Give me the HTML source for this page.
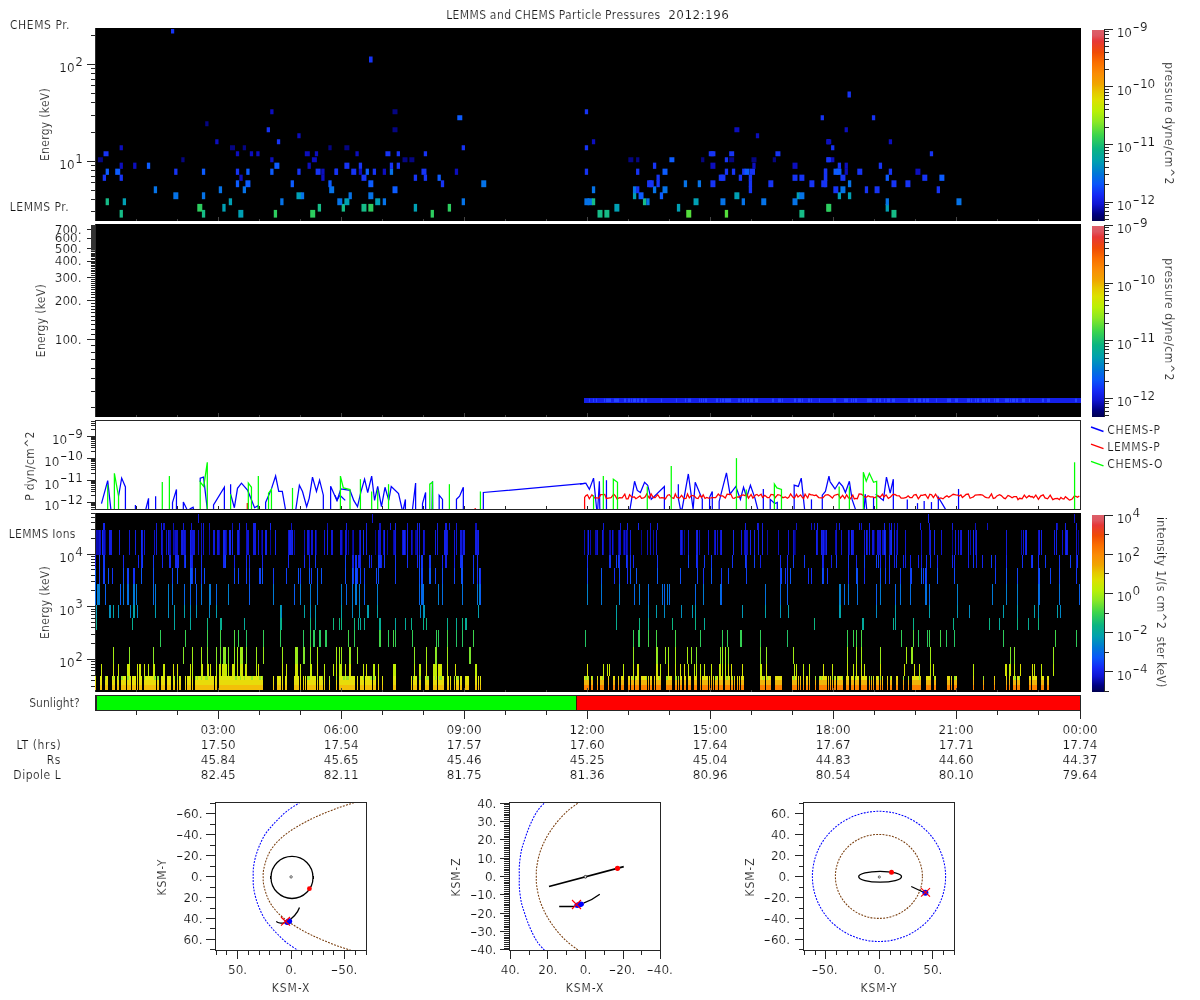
<!DOCTYPE html>
<html><head><meta charset="utf-8"><title>LEMMS and CHEMS Particle Pressures 2012:196</title>
<style>html,body{margin:0;padding:0;background:#fff}svg{display:block;will-change:transform}</style></head>
<body>
<svg width="1200" height="1000" viewBox="0 0 1200 1000">
<defs><linearGradient id="wg" x1="0" y1="0" x2="0" y2="1">
<stop offset="0.0" stop-color="#dc5f69"/>
<stop offset="0.03" stop-color="#de555f"/>
<stop offset="0.057" stop-color="#e63737"/>
<stop offset="0.117" stop-color="#f04b05"/>
<stop offset="0.17" stop-color="#fa6e00"/>
<stop offset="0.227" stop-color="#fa8c05"/>
<stop offset="0.283" stop-color="#f0a500"/>
<stop offset="0.326" stop-color="#e6c800"/>
<stop offset="0.368" stop-color="#dce100"/>
<stop offset="0.425" stop-color="#b9f005"/>
<stop offset="0.48" stop-color="#8ce823"/>
<stop offset="0.55" stop-color="#3cd54b"/>
<stop offset="0.623" stop-color="#0ab482"/>
<stop offset="0.686" stop-color="#00a0af"/>
<stop offset="0.75" stop-color="#0078d7"/>
<stop offset="0.807" stop-color="#0a55fa"/>
<stop offset="0.864" stop-color="#1428f5"/>
<stop offset="0.912" stop-color="#0f14d2"/>
<stop offset="0.963" stop-color="#000082"/>
<stop offset="1.0" stop-color="#000050"/>
</linearGradient></defs>
<style>.w{font-family:'DejaVu Sans Condensed','DejaVu Sans','Liberation Sans',sans-serif;font-size:12px;fill:#161616;stroke:#fff;stroke-width:0.16px;paint-order:fill stroke}.n{font-family:'DejaVu Sans','Liberation Sans',sans-serif;font-size:12px;fill:#161616;stroke:#fff;stroke-width:0.16px;paint-order:fill stroke}</style>
<rect x="0.00" y="0.00" width="1200.00" height="1000.00" fill="#fff" />
<text x="446.20" y="19.10" text-anchor="start" class="w" style="letter-spacing:0.42px;word-spacing:-0.6px">LEMMS and CHEMS Particle Pressures&#160;&#160;<tspan class="n" style="letter-spacing:0.45px" dx="1.2">2012:196</tspan></text>
<rect x="95.00" y="28.00" width="986.00" height="193.00" fill="#000" />
<rect x="95.00" y="28.00" width="1.00" height="193.00" fill="#2c2c2c" />
<line x1="136.50" y1="219.00" x2="136.50" y2="221.00" stroke="#444" stroke-width="1"  shape-rendering="crispEdges"/>
<line x1="177.50" y1="219.00" x2="177.50" y2="221.00" stroke="#444" stroke-width="1"  shape-rendering="crispEdges"/>
<line x1="218.50" y1="217.00" x2="218.50" y2="221.00" stroke="#444" stroke-width="1"  shape-rendering="crispEdges"/>
<line x1="259.50" y1="219.00" x2="259.50" y2="221.00" stroke="#444" stroke-width="1"  shape-rendering="crispEdges"/>
<line x1="300.50" y1="219.00" x2="300.50" y2="221.00" stroke="#444" stroke-width="1"  shape-rendering="crispEdges"/>
<line x1="341.50" y1="217.00" x2="341.50" y2="221.00" stroke="#444" stroke-width="1"  shape-rendering="crispEdges"/>
<line x1="382.50" y1="219.00" x2="382.50" y2="221.00" stroke="#444" stroke-width="1"  shape-rendering="crispEdges"/>
<line x1="423.50" y1="219.00" x2="423.50" y2="221.00" stroke="#444" stroke-width="1"  shape-rendering="crispEdges"/>
<line x1="464.50" y1="217.00" x2="464.50" y2="221.00" stroke="#444" stroke-width="1"  shape-rendering="crispEdges"/>
<line x1="505.50" y1="219.00" x2="505.50" y2="221.00" stroke="#444" stroke-width="1"  shape-rendering="crispEdges"/>
<line x1="546.50" y1="219.00" x2="546.50" y2="221.00" stroke="#444" stroke-width="1"  shape-rendering="crispEdges"/>
<line x1="587.50" y1="217.00" x2="587.50" y2="221.00" stroke="#444" stroke-width="1"  shape-rendering="crispEdges"/>
<line x1="628.50" y1="219.00" x2="628.50" y2="221.00" stroke="#444" stroke-width="1"  shape-rendering="crispEdges"/>
<line x1="669.50" y1="219.00" x2="669.50" y2="221.00" stroke="#444" stroke-width="1"  shape-rendering="crispEdges"/>
<line x1="710.50" y1="217.00" x2="710.50" y2="221.00" stroke="#444" stroke-width="1"  shape-rendering="crispEdges"/>
<line x1="751.50" y1="219.00" x2="751.50" y2="221.00" stroke="#444" stroke-width="1"  shape-rendering="crispEdges"/>
<line x1="792.50" y1="219.00" x2="792.50" y2="221.00" stroke="#444" stroke-width="1"  shape-rendering="crispEdges"/>
<line x1="833.50" y1="217.00" x2="833.50" y2="221.00" stroke="#444" stroke-width="1"  shape-rendering="crispEdges"/>
<line x1="874.50" y1="219.00" x2="874.50" y2="221.00" stroke="#444" stroke-width="1"  shape-rendering="crispEdges"/>
<line x1="915.50" y1="219.00" x2="915.50" y2="221.00" stroke="#444" stroke-width="1"  shape-rendering="crispEdges"/>
<line x1="956.50" y1="217.00" x2="956.50" y2="221.00" stroke="#444" stroke-width="1"  shape-rendering="crispEdges"/>
<line x1="997.50" y1="219.00" x2="997.50" y2="221.00" stroke="#444" stroke-width="1"  shape-rendering="crispEdges"/>
<line x1="1038.50" y1="219.00" x2="1038.50" y2="221.00" stroke="#444" stroke-width="1"  shape-rendering="crispEdges"/>
<line x1="91.00" y1="211.50" x2="95.00" y2="211.50" stroke="#262626" stroke-width="1"  shape-rendering="crispEdges"/>
<line x1="91.00" y1="199.50" x2="95.00" y2="199.50" stroke="#262626" stroke-width="1"  shape-rendering="crispEdges"/>
<line x1="91.00" y1="190.50" x2="95.00" y2="190.50" stroke="#262626" stroke-width="1"  shape-rendering="crispEdges"/>
<line x1="91.00" y1="182.50" x2="95.00" y2="182.50" stroke="#262626" stroke-width="1"  shape-rendering="crispEdges"/>
<line x1="91.00" y1="176.50" x2="95.00" y2="176.50" stroke="#262626" stroke-width="1"  shape-rendering="crispEdges"/>
<line x1="91.00" y1="170.50" x2="95.00" y2="170.50" stroke="#262626" stroke-width="1"  shape-rendering="crispEdges"/>
<line x1="91.00" y1="165.50" x2="95.00" y2="165.50" stroke="#262626" stroke-width="1"  shape-rendering="crispEdges"/>
<line x1="87.00" y1="161.50" x2="95.00" y2="161.50" stroke="#262626" stroke-width="1"  shape-rendering="crispEdges"/>
<line x1="91.00" y1="132.50" x2="95.00" y2="132.50" stroke="#262626" stroke-width="1"  shape-rendering="crispEdges"/>
<line x1="91.00" y1="115.50" x2="95.00" y2="115.50" stroke="#262626" stroke-width="1"  shape-rendering="crispEdges"/>
<line x1="91.00" y1="102.50" x2="95.00" y2="102.50" stroke="#262626" stroke-width="1"  shape-rendering="crispEdges"/>
<line x1="91.00" y1="93.50" x2="95.00" y2="93.50" stroke="#262626" stroke-width="1"  shape-rendering="crispEdges"/>
<line x1="91.00" y1="85.50" x2="95.00" y2="85.50" stroke="#262626" stroke-width="1"  shape-rendering="crispEdges"/>
<line x1="91.00" y1="79.50" x2="95.00" y2="79.50" stroke="#262626" stroke-width="1"  shape-rendering="crispEdges"/>
<line x1="91.00" y1="73.50" x2="95.00" y2="73.50" stroke="#262626" stroke-width="1"  shape-rendering="crispEdges"/>
<line x1="91.00" y1="68.50" x2="95.00" y2="68.50" stroke="#262626" stroke-width="1"  shape-rendering="crispEdges"/>
<line x1="87.00" y1="64.50" x2="95.00" y2="64.50" stroke="#262626" stroke-width="1"  shape-rendering="crispEdges"/>
<line x1="91.00" y1="35.50" x2="95.00" y2="35.50" stroke="#262626" stroke-width="1"  shape-rendering="crispEdges"/>
<text x="82.80" y="72.30" text-anchor="end" class="n">10<tspan dy="-6.5" dx="0.6" style="font-size:12px">2</tspan></text>
<text x="82.80" y="169.15" text-anchor="end" class="n">10<tspan dy="-6.5" dx="0.6" style="font-size:12px">1</tspan></text>
<text x="10.00" y="28.70" text-anchor="start" class="w" style="letter-spacing:0.55px">CHEMS Pr.</text>
<text x="9.80" y="210.70" text-anchor="start" class="w" style="letter-spacing:0.5px">LEMMS Pr.</text>
<text transform="translate(48.8,124.5) rotate(-90)" text-anchor="middle" class="w" style="letter-spacing:0.3px">Energy (keV)</text>
<rect x="1092.00" y="30.00" width="12.50" height="191.00" fill="url(#wg)" />
<line x1="1104.50" y1="29.00" x2="1104.50" y2="221.00" stroke="#262626" stroke-width="1"  shape-rendering="crispEdges"/>
<line x1="1104.00" y1="29.50" x2="1113.00" y2="29.50" stroke="#262626" stroke-width="1"  shape-rendering="crispEdges"/>
<text x="1116.70" y="37.10" text-anchor="start" class="n">10<tspan dy="-6.5" dx="0.6" style="font-size:12px"><tspan textLength="7.4" lengthAdjust="spacingAndGlyphs">-</tspan>9</tspan></text>
<line x1="1104.00" y1="31.50" x2="1109.00" y2="31.50" stroke="#262626" stroke-width="1"  shape-rendering="crispEdges"/>
<line x1="1104.00" y1="34.50" x2="1109.00" y2="34.50" stroke="#262626" stroke-width="1"  shape-rendering="crispEdges"/>
<line x1="1104.00" y1="38.50" x2="1109.00" y2="38.50" stroke="#262626" stroke-width="1"  shape-rendering="crispEdges"/>
<line x1="1104.00" y1="41.50" x2="1109.00" y2="41.50" stroke="#262626" stroke-width="1"  shape-rendering="crispEdges"/>
<line x1="1104.00" y1="46.50" x2="1109.00" y2="46.50" stroke="#262626" stroke-width="1"  shape-rendering="crispEdges"/>
<line x1="1104.00" y1="52.50" x2="1109.00" y2="52.50" stroke="#262626" stroke-width="1"  shape-rendering="crispEdges"/>
<line x1="1104.00" y1="59.50" x2="1109.00" y2="59.50" stroke="#262626" stroke-width="1"  shape-rendering="crispEdges"/>
<line x1="1104.00" y1="69.50" x2="1109.00" y2="69.50" stroke="#262626" stroke-width="1"  shape-rendering="crispEdges"/>
<line x1="1104.00" y1="86.50" x2="1113.00" y2="86.50" stroke="#262626" stroke-width="1"  shape-rendering="crispEdges"/>
<text x="1116.70" y="94.77" text-anchor="start" class="n">10<tspan dy="-6.5" dx="0.6" style="font-size:12px"><tspan textLength="7.4" lengthAdjust="spacingAndGlyphs">-</tspan>10</tspan></text>
<line x1="1104.00" y1="89.50" x2="1109.00" y2="89.50" stroke="#262626" stroke-width="1"  shape-rendering="crispEdges"/>
<line x1="1104.00" y1="92.50" x2="1109.00" y2="92.50" stroke="#262626" stroke-width="1"  shape-rendering="crispEdges"/>
<line x1="1104.00" y1="95.50" x2="1109.00" y2="95.50" stroke="#262626" stroke-width="1"  shape-rendering="crispEdges"/>
<line x1="1104.00" y1="99.50" x2="1109.00" y2="99.50" stroke="#262626" stroke-width="1"  shape-rendering="crispEdges"/>
<line x1="1104.00" y1="104.50" x2="1109.00" y2="104.50" stroke="#262626" stroke-width="1"  shape-rendering="crispEdges"/>
<line x1="1104.00" y1="109.50" x2="1109.00" y2="109.50" stroke="#262626" stroke-width="1"  shape-rendering="crispEdges"/>
<line x1="1104.00" y1="117.50" x2="1109.00" y2="117.50" stroke="#262626" stroke-width="1"  shape-rendering="crispEdges"/>
<line x1="1104.00" y1="127.50" x2="1109.00" y2="127.50" stroke="#262626" stroke-width="1"  shape-rendering="crispEdges"/>
<line x1="1104.00" y1="144.50" x2="1113.00" y2="144.50" stroke="#262626" stroke-width="1"  shape-rendering="crispEdges"/>
<text x="1116.70" y="152.44" text-anchor="start" class="n">10<tspan dy="-6.5" dx="0.6" style="font-size:12px"><tspan textLength="7.4" lengthAdjust="spacingAndGlyphs">-</tspan>11</tspan></text>
<line x1="1104.00" y1="147.50" x2="1109.00" y2="147.50" stroke="#262626" stroke-width="1"  shape-rendering="crispEdges"/>
<line x1="1104.00" y1="150.50" x2="1109.00" y2="150.50" stroke="#262626" stroke-width="1"  shape-rendering="crispEdges"/>
<line x1="1104.00" y1="153.50" x2="1109.00" y2="153.50" stroke="#262626" stroke-width="1"  shape-rendering="crispEdges"/>
<line x1="1104.00" y1="157.50" x2="1109.00" y2="157.50" stroke="#262626" stroke-width="1"  shape-rendering="crispEdges"/>
<line x1="1104.00" y1="161.50" x2="1109.00" y2="161.50" stroke="#262626" stroke-width="1"  shape-rendering="crispEdges"/>
<line x1="1104.00" y1="167.50" x2="1109.00" y2="167.50" stroke="#262626" stroke-width="1"  shape-rendering="crispEdges"/>
<line x1="1104.00" y1="174.50" x2="1109.00" y2="174.50" stroke="#262626" stroke-width="1"  shape-rendering="crispEdges"/>
<line x1="1104.00" y1="184.50" x2="1109.00" y2="184.50" stroke="#262626" stroke-width="1"  shape-rendering="crispEdges"/>
<line x1="1104.00" y1="202.50" x2="1113.00" y2="202.50" stroke="#262626" stroke-width="1"  shape-rendering="crispEdges"/>
<text x="1116.70" y="210.11" text-anchor="start" class="n">10<tspan dy="-6.5" dx="0.6" style="font-size:12px"><tspan textLength="7.4" lengthAdjust="spacingAndGlyphs">-</tspan>12</tspan></text>
<line x1="1104.00" y1="204.50" x2="1109.00" y2="204.50" stroke="#262626" stroke-width="1"  shape-rendering="crispEdges"/>
<line x1="1104.00" y1="207.50" x2="1109.00" y2="207.50" stroke="#262626" stroke-width="1"  shape-rendering="crispEdges"/>
<line x1="1104.00" y1="211.50" x2="1109.00" y2="211.50" stroke="#262626" stroke-width="1"  shape-rendering="crispEdges"/>
<line x1="1104.00" y1="215.50" x2="1109.00" y2="215.50" stroke="#262626" stroke-width="1"  shape-rendering="crispEdges"/>
<line x1="1104.00" y1="219.50" x2="1109.00" y2="219.50" stroke="#262626" stroke-width="1"  shape-rendering="crispEdges"/>
<text transform="translate(1165,123.6) rotate(90)" text-anchor="middle" class="w" style="letter-spacing:0.55px">pressure dyne/cm^2</text>
<rect x="119.60" y="209.90" width="3.30" height="7.70" fill="#16bc87" />
<rect x="201.89" y="209.90" width="3.30" height="7.70" fill="#16bc87" />
<rect x="238.33" y="209.90" width="5.00" height="7.70" fill="#00a0b4" />
<rect x="273.77" y="209.90" width="3.30" height="7.70" fill="#2dcd5f" />
<rect x="310.21" y="209.90" width="5.00" height="7.70" fill="#2dcd5f" />
<rect x="197.29" y="203.90" width="5.00" height="7.70" fill="#2dcd5f" />
<rect x="222.31" y="203.90" width="3.30" height="7.70" fill="#00a0b4" />
<rect x="317.73" y="203.90" width="3.30" height="7.70" fill="#16bc87" />
<rect x="105.64" y="198.30" width="3.30" height="6.90" fill="#16bc87" />
<rect x="122.72" y="198.30" width="3.30" height="6.90" fill="#00a0b4" />
<rect x="228.77" y="198.30" width="3.30" height="6.90" fill="#00a0b4" />
<rect x="280.23" y="198.30" width="3.30" height="6.90" fill="#0573e8" />
<rect x="173.33" y="192.30" width="5.00" height="6.90" fill="#0573e8" />
<rect x="201.89" y="192.30" width="3.30" height="6.90" fill="#0573e8" />
<rect x="296.46" y="192.30" width="5.00" height="6.90" fill="#00a0b4" />
<rect x="300.85" y="192.30" width="3.30" height="6.90" fill="#0573e8" />
<rect x="153.77" y="186.30" width="3.30" height="6.90" fill="#0573e8" />
<rect x="218.77" y="186.30" width="3.30" height="6.90" fill="#0573e8" />
<rect x="242.72" y="186.30" width="3.30" height="6.90" fill="#0573e8" />
<rect x="329.17" y="186.30" width="5.00" height="6.90" fill="#0573e8" />
<rect x="235.85" y="180.30" width="3.30" height="6.90" fill="#0c5cff" />
<rect x="245.42" y="180.30" width="5.00" height="6.90" fill="#0c5cff" />
<rect x="290.64" y="180.30" width="3.30" height="6.90" fill="#0c5cff" />
<rect x="328.35" y="180.30" width="3.30" height="6.90" fill="#0c5cff" />
<rect x="102.72" y="174.65" width="3.30" height="6.20" fill="#1634f5" />
<rect x="119.60" y="174.65" width="3.30" height="6.20" fill="#1634f5" />
<rect x="239.39" y="174.65" width="3.30" height="6.20" fill="#0c0ebe" />
<rect x="321.27" y="174.65" width="3.30" height="6.20" fill="#0c0ebe" />
<rect x="105.64" y="168.65" width="3.30" height="6.20" fill="#0c5cff" />
<rect x="115.21" y="168.65" width="5.00" height="6.20" fill="#0c5cff" />
<rect x="174.18" y="168.65" width="3.30" height="6.20" fill="#1634f5" />
<rect x="201.89" y="168.65" width="3.30" height="6.20" fill="#0c5cff" />
<rect x="235.85" y="168.65" width="3.30" height="6.20" fill="#1634f5" />
<rect x="246.27" y="168.65" width="3.30" height="6.20" fill="#0c5cff" />
<rect x="270.23" y="168.65" width="3.30" height="6.20" fill="#0c5cff" />
<rect x="297.31" y="168.65" width="3.30" height="6.20" fill="#1634f5" />
<rect x="315.62" y="168.65" width="5.00" height="6.20" fill="#1634f5" />
<rect x="321.27" y="168.65" width="3.30" height="6.20" fill="#0c0ebe" />
<rect x="334.81" y="168.65" width="3.30" height="6.20" fill="#1634f5" />
<rect x="119.60" y="162.65" width="3.30" height="6.20" fill="#0c0ebe" />
<rect x="133.14" y="162.65" width="3.30" height="6.20" fill="#0c0ebe" />
<rect x="146.89" y="162.65" width="3.30" height="6.20" fill="#0c5cff" />
<rect x="274.38" y="162.65" width="5.00" height="6.20" fill="#0c5cff" />
<rect x="307.52" y="162.65" width="3.30" height="6.20" fill="#0c0ebe" />
<rect x="97.92" y="157.25" width="5.00" height="5.00" fill="#050582" />
<rect x="181.27" y="157.25" width="3.30" height="5.00" fill="#050582" />
<rect x="270.23" y="157.25" width="3.30" height="5.00" fill="#0c0ebe" />
<rect x="311.88" y="157.25" width="5.00" height="5.00" fill="#0c0ebe" />
<rect x="103.54" y="151.25" width="5.00" height="5.00" fill="#1634f5" />
<rect x="235.85" y="151.25" width="3.30" height="5.00" fill="#0c0ebe" />
<rect x="249.81" y="151.25" width="3.30" height="5.00" fill="#0c0ebe" />
<rect x="256.27" y="151.25" width="3.30" height="5.00" fill="#0c0ebe" />
<rect x="304.79" y="151.25" width="5.00" height="5.00" fill="#0c0ebe" />
<rect x="314.81" y="151.25" width="3.30" height="5.00" fill="#0c0ebe" />
<rect x="119.60" y="145.25" width="3.30" height="5.00" fill="#0c0ebe" />
<rect x="230.00" y="145.25" width="5.00" height="5.00" fill="#050582" />
<rect x="242.72" y="145.25" width="3.30" height="5.00" fill="#050582" />
<rect x="328.35" y="145.25" width="3.30" height="5.00" fill="#050582" />
<rect x="215.22" y="139.25" width="3.30" height="5.00" fill="#0c0ebe" />
<rect x="276.89" y="139.25" width="3.30" height="5.00" fill="#1634f5" />
<rect x="297.31" y="133.25" width="3.30" height="5.00" fill="#0c0ebe" />
<rect x="266.68" y="127.25" width="3.30" height="5.00" fill="#1634f5" />
<rect x="205.22" y="121.25" width="3.30" height="5.00" fill="#050582" />
<rect x="270.23" y="109.25" width="3.30" height="5.00" fill="#0c0ebe" />
<rect x="430.64" y="209.90" width="3.30" height="7.70" fill="#2dcd5f" />
<rect x="341.68" y="203.90" width="3.30" height="7.70" fill="#16bc87" />
<rect x="361.46" y="203.90" width="5.00" height="7.70" fill="#16bc87" />
<rect x="368.33" y="203.90" width="5.00" height="7.70" fill="#2dcd5f" />
<rect x="413.77" y="203.90" width="3.30" height="7.70" fill="#00a0b4" />
<rect x="447.73" y="203.90" width="3.30" height="7.70" fill="#2dcd5f" />
<rect x="337.29" y="198.30" width="5.00" height="6.90" fill="#0573e8" />
<rect x="344.38" y="198.30" width="5.00" height="6.90" fill="#00a0b4" />
<rect x="375.21" y="198.30" width="5.00" height="6.90" fill="#00a0b4" />
<rect x="382.73" y="198.30" width="3.30" height="6.90" fill="#0573e8" />
<rect x="461.68" y="198.30" width="3.30" height="6.90" fill="#0573e8" />
<rect x="348.56" y="192.30" width="3.30" height="6.90" fill="#0573e8" />
<rect x="368.33" y="192.30" width="5.00" height="6.90" fill="#0573e8" />
<rect x="392.50" y="186.30" width="5.00" height="6.90" fill="#0c5cff" />
<rect x="368.33" y="180.30" width="5.00" height="6.90" fill="#0c5cff" />
<rect x="440.85" y="180.30" width="3.30" height="6.90" fill="#1634f5" />
<rect x="481.25" y="180.30" width="5.00" height="6.90" fill="#0573e8" />
<rect x="361.46" y="174.65" width="5.00" height="6.20" fill="#1634f5" />
<rect x="413.77" y="174.65" width="3.30" height="6.20" fill="#1634f5" />
<rect x="423.77" y="174.65" width="3.30" height="6.20" fill="#1634f5" />
<rect x="437.52" y="174.65" width="3.30" height="6.20" fill="#0c5cff" />
<rect x="334.39" y="168.65" width="3.30" height="6.20" fill="#1634f5" />
<rect x="351.25" y="168.65" width="5.00" height="6.20" fill="#1634f5" />
<rect x="358.77" y="168.65" width="3.30" height="6.20" fill="#0c0ebe" />
<rect x="365.64" y="168.65" width="3.30" height="6.20" fill="#0c5cff" />
<rect x="372.73" y="168.65" width="3.30" height="6.20" fill="#1634f5" />
<rect x="382.73" y="168.65" width="3.30" height="6.20" fill="#0c0ebe" />
<rect x="389.81" y="168.65" width="3.30" height="6.20" fill="#0573e8" />
<rect x="421.46" y="168.65" width="5.00" height="6.20" fill="#1634f5" />
<rect x="454.81" y="168.65" width="3.30" height="6.20" fill="#0c0ebe" />
<rect x="344.38" y="162.65" width="5.00" height="6.20" fill="#1634f5" />
<rect x="358.77" y="162.65" width="3.30" height="6.20" fill="#1634f5" />
<rect x="389.81" y="162.65" width="3.30" height="6.20" fill="#1634f5" />
<rect x="396.68" y="162.65" width="3.30" height="6.20" fill="#1634f5" />
<rect x="402.50" y="157.25" width="5.00" height="5.00" fill="#050582" />
<rect x="409.38" y="157.25" width="5.00" height="5.00" fill="#050582" />
<rect x="355.43" y="151.25" width="3.30" height="5.00" fill="#0c0ebe" />
<rect x="385.42" y="151.25" width="5.00" height="5.00" fill="#1634f5" />
<rect x="396.68" y="151.25" width="3.30" height="5.00" fill="#1634f5" />
<rect x="423.77" y="151.25" width="3.30" height="5.00" fill="#1634f5" />
<rect x="344.38" y="145.25" width="5.00" height="5.00" fill="#050582" />
<rect x="461.68" y="145.25" width="3.30" height="5.00" fill="#1634f5" />
<rect x="392.50" y="127.25" width="5.00" height="5.00" fill="#050582" />
<rect x="457.29" y="115.25" width="5.00" height="5.00" fill="#0c5cff" />
<rect x="392.50" y="109.25" width="5.00" height="5.00" fill="#050582" />
<rect x="597.50" y="209.90" width="5.00" height="7.70" fill="#16bc87" />
<rect x="604.38" y="209.90" width="5.00" height="7.70" fill="#16bc87" />
<rect x="686.25" y="209.90" width="5.00" height="7.70" fill="#55de3c" />
<rect x="724.81" y="209.90" width="3.30" height="7.70" fill="#55de3c" />
<rect x="799.38" y="209.90" width="5.00" height="7.70" fill="#16bc87" />
<rect x="614.38" y="203.90" width="5.00" height="7.70" fill="#00a0b4" />
<rect x="676.89" y="203.90" width="3.30" height="7.70" fill="#00a0b4" />
<rect x="826.68" y="203.90" width="3.30" height="7.70" fill="#2dcd5f" />
<rect x="584.38" y="198.30" width="5.00" height="6.90" fill="#0573e8" />
<rect x="587.50" y="198.30" width="5.00" height="6.90" fill="#0573e8" />
<rect x="591.89" y="198.30" width="3.30" height="6.90" fill="#16bc87" />
<rect x="642.93" y="198.30" width="3.30" height="6.90" fill="#16bc87" />
<rect x="646.27" y="198.30" width="3.30" height="6.90" fill="#0573e8" />
<rect x="693.54" y="198.30" width="5.00" height="6.90" fill="#00a0b4" />
<rect x="720.42" y="198.30" width="5.00" height="6.90" fill="#0573e8" />
<rect x="741.68" y="198.30" width="3.30" height="6.90" fill="#0573e8" />
<rect x="761.25" y="198.30" width="5.00" height="6.90" fill="#0573e8" />
<rect x="792.50" y="198.30" width="5.00" height="6.90" fill="#0573e8" />
<rect x="632.93" y="192.30" width="3.30" height="6.90" fill="#00a0b4" />
<rect x="638.54" y="192.30" width="5.00" height="6.90" fill="#0c5cff" />
<rect x="659.81" y="192.30" width="3.30" height="6.90" fill="#0c5cff" />
<rect x="734.38" y="192.30" width="5.00" height="6.90" fill="#00a0b4" />
<rect x="796.68" y="192.30" width="3.30" height="6.90" fill="#00a0b4" />
<rect x="799.38" y="192.30" width="5.00" height="6.90" fill="#0573e8" />
<rect x="591.89" y="186.30" width="3.30" height="6.90" fill="#0573e8" />
<rect x="632.93" y="186.30" width="3.30" height="6.90" fill="#0573e8" />
<rect x="636.06" y="186.30" width="3.30" height="6.90" fill="#1634f5" />
<rect x="652.93" y="186.30" width="3.30" height="6.90" fill="#0573e8" />
<rect x="662.50" y="186.30" width="5.00" height="6.90" fill="#0573e8" />
<rect x="748.77" y="186.30" width="3.30" height="6.90" fill="#1634f5" />
<rect x="647.08" y="180.30" width="5.00" height="6.90" fill="#1634f5" />
<rect x="648.75" y="180.30" width="5.00" height="6.90" fill="#1634f5" />
<rect x="656.48" y="180.30" width="3.30" height="6.90" fill="#1634f5" />
<rect x="683.77" y="180.30" width="3.30" height="6.90" fill="#0573e8" />
<rect x="697.73" y="180.30" width="3.30" height="6.90" fill="#0573e8" />
<rect x="710.42" y="180.30" width="5.00" height="6.90" fill="#1634f5" />
<rect x="748.77" y="180.30" width="3.30" height="6.90" fill="#1634f5" />
<rect x="768.33" y="180.30" width="5.00" height="6.90" fill="#1634f5" />
<rect x="809.38" y="180.30" width="5.00" height="6.90" fill="#1634f5" />
<rect x="821.25" y="180.30" width="5.00" height="6.90" fill="#1634f5" />
<rect x="656.48" y="174.65" width="3.30" height="6.20" fill="#1634f5" />
<rect x="718.75" y="174.65" width="5.00" height="6.20" fill="#1634f5" />
<rect x="720.42" y="174.65" width="5.00" height="6.20" fill="#1634f5" />
<rect x="738.77" y="174.65" width="3.30" height="6.20" fill="#1634f5" />
<rect x="748.77" y="174.65" width="3.30" height="6.20" fill="#1634f5" />
<rect x="792.50" y="174.65" width="5.00" height="6.20" fill="#1634f5" />
<rect x="799.38" y="174.65" width="5.00" height="6.20" fill="#1634f5" />
<rect x="823.77" y="174.65" width="3.30" height="6.20" fill="#1634f5" />
<rect x="584.81" y="168.65" width="3.30" height="6.20" fill="#1634f5" />
<rect x="636.06" y="168.65" width="3.30" height="6.20" fill="#1634f5" />
<rect x="662.50" y="168.65" width="5.00" height="6.20" fill="#0c5cff" />
<rect x="724.81" y="168.65" width="3.30" height="6.20" fill="#1634f5" />
<rect x="731.89" y="168.65" width="3.30" height="6.20" fill="#1634f5" />
<rect x="742.10" y="168.65" width="3.30" height="6.20" fill="#1634f5" />
<rect x="744.58" y="168.65" width="5.00" height="6.20" fill="#0c5cff" />
<rect x="750.00" y="168.65" width="5.00" height="6.20" fill="#1634f5" />
<rect x="823.77" y="168.65" width="3.30" height="6.20" fill="#1634f5" />
<rect x="652.93" y="162.65" width="3.30" height="6.20" fill="#1634f5" />
<rect x="710.42" y="162.65" width="5.00" height="6.20" fill="#0c0ebe" />
<rect x="752.31" y="162.65" width="3.30" height="6.20" fill="#0c0ebe" />
<rect x="792.50" y="162.65" width="5.00" height="6.20" fill="#0c0ebe" />
<rect x="628.33" y="157.25" width="5.00" height="5.00" fill="#050582" />
<rect x="636.06" y="157.25" width="3.30" height="5.00" fill="#050582" />
<rect x="669.38" y="157.25" width="5.00" height="5.00" fill="#0c5cff" />
<rect x="701.06" y="157.25" width="3.30" height="5.00" fill="#050582" />
<rect x="724.81" y="157.25" width="3.30" height="5.00" fill="#1634f5" />
<rect x="729.17" y="157.25" width="5.00" height="5.00" fill="#050582" />
<rect x="751.46" y="157.25" width="5.00" height="5.00" fill="#050582" />
<rect x="772.73" y="157.25" width="3.30" height="5.00" fill="#050582" />
<rect x="826.68" y="157.25" width="3.30" height="5.00" fill="#1634f5" />
<rect x="708.75" y="151.25" width="5.00" height="5.00" fill="#1634f5" />
<rect x="710.42" y="151.25" width="5.00" height="5.00" fill="#1634f5" />
<rect x="729.17" y="151.25" width="5.00" height="5.00" fill="#1634f5" />
<rect x="775.42" y="151.25" width="5.00" height="5.00" fill="#1634f5" />
<rect x="584.81" y="145.25" width="3.30" height="5.00" fill="#1634f5" />
<rect x="591.89" y="139.25" width="3.30" height="5.00" fill="#0c0ebe" />
<rect x="826.68" y="139.25" width="3.30" height="5.00" fill="#1634f5" />
<rect x="755.85" y="133.25" width="3.30" height="5.00" fill="#0c0ebe" />
<rect x="734.38" y="127.25" width="5.00" height="5.00" fill="#0c0ebe" />
<rect x="820.64" y="115.25" width="3.30" height="5.00" fill="#1634f5" />
<rect x="584.81" y="109.25" width="3.30" height="5.00" fill="#1634f5" />
<rect x="891.46" y="209.90" width="5.00" height="7.70" fill="#16bc87" />
<rect x="826.25" y="203.90" width="5.00" height="7.70" fill="#2dcd5f" />
<rect x="885.64" y="203.90" width="3.30" height="7.70" fill="#00a0b4" />
<rect x="885.64" y="198.30" width="3.30" height="6.90" fill="#0573e8" />
<rect x="956.46" y="198.30" width="5.00" height="6.90" fill="#0573e8" />
<rect x="837.73" y="192.30" width="3.30" height="6.90" fill="#00a0b4" />
<rect x="847.93" y="192.30" width="3.30" height="6.90" fill="#00a0b4" />
<rect x="833.33" y="186.30" width="5.00" height="6.90" fill="#1634f5" />
<rect x="840.42" y="186.30" width="5.00" height="6.90" fill="#0573e8" />
<rect x="864.81" y="186.30" width="3.30" height="6.90" fill="#1634f5" />
<rect x="874.58" y="186.30" width="5.00" height="6.90" fill="#1634f5" />
<rect x="936.68" y="186.30" width="3.30" height="6.90" fill="#1634f5" />
<rect x="823.98" y="180.30" width="3.30" height="6.90" fill="#1634f5" />
<rect x="847.93" y="180.30" width="3.30" height="6.90" fill="#0573e8" />
<rect x="891.46" y="180.30" width="5.00" height="6.90" fill="#1634f5" />
<rect x="905.42" y="180.30" width="5.00" height="6.90" fill="#1634f5" />
<rect x="823.98" y="174.65" width="3.30" height="6.20" fill="#1634f5" />
<rect x="840.42" y="174.65" width="5.00" height="6.20" fill="#1634f5" />
<rect x="885.64" y="174.65" width="3.30" height="6.20" fill="#0c5cff" />
<rect x="922.29" y="174.65" width="5.00" height="6.20" fill="#1634f5" />
<rect x="939.38" y="174.65" width="5.00" height="6.20" fill="#0c5cff" />
<rect x="823.98" y="168.65" width="3.30" height="6.20" fill="#1634f5" />
<rect x="833.54" y="168.65" width="5.00" height="6.20" fill="#0c5cff" />
<rect x="836.46" y="168.65" width="5.00" height="6.20" fill="#0c5cff" />
<rect x="844.60" y="168.65" width="3.30" height="6.20" fill="#0c0ebe" />
<rect x="857.29" y="168.65" width="5.00" height="6.20" fill="#1634f5" />
<rect x="888.77" y="168.65" width="3.30" height="6.20" fill="#1634f5" />
<rect x="915.42" y="168.65" width="5.00" height="6.20" fill="#0c0ebe" />
<rect x="837.73" y="162.65" width="3.30" height="6.20" fill="#1634f5" />
<rect x="844.60" y="162.65" width="3.30" height="6.20" fill="#0c0ebe" />
<rect x="878.77" y="162.65" width="3.30" height="6.20" fill="#1634f5" />
<rect x="826.25" y="157.25" width="5.00" height="5.00" fill="#1634f5" />
<rect x="831.06" y="157.25" width="3.30" height="5.00" fill="#0c0ebe" />
<rect x="929.81" y="151.25" width="3.30" height="5.00" fill="#1634f5" />
<rect x="831.06" y="145.25" width="3.30" height="5.00" fill="#1634f5" />
<rect x="826.25" y="139.25" width="5.00" height="5.00" fill="#0c0ebe" />
<rect x="888.77" y="139.25" width="3.30" height="5.00" fill="#0c0ebe" />
<rect x="844.60" y="127.25" width="3.30" height="5.00" fill="#0c0ebe" />
<rect x="871.89" y="115.25" width="3.30" height="5.00" fill="#1634f5" />
<rect x="171.00" y="29.00" width="3.20" height="4.50" fill="#1634f5" />
<rect x="369.00" y="56.50" width="3.60" height="6.00" fill="#1634f5" />
<rect x="847.50" y="91.50" width="3.40" height="6.00" fill="#1634f5" />
<rect x="95.00" y="224.00" width="986.00" height="193.00" fill="#000" />
<rect x="95.00" y="224.00" width="1.00" height="193.00" fill="#2c2c2c" />
<line x1="136.50" y1="415.00" x2="136.50" y2="417.00" stroke="#444" stroke-width="1"  shape-rendering="crispEdges"/>
<line x1="177.50" y1="415.00" x2="177.50" y2="417.00" stroke="#444" stroke-width="1"  shape-rendering="crispEdges"/>
<line x1="218.50" y1="413.00" x2="218.50" y2="417.00" stroke="#444" stroke-width="1"  shape-rendering="crispEdges"/>
<line x1="259.50" y1="415.00" x2="259.50" y2="417.00" stroke="#444" stroke-width="1"  shape-rendering="crispEdges"/>
<line x1="300.50" y1="415.00" x2="300.50" y2="417.00" stroke="#444" stroke-width="1"  shape-rendering="crispEdges"/>
<line x1="341.50" y1="413.00" x2="341.50" y2="417.00" stroke="#444" stroke-width="1"  shape-rendering="crispEdges"/>
<line x1="382.50" y1="415.00" x2="382.50" y2="417.00" stroke="#444" stroke-width="1"  shape-rendering="crispEdges"/>
<line x1="423.50" y1="415.00" x2="423.50" y2="417.00" stroke="#444" stroke-width="1"  shape-rendering="crispEdges"/>
<line x1="464.50" y1="413.00" x2="464.50" y2="417.00" stroke="#444" stroke-width="1"  shape-rendering="crispEdges"/>
<line x1="505.50" y1="415.00" x2="505.50" y2="417.00" stroke="#444" stroke-width="1"  shape-rendering="crispEdges"/>
<line x1="546.50" y1="415.00" x2="546.50" y2="417.00" stroke="#444" stroke-width="1"  shape-rendering="crispEdges"/>
<line x1="587.50" y1="413.00" x2="587.50" y2="417.00" stroke="#444" stroke-width="1"  shape-rendering="crispEdges"/>
<line x1="628.50" y1="415.00" x2="628.50" y2="417.00" stroke="#444" stroke-width="1"  shape-rendering="crispEdges"/>
<line x1="669.50" y1="415.00" x2="669.50" y2="417.00" stroke="#444" stroke-width="1"  shape-rendering="crispEdges"/>
<line x1="710.50" y1="413.00" x2="710.50" y2="417.00" stroke="#444" stroke-width="1"  shape-rendering="crispEdges"/>
<line x1="751.50" y1="415.00" x2="751.50" y2="417.00" stroke="#444" stroke-width="1"  shape-rendering="crispEdges"/>
<line x1="792.50" y1="415.00" x2="792.50" y2="417.00" stroke="#444" stroke-width="1"  shape-rendering="crispEdges"/>
<line x1="833.50" y1="413.00" x2="833.50" y2="417.00" stroke="#444" stroke-width="1"  shape-rendering="crispEdges"/>
<line x1="874.50" y1="415.00" x2="874.50" y2="417.00" stroke="#444" stroke-width="1"  shape-rendering="crispEdges"/>
<line x1="915.50" y1="415.00" x2="915.50" y2="417.00" stroke="#444" stroke-width="1"  shape-rendering="crispEdges"/>
<line x1="956.50" y1="413.00" x2="956.50" y2="417.00" stroke="#444" stroke-width="1"  shape-rendering="crispEdges"/>
<line x1="997.50" y1="415.00" x2="997.50" y2="417.00" stroke="#444" stroke-width="1"  shape-rendering="crispEdges"/>
<line x1="1038.50" y1="415.00" x2="1038.50" y2="417.00" stroke="#444" stroke-width="1"  shape-rendering="crispEdges"/>
<line x1="91.00" y1="407.50" x2="95.00" y2="407.50" stroke="#222" stroke-width="1"  shape-rendering="crispEdges"/>
<line x1="91.00" y1="391.50" x2="95.00" y2="391.50" stroke="#222" stroke-width="1"  shape-rendering="crispEdges"/>
<line x1="91.00" y1="378.50" x2="95.00" y2="378.50" stroke="#222" stroke-width="1"  shape-rendering="crispEdges"/>
<line x1="91.00" y1="368.50" x2="95.00" y2="368.50" stroke="#222" stroke-width="1"  shape-rendering="crispEdges"/>
<line x1="91.00" y1="359.50" x2="95.00" y2="359.50" stroke="#222" stroke-width="1"  shape-rendering="crispEdges"/>
<line x1="91.00" y1="352.50" x2="95.00" y2="352.50" stroke="#222" stroke-width="1"  shape-rendering="crispEdges"/>
<line x1="91.00" y1="345.50" x2="95.00" y2="345.50" stroke="#222" stroke-width="1"  shape-rendering="crispEdges"/>
<line x1="87.00" y1="339.50" x2="95.00" y2="339.50" stroke="#262626" stroke-width="1"  shape-rendering="crispEdges"/>
<line x1="91.00" y1="334.50" x2="95.00" y2="334.50" stroke="#222" stroke-width="1"  shape-rendering="crispEdges"/>
<line x1="91.00" y1="329.50" x2="95.00" y2="329.50" stroke="#222" stroke-width="1"  shape-rendering="crispEdges"/>
<line x1="91.00" y1="324.50" x2="95.00" y2="324.50" stroke="#222" stroke-width="1"  shape-rendering="crispEdges"/>
<line x1="91.00" y1="320.50" x2="95.00" y2="320.50" stroke="#222" stroke-width="1"  shape-rendering="crispEdges"/>
<line x1="91.00" y1="316.50" x2="95.00" y2="316.50" stroke="#222" stroke-width="1"  shape-rendering="crispEdges"/>
<line x1="91.00" y1="312.50" x2="95.00" y2="312.50" stroke="#222" stroke-width="1"  shape-rendering="crispEdges"/>
<line x1="91.00" y1="309.50" x2="95.00" y2="309.50" stroke="#222" stroke-width="1"  shape-rendering="crispEdges"/>
<line x1="91.00" y1="306.50" x2="95.00" y2="306.50" stroke="#222" stroke-width="1"  shape-rendering="crispEdges"/>
<line x1="91.00" y1="303.50" x2="95.00" y2="303.50" stroke="#222" stroke-width="1"  shape-rendering="crispEdges"/>
<line x1="87.00" y1="300.50" x2="95.00" y2="300.50" stroke="#262626" stroke-width="1"  shape-rendering="crispEdges"/>
<line x1="91.00" y1="297.50" x2="95.00" y2="297.50" stroke="#222" stroke-width="1"  shape-rendering="crispEdges"/>
<line x1="91.00" y1="294.50" x2="95.00" y2="294.50" stroke="#222" stroke-width="1"  shape-rendering="crispEdges"/>
<line x1="91.00" y1="292.50" x2="95.00" y2="292.50" stroke="#222" stroke-width="1"  shape-rendering="crispEdges"/>
<line x1="91.00" y1="289.50" x2="95.00" y2="289.50" stroke="#222" stroke-width="1"  shape-rendering="crispEdges"/>
<line x1="91.00" y1="287.50" x2="95.00" y2="287.50" stroke="#222" stroke-width="1"  shape-rendering="crispEdges"/>
<line x1="91.00" y1="285.50" x2="95.00" y2="285.50" stroke="#222" stroke-width="1"  shape-rendering="crispEdges"/>
<line x1="91.00" y1="283.50" x2="95.00" y2="283.50" stroke="#222" stroke-width="1"  shape-rendering="crispEdges"/>
<line x1="91.00" y1="281.50" x2="95.00" y2="281.50" stroke="#222" stroke-width="1"  shape-rendering="crispEdges"/>
<line x1="91.00" y1="279.50" x2="95.00" y2="279.50" stroke="#222" stroke-width="1"  shape-rendering="crispEdges"/>
<line x1="87.00" y1="277.50" x2="95.00" y2="277.50" stroke="#262626" stroke-width="1"  shape-rendering="crispEdges"/>
<line x1="91.00" y1="275.50" x2="95.00" y2="275.50" stroke="#222" stroke-width="1"  shape-rendering="crispEdges"/>
<line x1="91.00" y1="273.50" x2="95.00" y2="273.50" stroke="#222" stroke-width="1"  shape-rendering="crispEdges"/>
<line x1="91.00" y1="271.50" x2="95.00" y2="271.50" stroke="#222" stroke-width="1"  shape-rendering="crispEdges"/>
<line x1="91.00" y1="270.50" x2="95.00" y2="270.50" stroke="#222" stroke-width="1"  shape-rendering="crispEdges"/>
<line x1="91.00" y1="268.50" x2="95.00" y2="268.50" stroke="#222" stroke-width="1"  shape-rendering="crispEdges"/>
<line x1="91.00" y1="266.50" x2="95.00" y2="266.50" stroke="#222" stroke-width="1"  shape-rendering="crispEdges"/>
<line x1="91.00" y1="265.50" x2="95.00" y2="265.50" stroke="#222" stroke-width="1"  shape-rendering="crispEdges"/>
<line x1="91.00" y1="263.50" x2="95.00" y2="263.50" stroke="#222" stroke-width="1"  shape-rendering="crispEdges"/>
<line x1="91.00" y1="262.50" x2="95.00" y2="262.50" stroke="#222" stroke-width="1"  shape-rendering="crispEdges"/>
<line x1="87.00" y1="261.50" x2="95.00" y2="261.50" stroke="#262626" stroke-width="1"  shape-rendering="crispEdges"/>
<line x1="91.00" y1="259.50" x2="95.00" y2="259.50" stroke="#222" stroke-width="1"  shape-rendering="crispEdges"/>
<line x1="91.00" y1="258.50" x2="95.00" y2="258.50" stroke="#222" stroke-width="1"  shape-rendering="crispEdges"/>
<line x1="91.00" y1="256.50" x2="95.00" y2="256.50" stroke="#222" stroke-width="1"  shape-rendering="crispEdges"/>
<line x1="91.00" y1="255.50" x2="95.00" y2="255.50" stroke="#222" stroke-width="1"  shape-rendering="crispEdges"/>
<line x1="91.00" y1="254.50" x2="95.00" y2="254.50" stroke="#222" stroke-width="1"  shape-rendering="crispEdges"/>
<line x1="91.00" y1="253.50" x2="95.00" y2="253.50" stroke="#222" stroke-width="1"  shape-rendering="crispEdges"/>
<line x1="91.00" y1="251.50" x2="95.00" y2="251.50" stroke="#222" stroke-width="1"  shape-rendering="crispEdges"/>
<line x1="87.00" y1="248.50" x2="95.00" y2="248.50" stroke="#262626" stroke-width="1"  shape-rendering="crispEdges"/>
<line x1="87.00" y1="238.50" x2="95.00" y2="238.50" stroke="#262626" stroke-width="1"  shape-rendering="crispEdges"/>
<line x1="87.00" y1="229.50" x2="95.00" y2="229.50" stroke="#262626" stroke-width="1"  shape-rendering="crispEdges"/>
<rect x="91.00" y="225.00" width="4.00" height="25.60" fill="#333" />
<text x="81.50" y="343.80" text-anchor="end" class="n" >100.</text>
<text x="81.50" y="304.61" text-anchor="end" class="n" >200.</text>
<text x="81.50" y="281.68" text-anchor="end" class="n" >300.</text>
<text x="81.50" y="265.41" text-anchor="end" class="n" >400.</text>
<text x="81.50" y="252.79" text-anchor="end" class="n" >500.</text>
<text x="81.50" y="242.48" text-anchor="end" class="n" >600.</text>
<text x="81.50" y="233.77" text-anchor="end" class="n" >700.</text>
<text transform="translate(44.8,320.6) rotate(-90)" text-anchor="middle" class="w" style="letter-spacing:0.3px">Energy (keV)</text>
<rect x="1092.00" y="226.00" width="12.50" height="191.00" fill="url(#wg)" />
<line x1="1104.50" y1="225.00" x2="1104.50" y2="417.00" stroke="#262626" stroke-width="1"  shape-rendering="crispEdges"/>
<line x1="1104.00" y1="225.50" x2="1113.00" y2="225.50" stroke="#262626" stroke-width="1"  shape-rendering="crispEdges"/>
<text x="1116.70" y="233.20" text-anchor="start" class="n">10<tspan dy="-6.5" dx="0.6" style="font-size:12px"><tspan textLength="7.4" lengthAdjust="spacingAndGlyphs">-</tspan>9</tspan></text>
<line x1="1104.00" y1="227.50" x2="1109.00" y2="227.50" stroke="#262626" stroke-width="1"  shape-rendering="crispEdges"/>
<line x1="1104.00" y1="230.50" x2="1109.00" y2="230.50" stroke="#262626" stroke-width="1"  shape-rendering="crispEdges"/>
<line x1="1104.00" y1="234.50" x2="1109.00" y2="234.50" stroke="#262626" stroke-width="1"  shape-rendering="crispEdges"/>
<line x1="1104.00" y1="238.50" x2="1109.00" y2="238.50" stroke="#262626" stroke-width="1"  shape-rendering="crispEdges"/>
<line x1="1104.00" y1="242.50" x2="1109.00" y2="242.50" stroke="#262626" stroke-width="1"  shape-rendering="crispEdges"/>
<line x1="1104.00" y1="248.50" x2="1109.00" y2="248.50" stroke="#262626" stroke-width="1"  shape-rendering="crispEdges"/>
<line x1="1104.00" y1="255.50" x2="1109.00" y2="255.50" stroke="#262626" stroke-width="1"  shape-rendering="crispEdges"/>
<line x1="1104.00" y1="265.50" x2="1109.00" y2="265.50" stroke="#262626" stroke-width="1"  shape-rendering="crispEdges"/>
<line x1="1104.00" y1="283.50" x2="1113.00" y2="283.50" stroke="#262626" stroke-width="1"  shape-rendering="crispEdges"/>
<text x="1116.70" y="290.90" text-anchor="start" class="n">10<tspan dy="-6.5" dx="0.6" style="font-size:12px"><tspan textLength="7.4" lengthAdjust="spacingAndGlyphs">-</tspan>10</tspan></text>
<line x1="1104.00" y1="285.50" x2="1109.00" y2="285.50" stroke="#262626" stroke-width="1"  shape-rendering="crispEdges"/>
<line x1="1104.00" y1="288.50" x2="1109.00" y2="288.50" stroke="#262626" stroke-width="1"  shape-rendering="crispEdges"/>
<line x1="1104.00" y1="291.50" x2="1109.00" y2="291.50" stroke="#262626" stroke-width="1"  shape-rendering="crispEdges"/>
<line x1="1104.00" y1="295.50" x2="1109.00" y2="295.50" stroke="#262626" stroke-width="1"  shape-rendering="crispEdges"/>
<line x1="1104.00" y1="300.50" x2="1109.00" y2="300.50" stroke="#262626" stroke-width="1"  shape-rendering="crispEdges"/>
<line x1="1104.00" y1="305.50" x2="1109.00" y2="305.50" stroke="#262626" stroke-width="1"  shape-rendering="crispEdges"/>
<line x1="1104.00" y1="313.50" x2="1109.00" y2="313.50" stroke="#262626" stroke-width="1"  shape-rendering="crispEdges"/>
<line x1="1104.00" y1="323.50" x2="1109.00" y2="323.50" stroke="#262626" stroke-width="1"  shape-rendering="crispEdges"/>
<line x1="1104.00" y1="340.50" x2="1113.00" y2="340.50" stroke="#262626" stroke-width="1"  shape-rendering="crispEdges"/>
<text x="1116.70" y="348.60" text-anchor="start" class="n">10<tspan dy="-6.5" dx="0.6" style="font-size:12px"><tspan textLength="7.4" lengthAdjust="spacingAndGlyphs">-</tspan>11</tspan></text>
<line x1="1104.00" y1="343.50" x2="1109.00" y2="343.50" stroke="#262626" stroke-width="1"  shape-rendering="crispEdges"/>
<line x1="1104.00" y1="346.50" x2="1109.00" y2="346.50" stroke="#262626" stroke-width="1"  shape-rendering="crispEdges"/>
<line x1="1104.00" y1="349.50" x2="1109.00" y2="349.50" stroke="#262626" stroke-width="1"  shape-rendering="crispEdges"/>
<line x1="1104.00" y1="353.50" x2="1109.00" y2="353.50" stroke="#262626" stroke-width="1"  shape-rendering="crispEdges"/>
<line x1="1104.00" y1="358.50" x2="1109.00" y2="358.50" stroke="#262626" stroke-width="1"  shape-rendering="crispEdges"/>
<line x1="1104.00" y1="363.50" x2="1109.00" y2="363.50" stroke="#262626" stroke-width="1"  shape-rendering="crispEdges"/>
<line x1="1104.00" y1="370.50" x2="1109.00" y2="370.50" stroke="#262626" stroke-width="1"  shape-rendering="crispEdges"/>
<line x1="1104.00" y1="381.50" x2="1109.00" y2="381.50" stroke="#262626" stroke-width="1"  shape-rendering="crispEdges"/>
<line x1="1104.00" y1="398.50" x2="1113.00" y2="398.50" stroke="#262626" stroke-width="1"  shape-rendering="crispEdges"/>
<text x="1116.70" y="406.30" text-anchor="start" class="n">10<tspan dy="-6.5" dx="0.6" style="font-size:12px"><tspan textLength="7.4" lengthAdjust="spacingAndGlyphs">-</tspan>12</tspan></text>
<line x1="1104.00" y1="401.50" x2="1109.00" y2="401.50" stroke="#262626" stroke-width="1"  shape-rendering="crispEdges"/>
<line x1="1104.00" y1="403.50" x2="1109.00" y2="403.50" stroke="#262626" stroke-width="1"  shape-rendering="crispEdges"/>
<line x1="1104.00" y1="407.50" x2="1109.00" y2="407.50" stroke="#262626" stroke-width="1"  shape-rendering="crispEdges"/>
<line x1="1104.00" y1="411.50" x2="1109.00" y2="411.50" stroke="#262626" stroke-width="1"  shape-rendering="crispEdges"/>
<line x1="1104.00" y1="415.50" x2="1109.00" y2="415.50" stroke="#262626" stroke-width="1"  shape-rendering="crispEdges"/>
<text transform="translate(1165,319.6) rotate(90)" text-anchor="middle" class="w" style="letter-spacing:0.55px">pressure dyne/cm^2</text>
<rect x="584.00" y="398.00" width="497.00" height="5.00" fill="#1420ea" />
<rect x="589.00" y="398.60" width="1.00" height="3.60" fill="#2444ff" />
<rect x="593.00" y="398.60" width="1.00" height="3.60" fill="#2444ff" />
<rect x="596.00" y="398.60" width="1.00" height="3.60" fill="#2444ff" />
<rect x="604.00" y="398.60" width="1.00" height="3.60" fill="#2444ff" />
<rect x="606.00" y="398.60" width="2.00" height="3.60" fill="#2444ff" />
<rect x="608.00" y="398.60" width="3.00" height="3.60" fill="#2444ff" />
<rect x="614.00" y="398.60" width="2.00" height="3.60" fill="#2444ff" />
<rect x="616.00" y="398.60" width="3.00" height="3.60" fill="#2444ff" />
<rect x="624.00" y="398.60" width="2.00" height="3.60" fill="#2444ff" />
<rect x="628.00" y="398.60" width="2.00" height="3.60" fill="#2444ff" />
<rect x="631.00" y="398.60" width="1.00" height="3.60" fill="#2444ff" />
<rect x="633.00" y="398.60" width="3.00" height="3.60" fill="#2444ff" />
<rect x="637.00" y="398.60" width="2.00" height="3.60" fill="#2444ff" />
<rect x="641.00" y="398.60" width="2.00" height="3.60" fill="#2444ff" />
<rect x="645.00" y="398.60" width="2.00" height="3.60" fill="#2444ff" />
<rect x="661.00" y="398.60" width="1.00" height="3.60" fill="#2444ff" />
<rect x="676.00" y="398.60" width="1.00" height="3.60" fill="#2444ff" />
<rect x="685.00" y="398.60" width="1.00" height="3.60" fill="#2444ff" />
<rect x="688.00" y="398.60" width="3.00" height="3.60" fill="#2444ff" />
<rect x="699.00" y="398.60" width="1.00" height="3.60" fill="#2444ff" />
<rect x="701.00" y="398.60" width="1.00" height="3.60" fill="#2444ff" />
<rect x="703.00" y="398.60" width="1.00" height="3.60" fill="#2444ff" />
<rect x="705.00" y="398.60" width="2.00" height="3.60" fill="#2444ff" />
<rect x="716.00" y="398.60" width="2.00" height="3.60" fill="#2444ff" />
<rect x="720.00" y="398.60" width="1.00" height="3.60" fill="#2444ff" />
<rect x="722.00" y="398.60" width="2.00" height="3.60" fill="#2444ff" />
<rect x="725.00" y="398.60" width="3.00" height="3.60" fill="#2444ff" />
<rect x="728.00" y="398.60" width="3.00" height="3.60" fill="#2444ff" />
<rect x="738.00" y="398.60" width="2.00" height="3.60" fill="#2444ff" />
<rect x="742.00" y="398.60" width="2.00" height="3.60" fill="#2444ff" />
<rect x="745.00" y="398.60" width="1.00" height="3.60" fill="#2444ff" />
<rect x="747.00" y="398.60" width="2.00" height="3.60" fill="#2444ff" />
<rect x="750.00" y="398.60" width="3.00" height="3.60" fill="#2444ff" />
<rect x="755.00" y="398.60" width="3.00" height="3.60" fill="#2444ff" />
<rect x="772.00" y="398.60" width="2.00" height="3.60" fill="#2444ff" />
<rect x="778.00" y="398.60" width="2.00" height="3.60" fill="#2444ff" />
<rect x="780.00" y="398.60" width="1.00" height="3.60" fill="#2444ff" />
<rect x="782.00" y="398.60" width="1.00" height="3.60" fill="#2444ff" />
<rect x="794.00" y="398.60" width="2.00" height="3.60" fill="#2444ff" />
<rect x="798.00" y="398.60" width="2.00" height="3.60" fill="#2444ff" />
<rect x="800.00" y="398.60" width="1.00" height="3.60" fill="#2444ff" />
<rect x="802.00" y="398.60" width="1.00" height="3.60" fill="#2444ff" />
<rect x="808.00" y="398.60" width="2.00" height="3.60" fill="#2444ff" />
<rect x="811.00" y="398.60" width="1.00" height="3.60" fill="#2444ff" />
<rect x="819.00" y="398.60" width="1.00" height="3.60" fill="#2444ff" />
<rect x="833.00" y="398.60" width="3.00" height="3.60" fill="#2444ff" />
<rect x="844.00" y="398.60" width="1.00" height="3.60" fill="#2444ff" />
<rect x="845.00" y="398.60" width="3.00" height="3.60" fill="#2444ff" />
<rect x="851.00" y="398.60" width="1.00" height="3.60" fill="#2444ff" />
<rect x="853.00" y="398.60" width="1.00" height="3.60" fill="#2444ff" />
<rect x="855.00" y="398.60" width="2.00" height="3.60" fill="#2444ff" />
<rect x="867.00" y="398.60" width="2.00" height="3.60" fill="#2444ff" />
<rect x="869.00" y="398.60" width="2.00" height="3.60" fill="#2444ff" />
<rect x="871.00" y="398.60" width="1.00" height="3.60" fill="#2444ff" />
<rect x="876.00" y="398.60" width="2.00" height="3.60" fill="#2444ff" />
<rect x="879.00" y="398.60" width="2.00" height="3.60" fill="#2444ff" />
<rect x="884.00" y="398.60" width="1.00" height="3.60" fill="#2444ff" />
<rect x="887.00" y="398.60" width="3.00" height="3.60" fill="#2444ff" />
<rect x="892.00" y="398.60" width="1.00" height="3.60" fill="#2444ff" />
<rect x="893.00" y="398.60" width="2.00" height="3.60" fill="#2444ff" />
<rect x="908.00" y="398.60" width="1.00" height="3.60" fill="#2444ff" />
<rect x="909.00" y="398.60" width="1.00" height="3.60" fill="#2444ff" />
<rect x="914.00" y="398.60" width="2.00" height="3.60" fill="#2444ff" />
<rect x="918.00" y="398.60" width="2.00" height="3.60" fill="#2444ff" />
<rect x="920.00" y="398.60" width="1.00" height="3.60" fill="#2444ff" />
<rect x="923.00" y="398.60" width="2.00" height="3.60" fill="#2444ff" />
<rect x="926.00" y="398.60" width="1.00" height="3.60" fill="#2444ff" />
<rect x="927.00" y="398.60" width="2.00" height="3.60" fill="#2444ff" />
<rect x="936.00" y="398.60" width="1.00" height="3.60" fill="#2444ff" />
<rect x="947.00" y="398.60" width="2.00" height="3.60" fill="#2444ff" />
<rect x="949.00" y="398.60" width="2.00" height="3.60" fill="#2444ff" />
<rect x="955.00" y="398.60" width="3.00" height="3.60" fill="#2444ff" />
<rect x="967.00" y="398.60" width="3.00" height="3.60" fill="#2444ff" />
<rect x="971.00" y="398.60" width="1.00" height="3.60" fill="#2444ff" />
<rect x="975.00" y="398.60" width="1.00" height="3.60" fill="#2444ff" />
<rect x="977.00" y="398.60" width="2.00" height="3.60" fill="#2444ff" />
<rect x="982.00" y="398.60" width="3.00" height="3.60" fill="#2444ff" />
<rect x="986.00" y="398.60" width="1.00" height="3.60" fill="#2444ff" />
<rect x="988.00" y="398.60" width="2.00" height="3.60" fill="#2444ff" />
<rect x="994.00" y="398.60" width="1.00" height="3.60" fill="#2444ff" />
<rect x="996.00" y="398.60" width="1.00" height="3.60" fill="#2444ff" />
<rect x="997.00" y="398.60" width="2.00" height="3.60" fill="#2444ff" />
<rect x="1005.00" y="398.60" width="1.00" height="3.60" fill="#2444ff" />
<rect x="1006.00" y="398.60" width="1.00" height="3.60" fill="#2444ff" />
<rect x="1007.00" y="398.60" width="2.00" height="3.60" fill="#2444ff" />
<rect x="1010.00" y="398.60" width="1.00" height="3.60" fill="#2444ff" />
<rect x="1012.00" y="398.60" width="3.00" height="3.60" fill="#2444ff" />
<rect x="1016.00" y="398.60" width="2.00" height="3.60" fill="#2444ff" />
<rect x="1022.00" y="398.60" width="3.00" height="3.60" fill="#2444ff" />
<rect x="1029.00" y="398.60" width="1.00" height="3.60" fill="#2444ff" />
<rect x="1042.00" y="398.60" width="2.00" height="3.60" fill="#2444ff" />
<rect x="1047.00" y="398.60" width="3.00" height="3.60" fill="#2444ff" />
<rect x="1075.00" y="398.60" width="2.00" height="3.60" fill="#2444ff" />
<rect x="95.5" y="420.5" width="985" height="89" fill="#fff" stroke="#262626" stroke-width="1" shape-rendering="crispEdges"/>
<line x1="136.50" y1="506.00" x2="136.50" y2="510.00" stroke="#262626" stroke-width="1"  shape-rendering="crispEdges"/>
<line x1="177.50" y1="506.00" x2="177.50" y2="510.00" stroke="#262626" stroke-width="1"  shape-rendering="crispEdges"/>
<line x1="218.50" y1="506.00" x2="218.50" y2="510.00" stroke="#262626" stroke-width="1"  shape-rendering="crispEdges"/>
<line x1="259.50" y1="506.00" x2="259.50" y2="510.00" stroke="#262626" stroke-width="1"  shape-rendering="crispEdges"/>
<line x1="300.50" y1="506.00" x2="300.50" y2="510.00" stroke="#262626" stroke-width="1"  shape-rendering="crispEdges"/>
<line x1="341.50" y1="506.00" x2="341.50" y2="510.00" stroke="#262626" stroke-width="1"  shape-rendering="crispEdges"/>
<line x1="382.50" y1="506.00" x2="382.50" y2="510.00" stroke="#262626" stroke-width="1"  shape-rendering="crispEdges"/>
<line x1="423.50" y1="506.00" x2="423.50" y2="510.00" stroke="#262626" stroke-width="1"  shape-rendering="crispEdges"/>
<line x1="464.50" y1="506.00" x2="464.50" y2="510.00" stroke="#262626" stroke-width="1"  shape-rendering="crispEdges"/>
<line x1="505.50" y1="506.00" x2="505.50" y2="510.00" stroke="#262626" stroke-width="1"  shape-rendering="crispEdges"/>
<line x1="546.50" y1="506.00" x2="546.50" y2="510.00" stroke="#262626" stroke-width="1"  shape-rendering="crispEdges"/>
<line x1="587.50" y1="506.00" x2="587.50" y2="510.00" stroke="#262626" stroke-width="1"  shape-rendering="crispEdges"/>
<line x1="628.50" y1="506.00" x2="628.50" y2="510.00" stroke="#262626" stroke-width="1"  shape-rendering="crispEdges"/>
<line x1="669.50" y1="506.00" x2="669.50" y2="510.00" stroke="#262626" stroke-width="1"  shape-rendering="crispEdges"/>
<line x1="710.50" y1="506.00" x2="710.50" y2="510.00" stroke="#262626" stroke-width="1"  shape-rendering="crispEdges"/>
<line x1="751.50" y1="506.00" x2="751.50" y2="510.00" stroke="#262626" stroke-width="1"  shape-rendering="crispEdges"/>
<line x1="792.50" y1="506.00" x2="792.50" y2="510.00" stroke="#262626" stroke-width="1"  shape-rendering="crispEdges"/>
<line x1="833.50" y1="506.00" x2="833.50" y2="510.00" stroke="#262626" stroke-width="1"  shape-rendering="crispEdges"/>
<line x1="874.50" y1="506.00" x2="874.50" y2="510.00" stroke="#262626" stroke-width="1"  shape-rendering="crispEdges"/>
<line x1="915.50" y1="506.00" x2="915.50" y2="510.00" stroke="#262626" stroke-width="1"  shape-rendering="crispEdges"/>
<line x1="956.50" y1="506.00" x2="956.50" y2="510.00" stroke="#262626" stroke-width="1"  shape-rendering="crispEdges"/>
<line x1="997.50" y1="506.00" x2="997.50" y2="510.00" stroke="#262626" stroke-width="1"  shape-rendering="crispEdges"/>
<line x1="1038.50" y1="506.00" x2="1038.50" y2="510.00" stroke="#262626" stroke-width="1"  shape-rendering="crispEdges"/>
<line x1="91.00" y1="509.50" x2="95.00" y2="509.50" stroke="#262626" stroke-width="1"  shape-rendering="crispEdges"/>
<line x1="91.00" y1="507.50" x2="95.00" y2="507.50" stroke="#262626" stroke-width="1"  shape-rendering="crispEdges"/>
<line x1="91.00" y1="505.50" x2="95.00" y2="505.50" stroke="#262626" stroke-width="1"  shape-rendering="crispEdges"/>
<line x1="91.00" y1="504.50" x2="95.00" y2="504.50" stroke="#262626" stroke-width="1"  shape-rendering="crispEdges"/>
<line x1="91.00" y1="503.50" x2="95.00" y2="503.50" stroke="#262626" stroke-width="1"  shape-rendering="crispEdges"/>
<line x1="87.00" y1="502.50" x2="95.00" y2="502.50" stroke="#262626" stroke-width="1"  shape-rendering="crispEdges"/>
<line x1="91.00" y1="495.50" x2="95.00" y2="495.50" stroke="#262626" stroke-width="1"  shape-rendering="crispEdges"/>
<line x1="91.00" y1="491.50" x2="95.00" y2="491.50" stroke="#262626" stroke-width="1"  shape-rendering="crispEdges"/>
<line x1="91.00" y1="489.50" x2="95.00" y2="489.50" stroke="#262626" stroke-width="1"  shape-rendering="crispEdges"/>
<line x1="91.00" y1="487.50" x2="95.00" y2="487.50" stroke="#262626" stroke-width="1"  shape-rendering="crispEdges"/>
<line x1="91.00" y1="485.50" x2="95.00" y2="485.50" stroke="#262626" stroke-width="1"  shape-rendering="crispEdges"/>
<line x1="91.00" y1="483.50" x2="95.00" y2="483.50" stroke="#262626" stroke-width="1"  shape-rendering="crispEdges"/>
<line x1="91.00" y1="482.50" x2="95.00" y2="482.50" stroke="#262626" stroke-width="1"  shape-rendering="crispEdges"/>
<line x1="91.00" y1="481.50" x2="95.00" y2="481.50" stroke="#262626" stroke-width="1"  shape-rendering="crispEdges"/>
<line x1="87.00" y1="480.50" x2="95.00" y2="480.50" stroke="#262626" stroke-width="1"  shape-rendering="crispEdges"/>
<line x1="91.00" y1="473.50" x2="95.00" y2="473.50" stroke="#262626" stroke-width="1"  shape-rendering="crispEdges"/>
<line x1="91.00" y1="469.50" x2="95.00" y2="469.50" stroke="#262626" stroke-width="1"  shape-rendering="crispEdges"/>
<line x1="91.00" y1="467.50" x2="95.00" y2="467.50" stroke="#262626" stroke-width="1"  shape-rendering="crispEdges"/>
<line x1="91.00" y1="465.50" x2="95.00" y2="465.50" stroke="#262626" stroke-width="1"  shape-rendering="crispEdges"/>
<line x1="91.00" y1="463.50" x2="95.00" y2="463.50" stroke="#262626" stroke-width="1"  shape-rendering="crispEdges"/>
<line x1="91.00" y1="461.50" x2="95.00" y2="461.50" stroke="#262626" stroke-width="1"  shape-rendering="crispEdges"/>
<line x1="91.00" y1="460.50" x2="95.00" y2="460.50" stroke="#262626" stroke-width="1"  shape-rendering="crispEdges"/>
<line x1="91.00" y1="459.50" x2="95.00" y2="459.50" stroke="#262626" stroke-width="1"  shape-rendering="crispEdges"/>
<line x1="87.00" y1="458.50" x2="95.00" y2="458.50" stroke="#262626" stroke-width="1"  shape-rendering="crispEdges"/>
<line x1="91.00" y1="451.50" x2="95.00" y2="451.50" stroke="#262626" stroke-width="1"  shape-rendering="crispEdges"/>
<line x1="91.00" y1="447.50" x2="95.00" y2="447.50" stroke="#262626" stroke-width="1"  shape-rendering="crispEdges"/>
<line x1="91.00" y1="445.50" x2="95.00" y2="445.50" stroke="#262626" stroke-width="1"  shape-rendering="crispEdges"/>
<line x1="91.00" y1="443.50" x2="95.00" y2="443.50" stroke="#262626" stroke-width="1"  shape-rendering="crispEdges"/>
<line x1="91.00" y1="441.50" x2="95.00" y2="441.50" stroke="#262626" stroke-width="1"  shape-rendering="crispEdges"/>
<line x1="91.00" y1="439.50" x2="95.00" y2="439.50" stroke="#262626" stroke-width="1"  shape-rendering="crispEdges"/>
<line x1="91.00" y1="438.50" x2="95.00" y2="438.50" stroke="#262626" stroke-width="1"  shape-rendering="crispEdges"/>
<line x1="91.00" y1="437.50" x2="95.00" y2="437.50" stroke="#262626" stroke-width="1"  shape-rendering="crispEdges"/>
<line x1="87.00" y1="436.50" x2="95.00" y2="436.50" stroke="#262626" stroke-width="1"  shape-rendering="crispEdges"/>
<line x1="91.00" y1="429.50" x2="95.00" y2="429.50" stroke="#262626" stroke-width="1"  shape-rendering="crispEdges"/>
<line x1="91.00" y1="425.50" x2="95.00" y2="425.50" stroke="#262626" stroke-width="1"  shape-rendering="crispEdges"/>
<line x1="91.00" y1="423.50" x2="95.00" y2="423.50" stroke="#262626" stroke-width="1"  shape-rendering="crispEdges"/>
<line x1="91.00" y1="421.50" x2="95.00" y2="421.50" stroke="#262626" stroke-width="1"  shape-rendering="crispEdges"/>
<text x="82.80" y="444.40" text-anchor="end" class="n">10<tspan dy="-6.5" dx="0.6" style="font-size:12px"><tspan textLength="7.4" lengthAdjust="spacingAndGlyphs">-</tspan>9</tspan></text>
<text x="82.80" y="466.40" text-anchor="end" class="n">10<tspan dy="-6.5" dx="0.6" style="font-size:12px"><tspan textLength="7.4" lengthAdjust="spacingAndGlyphs">-</tspan>10</tspan></text>
<text x="82.80" y="488.50" text-anchor="end" class="n">10<tspan dy="-6.5" dx="0.6" style="font-size:12px"><tspan textLength="7.4" lengthAdjust="spacingAndGlyphs">-</tspan>11</tspan></text>
<text x="82.80" y="510.40" text-anchor="end" class="n">10<tspan dy="-6.5" dx="0.6" style="font-size:12px"><tspan textLength="7.4" lengthAdjust="spacingAndGlyphs">-</tspan>12</tspan></text>
<text transform="translate(33.5,466) rotate(-90)" text-anchor="middle" class="w" style="letter-spacing:0.35px">P dyn/cm^2</text>
<clipPath id="c3"><rect x="96" y="421" width="984" height="88.0"/></clipPath><g clip-path="url(#c3)">
<polyline points="101.46,503.54 107.71,480.62 110.83,509.17" fill="none" stroke="#0000ff" stroke-width="1.25" stroke-linejoin="miter"/>
<polyline points="118.54,496.25 121.67,478.12 125.42,486.88 125.42,509.17" fill="none" stroke="#0000ff" stroke-width="1.25" stroke-linejoin="miter"/>
<polyline points="135.42,505.00 135.42,509.17" fill="none" stroke="#0000ff" stroke-width="1.25" stroke-linejoin="miter"/>
<polyline points="145.83,509.17 148.54,498.33 148.54,509.17" fill="none" stroke="#0000ff" stroke-width="1.25" stroke-linejoin="miter"/>
<polyline points="155.62,496.25 155.62,509.17" fill="none" stroke="#0000ff" stroke-width="1.25" stroke-linejoin="miter"/>
<polyline points="172.50,509.17 172.50,502.50 176.46,489.38 176.46,509.17" fill="none" stroke="#0000ff" stroke-width="1.25" stroke-linejoin="miter"/>
<polyline points="183.33,509.17 183.33,502.08 186.88,509.17" fill="none" stroke="#0000ff" stroke-width="1.25" stroke-linejoin="miter"/>
<polyline points="189.58,509.17 193.12,507.29 193.54,509.17" fill="none" stroke="#0000ff" stroke-width="1.25" stroke-linejoin="miter"/>
<polyline points="200.21,482.08 200.21,478.12 203.54,477.08 207.29,509.17" fill="none" stroke="#0000ff" stroke-width="1.25" stroke-linejoin="miter"/>
<polyline points="213.54,509.17 213.54,505.00 224.38,487.29 224.38,509.17" fill="none" stroke="#0000ff" stroke-width="1.25" stroke-linejoin="miter"/>
<polyline points="230.62,484.17 230.62,494.17 234.38,507.71 237.50,488.33 241.46,483.12 247.71,490.42 254.58,507.71 258.12,505.62 258.33,509.17" fill="none" stroke="#0000ff" stroke-width="1.25" stroke-linejoin="miter"/>
<polyline points="265.62,509.17 265.62,502.50 271.25,489.38 275.62,476.04 278.75,491.46 282.29,491.46 285.42,509.17" fill="none" stroke="#0000ff" stroke-width="1.25" stroke-linejoin="miter"/>
<polyline points="295.83,509.17 299.38,485.21 302.50,491.46 306.67,506.67 309.17,498.33 312.50,477.08 316.46,491.46 319.58,480.21 323.33,495.21 323.33,509.17" fill="none" stroke="#0000ff" stroke-width="1.25" stroke-linejoin="miter"/>
<polyline points="330.62,509.17 330.62,486.25 336.88,500.42 340.00,495.21 345.21,500.42" fill="none" stroke="#0000ff" stroke-width="1.25" stroke-linejoin="miter"/>
<polyline points="335.00,495.21 337.08,500.42 340.83,488.96 350.00,490.42 353.75,500.42 357.50,506.67 361.04,491.46 364.58,479.17 367.71,492.50 371.67,476.04 374.58,500.42 377.71,486.46 381.46,506.67 385.00,487.29 388.75,500.42 391.25,486.46 398.54,493.54 402.08,509.17" fill="none" stroke="#0000ff" stroke-width="1.25" stroke-linejoin="miter"/>
<polyline points="403.33,509.17 405.42,499.38 405.42,509.17" fill="none" stroke="#0000ff" stroke-width="1.25" stroke-linejoin="miter"/>
<polyline points="412.50,509.17 415.62,483.12 415.62,509.17" fill="none" stroke="#0000ff" stroke-width="1.25" stroke-linejoin="miter"/>
<polyline points="422.50,509.17 422.50,503.54 425.62,492.50 425.62,509.17" fill="none" stroke="#0000ff" stroke-width="1.25" stroke-linejoin="miter"/>
<polyline points="432.08,509.17 432.50,481.25 432.71,509.17" fill="none" stroke="#0000ff" stroke-width="1.25" stroke-linejoin="miter"/>
<polyline points="439.17,509.17 439.17,495.21 442.50,499.38 442.50,509.17" fill="none" stroke="#0000ff" stroke-width="1.25" stroke-linejoin="miter"/>
<polyline points="456.46,509.17 456.46,499.38 459.58,496.25 463.33,487.29 463.33,509.17" fill="none" stroke="#0000ff" stroke-width="1.25" stroke-linejoin="miter"/>
<polyline points="483.33,509.17 483.33,492.50 585.00,483.33" fill="none" stroke="#0000ff" stroke-width="1.25" stroke-linejoin="miter"/>
<polyline points="580.00,484.17 585.83,483.12 589.38,489.38 593.54,478.12 596.67,509.17" fill="none" stroke="#0000ff" stroke-width="1.25" stroke-linejoin="miter"/>
<polyline points="597.71,509.17 599.38,481.25 599.79,509.17" fill="none" stroke="#0000ff" stroke-width="1.25" stroke-linejoin="miter"/>
<polyline points="606.46,480.21 606.46,509.17" fill="none" stroke="#0000ff" stroke-width="1.25" stroke-linejoin="miter"/>
<polyline points="630.00,509.17 634.58,481.25 637.29,490.42 640.42,492.50 644.58,482.29 647.71,485.21 651.25,499.38 664.38,486.46 664.38,509.17" fill="none" stroke="#0000ff" stroke-width="1.25" stroke-linejoin="miter"/>
<polyline points="678.33,484.17 678.33,498.33 680.42,509.17 682.08,509.17 688.33,473.96 693.12,509.17 695.21,482.29 702.29,499.38 702.29,509.17" fill="none" stroke="#0000ff" stroke-width="1.25" stroke-linejoin="miter"/>
<polyline points="709.58,509.17 709.58,497.29 712.29,491.46 712.29,509.17" fill="none" stroke="#0000ff" stroke-width="1.25" stroke-linejoin="miter"/>
<polyline points="719.17,509.17 719.17,501.46 726.46,472.92 730.00,494.17 735.83,486.46 740.42,499.38 743.54,487.29 746.67,497.29 750.42,485.21 755.00,498.33 757.71,509.17" fill="none" stroke="#0000ff" stroke-width="1.25" stroke-linejoin="miter"/>
<polyline points="763.33,488.96 763.33,509.17" fill="none" stroke="#0000ff" stroke-width="1.25" stroke-linejoin="miter"/>
<polyline points="770.21,509.17 770.21,499.38 774.79,503.54 777.29,502.50 777.29,509.17" fill="none" stroke="#0000ff" stroke-width="1.25" stroke-linejoin="miter"/>
<polyline points="794.17,509.17 794.17,485.21 798.33,486.46 801.25,478.12 804.58,509.17" fill="none" stroke="#0000ff" stroke-width="1.25" stroke-linejoin="miter"/>
<polyline points="811.46,499.38 811.46,509.17" fill="none" stroke="#0000ff" stroke-width="1.25" stroke-linejoin="miter"/>
<polyline points="822.29,509.17 822.29,495.21 825.42,491.46 828.96,476.04 830.00,481.67" fill="none" stroke="#0000ff" stroke-width="1.25" stroke-linejoin="miter"/>
<polyline points="830.00,481.67 835.00,488.96 839.17,482.29 842.71,486.46 845.42,492.50 849.38,481.25 852.08,499.38 855.42,509.17" fill="none" stroke="#0000ff" stroke-width="1.25" stroke-linejoin="miter"/>
<polyline points="864.17,509.17 865.21,494.17 866.67,509.17" fill="none" stroke="#0000ff" stroke-width="1.25" stroke-linejoin="miter"/>
<polyline points="873.54,497.29 873.54,509.17" fill="none" stroke="#0000ff" stroke-width="1.25" stroke-linejoin="miter"/>
<polyline points="875.62,494.17 883.33,500.42 886.46,477.08 890.21,493.12 893.33,479.17 893.33,509.17" fill="none" stroke="#0000ff" stroke-width="1.25" stroke-linejoin="miter"/>
<polyline points="907.29,499.38 907.29,509.17" fill="none" stroke="#0000ff" stroke-width="1.25" stroke-linejoin="miter"/>
<polyline points="917.50,503.12 917.50,509.17" fill="none" stroke="#0000ff" stroke-width="1.25" stroke-linejoin="miter"/>
<polyline points="924.17,501.04 924.17,509.17" fill="none" stroke="#0000ff" stroke-width="1.25" stroke-linejoin="miter"/>
<polyline points="931.46,502.08 931.46,509.17" fill="none" stroke="#0000ff" stroke-width="1.25" stroke-linejoin="miter"/>
<polyline points="938.33,509.17 938.33,497.29 945.42,509.17" fill="none" stroke="#0000ff" stroke-width="1.25" stroke-linejoin="miter"/>
<polyline points="958.54,488.96 958.54,509.17" fill="none" stroke="#0000ff" stroke-width="1.25" stroke-linejoin="miter"/>
<polyline points="247.29,503.12 247.29,509.17" fill="none" stroke="#ff0000" stroke-width="1.25" stroke-linejoin="miter"/>
<polyline points="475.21,507.92 475.21,509.17" fill="none" stroke="#ff0000" stroke-width="1.25" stroke-linejoin="miter"/>
<polyline points="584.60,509.00 584.60,497.50 586.00,495.60 587.50,494.76 589.30,498.72 591.90,494.73 594.50,497.96 596.30,497.94 598.90,498.14 600.70,494.67 603.30,494.59 604.80,494.41 606.30,498.44 608.50,498.05 611.10,497.63 613.70,494.15 615.20,495.71 617.00,498.83 619.60,497.68 622.20,497.92 624.80,494.10 626.30,498.88 628.10,498.83 629.60,494.67 631.80,497.06 634.40,496.99 635.90,498.68 637.40,497.70 640.00,495.91 641.50,498.31 643.70,497.86 645.20,496.82 646.70,494.01 649.30,498.08 651.10,493.94 653.30,497.56 655.10,497.59 657.70,494.70 659.90,498.13 661.70,497.72 663.90,497.95 665.40,498.87 667.60,495.21 669.40,494.67 671.60,497.54 673.80,498.35 675.30,493.99 676.80,497.33 679.40,498.04 681.60,495.24 683.80,498.57 686.00,498.45 687.50,493.96 689.30,497.85 691.50,495.31 694.10,495.79 696.30,498.22 698.10,498.50 699.90,495.29 701.70,497.37 703.20,494.89 705.00,498.49 706.80,497.51 708.30,498.04 710.90,497.89 713.10,497.53 715.70,497.68 718.30,494.07 720.10,495.99 722.70,495.93 725.30,497.94 727.10,494.20 729.30,494.30 730.80,494.10 732.60,498.01 734.10,498.37 735.90,497.30 737.40,496.91 738.90,497.06 741.50,495.26 743.30,494.88 744.80,495.50 747.00,494.27 748.50,498.12 751.10,494.41 752.90,498.10 755.50,495.01 757.00,494.37 758.50,495.90 761.10,494.21 762.60,497.46 764.80,495.26 767.40,497.56 769.20,497.70 771.00,494.50 773.60,494.81 775.10,497.77 777.70,494.69 780.30,495.22 782.90,497.68 785.50,496.84 787.30,498.26 788.80,497.27 790.60,494.03 792.80,497.06 794.30,498.20 796.50,494.30 798.00,497.10 800.60,494.89 802.10,497.18 803.60,498.57 805.10,494.23 807.70,498.02 809.20,493.91 811.00,494.84 812.50,494.84 814.30,495.49 816.10,495.05 818.70,497.57 821.30,497.97 822.80,497.85 825.40,495.13 828.00,494.65 829.80,495.80 832.40,498.03 834.20,495.44 836.00,494.77 838.20,494.21 840.40,498.05 842.60,495.35 844.80,498.49 846.60,494.80 848.40,497.81 850.20,498.88 852.80,495.02 854.30,498.88 855.80,498.44 857.30,498.71 859.10,493.99 861.30,494.13 863.50,495.61 865.00,497.16 866.50,497.18 868.00,495.75 870.20,496.88 872.80,496.81 875.00,497.72 877.60,495.56 880.20,497.06 882.40,494.14 883.90,497.04 886.10,494.89 888.30,498.39 890.50,497.03 892.70,494.60 894.90,494.49 896.70,495.62 899.30,495.77 901.10,498.15 903.70,498.16 906.30,497.46 908.10,495.77 909.90,497.55 912.10,497.61 913.90,494.99 916.10,494.54 918.30,498.78 920.90,495.26 922.40,495.43 923.90,494.81 925.40,494.53 928.00,498.51 929.80,494.20 931.60,494.81 933.40,497.58 935.60,494.23 938.20,498.79 940.80,497.96 943.00,498.85 945.20,496.86 947.00,495.77 948.80,497.16 951.40,495.59 953.20,494.29 955.80,494.81 957.60,495.02 959.10,495.95 960.90,494.95 962.40,497.48 964.60,495.83 966.10,494.45 968.30,494.04 970.10,498.27 971.90,497.46 973.40,496.96 975.20,495.18 977.80,494.87 980.40,494.64 982.60,495.02 985.20,497.18 986.70,497.57 988.90,497.91 991.50,493.96 993.30,498.44 995.10,497.92 996.90,495.95 999.50,494.66 1001.30,495.62 1003.90,498.09 1005.40,498.64 1008.00,495.42 1009.50,496.05 1012.10,497.76 1013.90,496.70 1016.50,496.55 1018.00,499.62 1019.50,498.28 1022.10,498.73 1024.30,495.19 1026.50,497.90 1029.10,495.66 1030.60,496.84 1032.10,496.54 1033.60,497.81 1035.80,495.01 1038.40,499.39 1040.60,496.10 1043.20,494.91 1045.00,497.94 1047.60,498.83 1050.20,495.14 1052.80,499.64 1055.00,498.62 1057.60,498.42 1059.40,499.69 1060.90,497.34 1062.40,498.69 1063.90,499.00 1065.40,496.76 1067.60,498.50 1069.40,500.15 1070.90,499.69 1072.40,498.67 1074.20,496.25 1076.00,496.47 1077.50,497.22 1079.30,495.91" fill="none" stroke="#ff0000" stroke-width="1.25"/>
<polyline points="107.71,509.17 107.71,484.79" fill="none" stroke="#00ff00" stroke-width="1.25" stroke-linejoin="miter"/>
<polyline points="114.38,509.17 114.38,473.33 118.54,496.25 118.54,509.17" fill="none" stroke="#00ff00" stroke-width="1.25" stroke-linejoin="miter"/>
<polyline points="162.29,482.08 162.29,509.17" fill="none" stroke="#00ff00" stroke-width="1.25" stroke-linejoin="miter"/>
<polyline points="169.38,476.04 169.38,509.17" fill="none" stroke="#00ff00" stroke-width="1.25" stroke-linejoin="miter"/>
<polyline points="200.21,509.17 200.21,482.08 203.75,486.46 207.29,462.29 207.29,509.17" fill="none" stroke="#00ff00" stroke-width="1.25" stroke-linejoin="miter"/>
<polyline points="230.62,509.17 230.62,494.17" fill="none" stroke="#00ff00" stroke-width="1.25" stroke-linejoin="miter"/>
<polyline points="248.33,509.17 248.33,483.12 251.46,487.29 251.46,509.17" fill="none" stroke="#00ff00" stroke-width="1.25" stroke-linejoin="miter"/>
<polyline points="258.33,476.04 258.33,509.17" fill="none" stroke="#00ff00" stroke-width="1.25" stroke-linejoin="miter"/>
<polyline points="268.54,509.17 268.54,493.12 271.46,489.38 271.46,509.17" fill="none" stroke="#00ff00" stroke-width="1.25" stroke-linejoin="miter"/>
<polyline points="292.50,487.92 292.50,509.17" fill="none" stroke="#00ff00" stroke-width="1.25" stroke-linejoin="miter"/>
<polyline points="340.42,509.17 340.42,476.04 343.33,487.92 350.00,489.38 350.00,509.17" fill="none" stroke="#00ff00" stroke-width="1.25" stroke-linejoin="miter"/>
<polyline points="360.42,479.17 360.42,509.17" fill="none" stroke="#00ff00" stroke-width="1.25" stroke-linejoin="miter"/>
<polyline points="371.67,491.46 371.67,509.17" fill="none" stroke="#00ff00" stroke-width="1.25" stroke-linejoin="miter"/>
<polyline points="377.71,489.38 377.71,509.17" fill="none" stroke="#00ff00" stroke-width="1.25" stroke-linejoin="miter"/>
<polyline points="388.54,484.17 388.54,509.17" fill="none" stroke="#00ff00" stroke-width="1.25" stroke-linejoin="miter"/>
<polyline points="429.79,509.17 429.79,484.17 432.50,482.29 432.50,509.17" fill="none" stroke="#00ff00" stroke-width="1.25" stroke-linejoin="miter"/>
<polyline points="449.38,484.17 449.38,509.17" fill="none" stroke="#00ff00" stroke-width="1.25" stroke-linejoin="miter"/>
<polyline points="480.42,491.46 480.42,509.17" fill="none" stroke="#00ff00" stroke-width="1.25" stroke-linejoin="miter"/>
<polyline points="593.54,495.21 593.54,509.17" fill="none" stroke="#00ff00" stroke-width="1.25" stroke-linejoin="miter"/>
<polyline points="603.33,476.04 603.33,509.17" fill="none" stroke="#00ff00" stroke-width="1.25" stroke-linejoin="miter"/>
<polyline points="613.33,509.17 613.33,479.17 617.50,482.29 617.50,509.17" fill="none" stroke="#00ff00" stroke-width="1.25" stroke-linejoin="miter"/>
<polyline points="647.29,486.46 647.29,509.17" fill="none" stroke="#00ff00" stroke-width="1.25" stroke-linejoin="miter"/>
<polyline points="671.25,466.04 671.25,509.17" fill="none" stroke="#00ff00" stroke-width="1.25" stroke-linejoin="miter"/>
<polyline points="736.46,458.12 736.46,509.17" fill="none" stroke="#00ff00" stroke-width="1.25" stroke-linejoin="miter"/>
<polyline points="746.25,489.38 746.25,509.17" fill="none" stroke="#00ff00" stroke-width="1.25" stroke-linejoin="miter"/>
<polyline points="774.38,509.17 774.38,484.17 776.88,487.92 781.46,489.38 781.46,509.17" fill="none" stroke="#00ff00" stroke-width="1.25" stroke-linejoin="miter"/>
<polyline points="839.17,486.46 839.17,509.17" fill="none" stroke="#00ff00" stroke-width="1.25" stroke-linejoin="miter"/>
<polyline points="849.38,486.46 849.38,509.17" fill="none" stroke="#00ff00" stroke-width="1.25" stroke-linejoin="miter"/>
<polyline points="863.33,509.17 863.33,472.29 866.25,481.25 869.38,473.33 873.54,482.29 876.67,481.25 876.67,509.17" fill="none" stroke="#00ff00" stroke-width="1.25" stroke-linejoin="miter"/>
<polyline points="1074.58,462.29 1074.58,509.17" fill="none" stroke="#00ff00" stroke-width="1.25" stroke-linejoin="miter"/>
</g>
<line x1="1091.00" y1="427.00" x2="1103.50" y2="431.50" stroke="#0000ff" stroke-width="1.4" />
<text x="1107.30" y="433.80" text-anchor="start" class="w" style="letter-spacing:0.62px">CHEMS-P</text>
<line x1="1091.00" y1="444.20" x2="1103.50" y2="448.70" stroke="#ff0000" stroke-width="1.4" />
<text x="1107.30" y="451.00" text-anchor="start" class="w" style="letter-spacing:0.62px">LEMMS-P</text>
<line x1="1091.00" y1="461.40" x2="1103.50" y2="465.90" stroke="#00ff00" stroke-width="1.4" />
<text x="1107.30" y="468.20" text-anchor="start" class="w" style="letter-spacing:0.62px">CHEMS-O</text>
<rect x="95.00" y="513.00" width="986.00" height="179.00" fill="#000" />
<rect x="95.00" y="513.00" width="1.00" height="179.00" fill="#2c2c2c" />
<line x1="91.00" y1="686.50" x2="95.00" y2="686.50" stroke="#262626" stroke-width="1"  shape-rendering="crispEdges"/>
<line x1="91.00" y1="680.50" x2="95.00" y2="680.50" stroke="#262626" stroke-width="1"  shape-rendering="crispEdges"/>
<line x1="91.00" y1="675.50" x2="95.00" y2="675.50" stroke="#262626" stroke-width="1"  shape-rendering="crispEdges"/>
<line x1="91.00" y1="670.50" x2="95.00" y2="670.50" stroke="#262626" stroke-width="1"  shape-rendering="crispEdges"/>
<line x1="91.00" y1="667.50" x2="95.00" y2="667.50" stroke="#262626" stroke-width="1"  shape-rendering="crispEdges"/>
<line x1="91.00" y1="664.50" x2="95.00" y2="664.50" stroke="#262626" stroke-width="1"  shape-rendering="crispEdges"/>
<line x1="91.00" y1="661.50" x2="95.00" y2="661.50" stroke="#262626" stroke-width="1"  shape-rendering="crispEdges"/>
<line x1="87.00" y1="659.50" x2="95.00" y2="659.50" stroke="#262626" stroke-width="1"  shape-rendering="crispEdges"/>
<line x1="91.00" y1="643.50" x2="95.00" y2="643.50" stroke="#262626" stroke-width="1"  shape-rendering="crispEdges"/>
<line x1="91.00" y1="634.50" x2="95.00" y2="634.50" stroke="#262626" stroke-width="1"  shape-rendering="crispEdges"/>
<line x1="91.00" y1="627.50" x2="95.00" y2="627.50" stroke="#262626" stroke-width="1"  shape-rendering="crispEdges"/>
<line x1="91.00" y1="622.50" x2="95.00" y2="622.50" stroke="#262626" stroke-width="1"  shape-rendering="crispEdges"/>
<line x1="91.00" y1="618.50" x2="95.00" y2="618.50" stroke="#262626" stroke-width="1"  shape-rendering="crispEdges"/>
<line x1="91.00" y1="614.50" x2="95.00" y2="614.50" stroke="#262626" stroke-width="1"  shape-rendering="crispEdges"/>
<line x1="91.00" y1="611.50" x2="95.00" y2="611.50" stroke="#262626" stroke-width="1"  shape-rendering="crispEdges"/>
<line x1="91.00" y1="609.50" x2="95.00" y2="609.50" stroke="#262626" stroke-width="1"  shape-rendering="crispEdges"/>
<line x1="87.00" y1="606.50" x2="95.00" y2="606.50" stroke="#262626" stroke-width="1"  shape-rendering="crispEdges"/>
<line x1="91.00" y1="590.50" x2="95.00" y2="590.50" stroke="#262626" stroke-width="1"  shape-rendering="crispEdges"/>
<line x1="91.00" y1="581.50" x2="95.00" y2="581.50" stroke="#262626" stroke-width="1"  shape-rendering="crispEdges"/>
<line x1="91.00" y1="575.50" x2="95.00" y2="575.50" stroke="#262626" stroke-width="1"  shape-rendering="crispEdges"/>
<line x1="91.00" y1="569.50" x2="95.00" y2="569.50" stroke="#262626" stroke-width="1"  shape-rendering="crispEdges"/>
<line x1="91.00" y1="565.50" x2="95.00" y2="565.50" stroke="#262626" stroke-width="1"  shape-rendering="crispEdges"/>
<line x1="91.00" y1="562.50" x2="95.00" y2="562.50" stroke="#262626" stroke-width="1"  shape-rendering="crispEdges"/>
<line x1="91.00" y1="559.50" x2="95.00" y2="559.50" stroke="#262626" stroke-width="1"  shape-rendering="crispEdges"/>
<line x1="91.00" y1="556.50" x2="95.00" y2="556.50" stroke="#262626" stroke-width="1"  shape-rendering="crispEdges"/>
<line x1="87.00" y1="554.50" x2="95.00" y2="554.50" stroke="#262626" stroke-width="1"  shape-rendering="crispEdges"/>
<line x1="91.00" y1="538.50" x2="95.00" y2="538.50" stroke="#262626" stroke-width="1"  shape-rendering="crispEdges"/>
<line x1="91.00" y1="529.50" x2="95.00" y2="529.50" stroke="#262626" stroke-width="1"  shape-rendering="crispEdges"/>
<line x1="91.00" y1="522.50" x2="95.00" y2="522.50" stroke="#262626" stroke-width="1"  shape-rendering="crispEdges"/>
<line x1="91.00" y1="517.50" x2="95.00" y2="517.50" stroke="#262626" stroke-width="1"  shape-rendering="crispEdges"/>
<line x1="91.00" y1="513.50" x2="95.00" y2="513.50" stroke="#262626" stroke-width="1"  shape-rendering="crispEdges"/>
<text x="82.80" y="562.00" text-anchor="end" class="n">10<tspan dy="-6.5" dx="0.6" style="font-size:12px">4</tspan></text>
<text x="82.80" y="614.50" text-anchor="end" class="n">10<tspan dy="-6.5" dx="0.6" style="font-size:12px">3</tspan></text>
<text x="82.80" y="667.20" text-anchor="end" class="n">10<tspan dy="-6.5" dx="0.6" style="font-size:12px">2</tspan></text>
<text x="8.80" y="537.60" text-anchor="start" class="w" style="letter-spacing:0.3px">LEMMS Ions</text>
<text transform="translate(48.8,602.5) rotate(-90)" text-anchor="middle" class="w" style="letter-spacing:0.3px">Energy (keV)</text>
<rect x="1092.00" y="515.00" width="12.50" height="177.00" fill="url(#wg)" />
<line x1="1104.50" y1="515.00" x2="1104.50" y2="692.00" stroke="#262626" stroke-width="1"  shape-rendering="crispEdges"/>
<line x1="1104.00" y1="515.50" x2="1113.00" y2="515.50" stroke="#262626" stroke-width="1"  shape-rendering="crispEdges"/>
<text x="1116.70" y="523.20" text-anchor="start" class="n">10<tspan dy="-6.5" dx="0.6" style="font-size:12px">4</tspan></text>
<line x1="1104.00" y1="534.50" x2="1109.00" y2="534.50" stroke="#262626" stroke-width="1"  shape-rendering="crispEdges"/>
<line x1="1104.00" y1="554.50" x2="1113.00" y2="554.50" stroke="#262626" stroke-width="1"  shape-rendering="crispEdges"/>
<text x="1116.70" y="562.30" text-anchor="start" class="n">10<tspan dy="-6.5" dx="0.6" style="font-size:12px">2</tspan></text>
<line x1="1104.00" y1="573.50" x2="1109.00" y2="573.50" stroke="#262626" stroke-width="1"  shape-rendering="crispEdges"/>
<line x1="1104.00" y1="593.50" x2="1113.00" y2="593.50" stroke="#262626" stroke-width="1"  shape-rendering="crispEdges"/>
<text x="1116.70" y="601.40" text-anchor="start" class="n">10<tspan dy="-6.5" dx="0.6" style="font-size:12px">0</tspan></text>
<line x1="1104.00" y1="613.50" x2="1109.00" y2="613.50" stroke="#262626" stroke-width="1"  shape-rendering="crispEdges"/>
<line x1="1104.00" y1="632.50" x2="1113.00" y2="632.50" stroke="#262626" stroke-width="1"  shape-rendering="crispEdges"/>
<text x="1116.70" y="640.50" text-anchor="start" class="n">10<tspan dy="-6.5" dx="0.6" style="font-size:12px"><tspan textLength="7.4" lengthAdjust="spacingAndGlyphs">-</tspan>2</tspan></text>
<line x1="1104.00" y1="652.50" x2="1109.00" y2="652.50" stroke="#262626" stroke-width="1"  shape-rendering="crispEdges"/>
<line x1="1104.00" y1="671.50" x2="1113.00" y2="671.50" stroke="#262626" stroke-width="1"  shape-rendering="crispEdges"/>
<text x="1116.70" y="679.60" text-anchor="start" class="n">10<tspan dy="-6.5" dx="0.6" style="font-size:12px"><tspan textLength="7.4" lengthAdjust="spacingAndGlyphs">-</tspan>4</tspan></text>
<line x1="1104.00" y1="691.50" x2="1109.00" y2="691.50" stroke="#262626" stroke-width="1"  shape-rendering="crispEdges"/>
<text transform="translate(1157,602.3) rotate(90)" text-anchor="middle" class="w" style="letter-spacing:0.3px">intensity 1/(s cm^2&#160; ster keV)</text>
<g shape-rendering="crispEdges">
<rect x="95.00" y="675.60" width="1.20" height="4.97" fill="#deeb0f" />
<rect x="95.00" y="680.27" width="1.20" height="4.97" fill="#e8dc0a" />
<rect x="95.00" y="684.93" width="1.20" height="4.97" fill="#f3c008" />
<rect x="95.00" y="584.00" width="1.20" height="21.30" fill="#0568e7" />
<rect x="95.00" y="568.00" width="1.20" height="16.30" fill="#0958f7" />
<rect x="95.00" y="555.00" width="1.20" height="13.30" fill="#111ee3" />
<rect x="96.20" y="618.00" width="1.20" height="12.30" fill="#06ac95" />
<rect x="96.20" y="605.00" width="1.20" height="13.30" fill="#0099b6" />
<rect x="96.20" y="530.00" width="1.20" height="25.30" fill="#090cb3" />
<rect x="97.40" y="584.00" width="1.20" height="21.30" fill="#007ad5" />
<rect x="97.40" y="530.00" width="1.20" height="25.30" fill="#090cb2" />
<rect x="98.60" y="584.00" width="1.20" height="21.30" fill="#007fd0" />
<rect x="98.60" y="568.00" width="1.20" height="16.30" fill="#1135f6" />
<rect x="98.60" y="555.00" width="1.20" height="13.30" fill="#103af7" />
<rect x="98.60" y="530.00" width="1.20" height="25.30" fill="#0f15d4" />
<rect x="99.80" y="675.60" width="1.20" height="4.97" fill="#deeb0f" />
<rect x="99.80" y="680.27" width="1.20" height="4.97" fill="#e8dc0a" />
<rect x="99.80" y="684.93" width="1.20" height="4.97" fill="#f3c008" />
<rect x="99.80" y="530.00" width="1.20" height="25.30" fill="#0d11c5" />
<rect x="101.00" y="675.60" width="1.20" height="4.97" fill="#deeb0f" />
<rect x="101.00" y="680.27" width="1.20" height="4.97" fill="#e8dc0a" />
<rect x="101.00" y="684.93" width="1.20" height="4.97" fill="#f3c008" />
<rect x="101.00" y="664.00" width="1.20" height="11.90" fill="#c9e903" />
<rect x="102.20" y="530.00" width="1.20" height="25.30" fill="#1230f6" />
<rect x="103.40" y="568.00" width="1.20" height="16.30" fill="#0f3df7" />
<rect x="103.40" y="555.00" width="1.20" height="13.30" fill="#1136f7" />
<rect x="103.40" y="530.00" width="1.20" height="25.30" fill="#0e13ce" />
<rect x="103.40" y="522.50" width="1.20" height="7.80" fill="#1325f0" />
<rect x="104.60" y="675.60" width="1.20" height="4.97" fill="#96e628" />
<rect x="104.60" y="680.27" width="1.20" height="4.97" fill="#e8dc0a" />
<rect x="104.60" y="684.93" width="1.20" height="4.97" fill="#f3c008" />
<rect x="104.60" y="584.00" width="1.20" height="21.30" fill="#0760ef" />
<rect x="104.60" y="530.00" width="1.20" height="25.30" fill="#03038f" />
<rect x="105.80" y="675.60" width="1.20" height="4.97" fill="#deeb0f" />
<rect x="105.80" y="680.27" width="1.20" height="4.97" fill="#e8dc0a" />
<rect x="105.80" y="684.93" width="1.20" height="4.97" fill="#f3c008" />
<rect x="107.00" y="675.60" width="1.20" height="4.97" fill="#deeb0f" />
<rect x="107.00" y="680.27" width="1.20" height="4.97" fill="#e8dc0a" />
<rect x="107.00" y="684.93" width="1.20" height="4.97" fill="#f3c008" />
<rect x="108.20" y="568.00" width="1.20" height="16.30" fill="#0b50f9" />
<rect x="109.40" y="605.00" width="1.20" height="13.30" fill="#0091be" />
<rect x="109.40" y="530.00" width="1.20" height="25.30" fill="#121ee4" />
<rect x="110.60" y="530.00" width="1.20" height="25.30" fill="#111de1" />
<rect x="111.80" y="675.60" width="1.20" height="4.97" fill="#deeb0f" />
<rect x="111.80" y="680.27" width="1.20" height="4.97" fill="#e8dc0a" />
<rect x="111.80" y="684.93" width="1.20" height="4.97" fill="#f3c008" />
<rect x="111.80" y="568.00" width="1.20" height="16.30" fill="#1135f6" />
<rect x="113.00" y="675.60" width="1.20" height="4.97" fill="#96e628" />
<rect x="113.00" y="680.27" width="1.20" height="4.97" fill="#e8dc0a" />
<rect x="113.00" y="684.93" width="1.20" height="4.97" fill="#f3c008" />
<rect x="113.00" y="664.00" width="1.20" height="11.90" fill="#cce802" />
<rect x="113.00" y="647.00" width="1.20" height="17.30" fill="#a4ec13" />
<rect x="113.00" y="605.00" width="1.20" height="13.30" fill="#02a5a4" />
<rect x="114.20" y="675.60" width="1.20" height="4.97" fill="#deeb0f" />
<rect x="114.20" y="680.27" width="1.20" height="4.97" fill="#e8dc0a" />
<rect x="114.20" y="684.93" width="1.20" height="4.97" fill="#f3c008" />
<rect x="116.60" y="675.60" width="1.20" height="4.97" fill="#deeb0f" />
<rect x="116.60" y="680.27" width="1.20" height="4.97" fill="#e8dc0a" />
<rect x="116.60" y="684.93" width="1.20" height="4.97" fill="#f3c008" />
<rect x="117.80" y="675.60" width="1.20" height="4.97" fill="#96e628" />
<rect x="117.80" y="680.27" width="1.20" height="4.97" fill="#e8dc0a" />
<rect x="117.80" y="684.93" width="1.20" height="4.97" fill="#f3c008" />
<rect x="117.80" y="664.00" width="1.20" height="11.90" fill="#cbe802" />
<rect x="117.80" y="605.00" width="1.20" height="13.30" fill="#008fc0" />
<rect x="119.00" y="530.00" width="1.20" height="25.30" fill="#111de2" />
<rect x="120.20" y="584.00" width="1.20" height="21.30" fill="#085df2" />
<rect x="121.40" y="675.60" width="1.20" height="4.97" fill="#96e628" />
<rect x="121.40" y="680.27" width="1.20" height="4.97" fill="#e8dc0a" />
<rect x="121.40" y="684.93" width="1.20" height="4.97" fill="#f3c008" />
<rect x="122.60" y="675.60" width="1.20" height="4.97" fill="#deeb0f" />
<rect x="122.60" y="680.27" width="1.20" height="4.97" fill="#e8dc0a" />
<rect x="122.60" y="684.93" width="1.20" height="4.97" fill="#f3c008" />
<rect x="122.60" y="584.00" width="1.20" height="21.30" fill="#0175da" />
<rect x="122.60" y="568.00" width="1.20" height="16.30" fill="#0d4af9" />
<rect x="122.60" y="555.00" width="1.20" height="13.30" fill="#1427f3" />
<rect x="123.80" y="675.60" width="1.20" height="4.97" fill="#deeb0f" />
<rect x="123.80" y="680.27" width="1.20" height="4.97" fill="#e8dc0a" />
<rect x="123.80" y="684.93" width="1.20" height="4.97" fill="#f3c008" />
<rect x="125.00" y="675.60" width="1.20" height="4.97" fill="#deeb0f" />
<rect x="125.00" y="680.27" width="1.20" height="4.97" fill="#e8dc0a" />
<rect x="125.00" y="684.93" width="1.20" height="4.97" fill="#f3c008" />
<rect x="127.40" y="675.60" width="1.20" height="4.97" fill="#96e628" />
<rect x="127.40" y="680.27" width="1.20" height="4.97" fill="#e8dc0a" />
<rect x="127.40" y="684.93" width="1.20" height="4.97" fill="#f3c008" />
<rect x="127.40" y="664.00" width="1.20" height="11.90" fill="#cae903" />
<rect x="127.40" y="584.00" width="1.20" height="21.30" fill="#036ee1" />
<rect x="127.40" y="568.00" width="1.20" height="16.30" fill="#0f40f8" />
<rect x="128.60" y="675.60" width="1.20" height="4.97" fill="#deeb0f" />
<rect x="128.60" y="680.27" width="1.20" height="4.97" fill="#e8dc0a" />
<rect x="128.60" y="684.93" width="1.20" height="4.97" fill="#f3c008" />
<rect x="128.60" y="664.00" width="1.20" height="11.90" fill="#dde000" />
<rect x="128.60" y="647.00" width="1.20" height="17.30" fill="#8ae724" />
<rect x="128.60" y="530.00" width="1.20" height="25.30" fill="#0f16d5" />
<rect x="129.80" y="675.60" width="1.20" height="4.97" fill="#deeb0f" />
<rect x="129.80" y="680.27" width="1.20" height="4.97" fill="#e8dc0a" />
<rect x="129.80" y="684.93" width="1.20" height="4.97" fill="#f3c008" />
<rect x="129.80" y="605.00" width="1.20" height="13.30" fill="#0085ca" />
<rect x="132.20" y="675.60" width="1.20" height="4.97" fill="#deeb0f" />
<rect x="132.20" y="680.27" width="1.20" height="4.97" fill="#e8dc0a" />
<rect x="132.20" y="684.93" width="1.20" height="4.97" fill="#f3c008" />
<rect x="132.20" y="618.00" width="1.20" height="12.30" fill="#07ae90" />
<rect x="133.40" y="675.60" width="1.20" height="4.97" fill="#deeb0f" />
<rect x="133.40" y="680.27" width="1.20" height="4.97" fill="#e8dc0a" />
<rect x="133.40" y="684.93" width="1.20" height="4.97" fill="#f3c008" />
<rect x="133.40" y="605.00" width="1.20" height="13.30" fill="#02a3a8" />
<rect x="133.40" y="584.00" width="1.20" height="21.30" fill="#0078d7" />
<rect x="133.40" y="568.00" width="1.20" height="16.30" fill="#1230f6" />
<rect x="134.60" y="675.60" width="1.20" height="4.97" fill="#deeb0f" />
<rect x="134.60" y="680.27" width="1.20" height="4.97" fill="#e8dc0a" />
<rect x="134.60" y="684.93" width="1.20" height="4.97" fill="#f3c008" />
<rect x="134.60" y="530.00" width="1.20" height="25.30" fill="#121fe5" />
<rect x="135.80" y="584.00" width="1.20" height="21.30" fill="#0078d7" />
<rect x="137.00" y="675.60" width="1.20" height="4.97" fill="#deeb0f" />
<rect x="137.00" y="680.27" width="1.20" height="4.97" fill="#e8dc0a" />
<rect x="137.00" y="684.93" width="1.20" height="4.97" fill="#f3c008" />
<rect x="137.00" y="664.00" width="1.20" height="11.90" fill="#cbe802" />
<rect x="137.00" y="605.00" width="1.20" height="13.30" fill="#0087c8" />
<rect x="138.20" y="555.00" width="1.20" height="13.30" fill="#1325f1" />
<rect x="139.40" y="675.60" width="1.20" height="4.97" fill="#deeb0f" />
<rect x="139.40" y="680.27" width="1.20" height="4.97" fill="#e8dc0a" />
<rect x="139.40" y="684.93" width="1.20" height="4.97" fill="#f3c008" />
<rect x="139.40" y="664.00" width="1.20" height="11.90" fill="#d1e602" />
<rect x="140.60" y="675.60" width="1.20" height="4.97" fill="#deeb0f" />
<rect x="140.60" y="680.27" width="1.20" height="4.97" fill="#e8dc0a" />
<rect x="140.60" y="684.93" width="1.20" height="4.97" fill="#f3c008" />
<rect x="140.60" y="568.00" width="1.20" height="16.30" fill="#0a56f9" />
<rect x="140.60" y="555.00" width="1.20" height="13.30" fill="#1429f5" />
<rect x="140.60" y="530.00" width="1.20" height="25.30" fill="#122ff6" />
<rect x="141.80" y="555.00" width="1.20" height="13.30" fill="#1039f7" />
<rect x="141.80" y="530.00" width="1.20" height="25.30" fill="#111ee3" />
<rect x="144.20" y="675.60" width="1.20" height="4.97" fill="#96e628" />
<rect x="144.20" y="680.27" width="1.20" height="4.97" fill="#e8dc0a" />
<rect x="144.20" y="684.93" width="1.20" height="4.97" fill="#f3c008" />
<rect x="144.20" y="664.00" width="1.20" height="11.90" fill="#d1e602" />
<rect x="144.20" y="530.00" width="1.20" height="25.30" fill="#0e13cf" />
<rect x="145.40" y="675.60" width="1.20" height="4.97" fill="#deeb0f" />
<rect x="145.40" y="680.27" width="1.20" height="4.97" fill="#e8dc0a" />
<rect x="145.40" y="684.93" width="1.20" height="4.97" fill="#f3c008" />
<rect x="146.60" y="675.60" width="1.20" height="4.97" fill="#deeb0f" />
<rect x="146.60" y="680.27" width="1.20" height="4.97" fill="#e8dc0a" />
<rect x="146.60" y="684.93" width="1.20" height="4.97" fill="#f3c008" />
<rect x="147.80" y="675.60" width="1.20" height="4.97" fill="#deeb0f" />
<rect x="147.80" y="680.27" width="1.20" height="4.97" fill="#e8dc0a" />
<rect x="147.80" y="684.93" width="1.20" height="4.97" fill="#f3c008" />
<rect x="147.80" y="664.00" width="1.20" height="11.90" fill="#bdee04" />
<rect x="149.00" y="675.60" width="1.20" height="4.97" fill="#deeb0f" />
<rect x="149.00" y="680.27" width="1.20" height="4.97" fill="#e8dc0a" />
<rect x="149.00" y="684.93" width="1.20" height="4.97" fill="#f3c008" />
<rect x="150.20" y="675.60" width="1.20" height="4.97" fill="#deeb0f" />
<rect x="150.20" y="680.27" width="1.20" height="4.97" fill="#e8dc0a" />
<rect x="150.20" y="684.93" width="1.20" height="4.97" fill="#f3c008" />
<rect x="151.40" y="675.60" width="1.20" height="4.97" fill="#deeb0f" />
<rect x="151.40" y="680.27" width="1.20" height="4.97" fill="#e8dc0a" />
<rect x="151.40" y="684.93" width="1.20" height="4.97" fill="#f3c008" />
<rect x="152.60" y="675.60" width="1.20" height="4.97" fill="#deeb0f" />
<rect x="152.60" y="680.27" width="1.20" height="4.97" fill="#e8dc0a" />
<rect x="152.60" y="684.93" width="1.20" height="4.97" fill="#f3c008" />
<rect x="152.60" y="664.00" width="1.20" height="11.90" fill="#d5e401" />
<rect x="152.60" y="647.00" width="1.20" height="17.30" fill="#89e725" />
<rect x="152.60" y="584.00" width="1.20" height="21.30" fill="#046be4" />
<rect x="152.60" y="568.00" width="1.20" height="16.30" fill="#0b50f9" />
<rect x="152.60" y="555.00" width="1.20" height="13.30" fill="#103af7" />
<rect x="153.80" y="675.60" width="1.20" height="4.97" fill="#96e628" />
<rect x="153.80" y="680.27" width="1.20" height="4.97" fill="#e8dc0a" />
<rect x="153.80" y="684.93" width="1.20" height="4.97" fill="#f3c008" />
<rect x="153.80" y="664.00" width="1.20" height="11.90" fill="#bbef05" />
<rect x="153.80" y="530.00" width="1.20" height="25.30" fill="#0d11c5" />
<rect x="155.00" y="675.60" width="1.20" height="4.97" fill="#96e628" />
<rect x="155.00" y="680.27" width="1.20" height="4.97" fill="#e8dc0a" />
<rect x="155.00" y="684.93" width="1.20" height="4.97" fill="#f3c008" />
<rect x="155.00" y="605.00" width="1.20" height="13.30" fill="#009eb1" />
<rect x="155.00" y="584.00" width="1.20" height="21.30" fill="#0078d7" />
<rect x="156.20" y="530.00" width="1.20" height="25.30" fill="#111bdf" />
<rect x="156.20" y="522.50" width="1.20" height="7.80" fill="#1019dc" />
<rect x="157.40" y="675.60" width="1.20" height="4.97" fill="#96e628" />
<rect x="157.40" y="680.27" width="1.20" height="4.97" fill="#e8dc0a" />
<rect x="157.40" y="684.93" width="1.20" height="4.97" fill="#f3c008" />
<rect x="159.80" y="630.00" width="1.20" height="17.30" fill="#30cd58" />
<rect x="161.00" y="675.60" width="1.20" height="4.97" fill="#deeb0f" />
<rect x="161.00" y="680.27" width="1.20" height="4.97" fill="#e8dc0a" />
<rect x="161.00" y="684.93" width="1.20" height="4.97" fill="#f3c008" />
<rect x="161.00" y="530.00" width="1.20" height="25.30" fill="#1019da" />
<rect x="161.00" y="522.50" width="1.20" height="7.80" fill="#1222ea" />
<rect x="162.20" y="675.60" width="1.20" height="4.97" fill="#deeb0f" />
<rect x="162.20" y="680.27" width="1.20" height="4.97" fill="#e8dc0a" />
<rect x="162.20" y="684.93" width="1.20" height="4.97" fill="#f3c008" />
<rect x="162.20" y="555.00" width="1.20" height="13.30" fill="#1323ec" />
<rect x="162.20" y="530.00" width="1.20" height="25.30" fill="#0c10c3" />
<rect x="163.40" y="675.60" width="1.20" height="4.97" fill="#deeb0f" />
<rect x="163.40" y="680.27" width="1.20" height="4.97" fill="#e8dc0a" />
<rect x="163.40" y="684.93" width="1.20" height="4.97" fill="#f3c008" />
<rect x="163.40" y="664.00" width="1.20" height="11.90" fill="#cbe802" />
<rect x="163.40" y="522.50" width="1.20" height="7.80" fill="#0d12ca" />
<rect x="165.80" y="530.00" width="1.20" height="25.30" fill="#0c11c5" />
<rect x="167.00" y="675.60" width="1.20" height="4.97" fill="#deeb0f" />
<rect x="167.00" y="680.27" width="1.20" height="4.97" fill="#e8dc0a" />
<rect x="167.00" y="684.93" width="1.20" height="4.97" fill="#f3c008" />
<rect x="168.20" y="675.60" width="1.20" height="4.97" fill="#deeb0f" />
<rect x="168.20" y="680.27" width="1.20" height="4.97" fill="#e8dc0a" />
<rect x="168.20" y="684.93" width="1.20" height="4.97" fill="#f3c008" />
<rect x="168.20" y="605.00" width="1.20" height="13.30" fill="#008cc3" />
<rect x="168.20" y="584.00" width="1.20" height="21.30" fill="#0081ce" />
<rect x="168.20" y="530.00" width="1.20" height="25.30" fill="#111de2" />
<rect x="169.40" y="675.60" width="1.20" height="4.97" fill="#deeb0f" />
<rect x="169.40" y="680.27" width="1.20" height="4.97" fill="#e8dc0a" />
<rect x="169.40" y="684.93" width="1.20" height="4.97" fill="#f3c008" />
<rect x="169.40" y="555.00" width="1.20" height="13.30" fill="#1427f3" />
<rect x="169.40" y="530.00" width="1.20" height="25.30" fill="#0709a7" />
<rect x="171.80" y="584.00" width="1.20" height="21.30" fill="#0271de" />
<rect x="171.80" y="568.00" width="1.20" height="16.30" fill="#0e43f8" />
<rect x="173.00" y="675.60" width="1.20" height="4.97" fill="#deeb0f" />
<rect x="173.00" y="680.27" width="1.20" height="4.97" fill="#e8dc0a" />
<rect x="173.00" y="684.93" width="1.20" height="4.97" fill="#f3c008" />
<rect x="173.00" y="664.00" width="1.20" height="11.90" fill="#d6e401" />
<rect x="173.00" y="530.00" width="1.20" height="25.30" fill="#0a0db7" />
<rect x="173.00" y="522.50" width="1.20" height="7.80" fill="#0b0fbf" />
<rect x="174.20" y="675.60" width="1.20" height="4.97" fill="#96e628" />
<rect x="174.20" y="680.27" width="1.20" height="4.97" fill="#e8dc0a" />
<rect x="174.20" y="684.93" width="1.20" height="4.97" fill="#f3c008" />
<rect x="174.20" y="618.00" width="1.20" height="12.30" fill="#04a79f" />
<rect x="174.20" y="605.00" width="1.20" height="13.30" fill="#009eb1" />
<rect x="174.20" y="530.00" width="1.20" height="25.30" fill="#0709a6" />
<rect x="175.40" y="555.00" width="1.20" height="13.30" fill="#1426f2" />
<rect x="175.40" y="530.00" width="1.20" height="25.30" fill="#0d12c8" />
<rect x="176.60" y="675.60" width="1.20" height="4.97" fill="#96e628" />
<rect x="176.60" y="680.27" width="1.20" height="4.97" fill="#e8dc0a" />
<rect x="176.60" y="684.93" width="1.20" height="4.97" fill="#f3c008" />
<rect x="176.60" y="664.00" width="1.20" height="11.90" fill="#d7e301" />
<rect x="176.60" y="568.00" width="1.20" height="16.30" fill="#0b4ff9" />
<rect x="176.60" y="555.00" width="1.20" height="13.30" fill="#1326f1" />
<rect x="176.60" y="530.00" width="1.20" height="25.30" fill="#0d11c8" />
<rect x="177.80" y="555.00" width="1.20" height="13.30" fill="#142af5" />
<rect x="179.00" y="675.60" width="1.20" height="4.97" fill="#deeb0f" />
<rect x="179.00" y="680.27" width="1.20" height="4.97" fill="#e8dc0a" />
<rect x="179.00" y="684.93" width="1.20" height="4.97" fill="#f3c008" />
<rect x="180.20" y="675.60" width="1.20" height="4.97" fill="#deeb0f" />
<rect x="180.20" y="680.27" width="1.20" height="4.97" fill="#e8dc0a" />
<rect x="180.20" y="684.93" width="1.20" height="4.97" fill="#f3c008" />
<rect x="181.40" y="530.00" width="1.20" height="25.30" fill="#111de2" />
<rect x="182.60" y="647.00" width="1.20" height="17.30" fill="#83e628" />
<rect x="182.60" y="530.00" width="1.20" height="25.30" fill="#0f14d1" />
<rect x="182.60" y="522.50" width="1.20" height="7.80" fill="#1017d8" />
<rect x="183.80" y="605.00" width="1.20" height="13.30" fill="#01a2aa" />
<rect x="183.80" y="584.00" width="1.20" height="21.30" fill="#0568e7" />
<rect x="183.80" y="555.00" width="1.20" height="13.30" fill="#1221e9" />
<rect x="183.80" y="530.00" width="1.20" height="25.30" fill="#111add" />
<rect x="185.00" y="675.60" width="1.20" height="4.97" fill="#deeb0f" />
<rect x="185.00" y="680.27" width="1.20" height="4.97" fill="#e8dc0a" />
<rect x="185.00" y="684.93" width="1.20" height="4.97" fill="#f3c008" />
<rect x="185.00" y="630.00" width="1.20" height="17.30" fill="#38d34f" />
<rect x="185.00" y="555.00" width="1.20" height="13.30" fill="#0f3ff8" />
<rect x="185.00" y="530.00" width="1.20" height="25.30" fill="#0e12ca" />
<rect x="187.40" y="675.60" width="1.20" height="4.97" fill="#deeb0f" />
<rect x="187.40" y="680.27" width="1.20" height="4.97" fill="#e8dc0a" />
<rect x="187.40" y="684.93" width="1.20" height="4.97" fill="#f3c008" />
<rect x="188.60" y="675.60" width="1.20" height="4.97" fill="#deeb0f" />
<rect x="188.60" y="680.27" width="1.20" height="4.97" fill="#e8dc0a" />
<rect x="188.60" y="684.93" width="1.20" height="4.97" fill="#f3c008" />
<rect x="189.80" y="675.60" width="1.20" height="4.97" fill="#deeb0f" />
<rect x="189.80" y="680.27" width="1.20" height="4.97" fill="#e8dc0a" />
<rect x="189.80" y="684.93" width="1.20" height="4.97" fill="#f3c008" />
<rect x="189.80" y="664.00" width="1.20" height="11.90" fill="#d1e602" />
<rect x="189.80" y="618.00" width="1.20" height="12.30" fill="#05aa9a" />
<rect x="189.80" y="605.00" width="1.20" height="13.30" fill="#008fc0" />
<rect x="189.80" y="584.00" width="1.20" height="21.30" fill="#0760ef" />
<rect x="189.80" y="568.00" width="1.20" height="16.30" fill="#0959f6" />
<rect x="189.80" y="555.00" width="1.20" height="13.30" fill="#1134f6" />
<rect x="189.80" y="530.00" width="1.20" height="25.30" fill="#1324ee" />
<rect x="191.00" y="568.00" width="1.20" height="16.30" fill="#0a54fa" />
<rect x="191.00" y="555.00" width="1.20" height="13.30" fill="#1325ef" />
<rect x="191.00" y="530.00" width="1.20" height="25.30" fill="#0f14d2" />
<rect x="191.00" y="522.50" width="1.20" height="7.80" fill="#0f15d3" />
<rect x="192.20" y="675.60" width="1.20" height="4.97" fill="#deeb0f" />
<rect x="192.20" y="680.27" width="1.20" height="4.97" fill="#e8dc0a" />
<rect x="192.20" y="684.93" width="1.20" height="4.97" fill="#f3c008" />
<rect x="192.20" y="664.00" width="1.20" height="11.90" fill="#baf005" />
<rect x="192.20" y="647.00" width="1.20" height="17.30" fill="#9eeb17" />
<rect x="192.20" y="568.00" width="1.20" height="16.30" fill="#103bf7" />
<rect x="192.20" y="555.00" width="1.20" height="13.30" fill="#121fe6" />
<rect x="192.20" y="530.00" width="1.20" height="25.30" fill="#1016d6" />
<rect x="193.40" y="530.00" width="1.20" height="25.30" fill="#1018d9" />
<rect x="194.60" y="675.60" width="1.20" height="4.97" fill="#96e628" />
<rect x="194.60" y="680.27" width="1.20" height="4.97" fill="#e8dc0a" />
<rect x="194.60" y="684.93" width="1.20" height="4.97" fill="#f3c008" />
<rect x="194.60" y="568.00" width="1.20" height="16.30" fill="#0d47f8" />
<rect x="195.80" y="675.60" width="1.20" height="4.97" fill="#deeb0f" />
<rect x="195.80" y="680.27" width="1.20" height="4.97" fill="#e8dc0a" />
<rect x="195.80" y="684.93" width="1.20" height="4.97" fill="#f3c008" />
<rect x="195.80" y="605.00" width="1.20" height="13.30" fill="#0093bc" />
<rect x="195.80" y="584.00" width="1.20" height="21.30" fill="#075ef1" />
<rect x="197.00" y="675.60" width="1.20" height="4.97" fill="#96e628" />
<rect x="197.00" y="680.27" width="1.20" height="4.97" fill="#e8dc0a" />
<rect x="197.00" y="684.93" width="1.20" height="4.97" fill="#f3c008" />
<rect x="198.20" y="675.60" width="1.20" height="4.97" fill="#deeb0f" />
<rect x="198.20" y="680.27" width="1.20" height="4.97" fill="#e8dc0a" />
<rect x="198.20" y="684.93" width="1.20" height="4.97" fill="#f3c008" />
<rect x="198.20" y="530.00" width="1.20" height="25.30" fill="#0c10c3" />
<rect x="198.20" y="514.00" width="1.20" height="8.80" fill="#1017d8" />
<rect x="199.40" y="675.60" width="1.20" height="4.97" fill="#deeb0f" />
<rect x="199.40" y="680.27" width="1.20" height="4.97" fill="#e8dc0a" />
<rect x="199.40" y="684.93" width="1.20" height="4.97" fill="#f3c008" />
<rect x="200.60" y="675.60" width="1.20" height="4.97" fill="#96e628" />
<rect x="200.60" y="680.27" width="1.20" height="4.97" fill="#e8dc0a" />
<rect x="200.60" y="684.93" width="1.20" height="4.97" fill="#f3c008" />
<rect x="200.60" y="664.00" width="1.20" height="11.90" fill="#c4eb03" />
<rect x="200.60" y="647.00" width="1.20" height="17.30" fill="#a7ed11" />
<rect x="200.60" y="584.00" width="1.20" height="21.30" fill="#0271de" />
<rect x="200.60" y="568.00" width="1.20" height="16.30" fill="#1136f7" />
<rect x="200.60" y="555.00" width="1.20" height="13.30" fill="#132cf5" />
<rect x="200.60" y="530.00" width="1.20" height="25.30" fill="#0e13cd" />
<rect x="200.60" y="522.50" width="1.20" height="7.80" fill="#0c10c2" />
<rect x="201.80" y="675.60" width="1.20" height="4.97" fill="#deeb0f" />
<rect x="201.80" y="680.27" width="1.20" height="4.97" fill="#e8dc0a" />
<rect x="201.80" y="684.93" width="1.20" height="4.97" fill="#f3c008" />
<rect x="201.80" y="664.00" width="1.20" height="11.90" fill="#cee702" />
<rect x="203.00" y="675.60" width="1.20" height="4.97" fill="#deeb0f" />
<rect x="203.00" y="680.27" width="1.20" height="4.97" fill="#e8dc0a" />
<rect x="203.00" y="684.93" width="1.20" height="4.97" fill="#f3c008" />
<rect x="203.00" y="530.00" width="1.20" height="25.30" fill="#0e13ce" />
<rect x="203.00" y="522.50" width="1.20" height="7.80" fill="#111cdf" />
<rect x="204.20" y="675.60" width="1.20" height="4.97" fill="#deeb0f" />
<rect x="204.20" y="680.27" width="1.20" height="4.97" fill="#e8dc0a" />
<rect x="204.20" y="684.93" width="1.20" height="4.97" fill="#f3c008" />
<rect x="204.20" y="568.00" width="1.20" height="16.30" fill="#0c4cf9" />
<rect x="205.40" y="675.60" width="1.20" height="4.97" fill="#96e628" />
<rect x="205.40" y="680.27" width="1.20" height="4.97" fill="#e8dc0a" />
<rect x="205.40" y="684.93" width="1.20" height="4.97" fill="#f3c008" />
<rect x="206.60" y="675.60" width="1.20" height="4.97" fill="#96e628" />
<rect x="206.60" y="680.27" width="1.20" height="4.97" fill="#e8dc0a" />
<rect x="206.60" y="684.93" width="1.20" height="4.97" fill="#f3c008" />
<rect x="206.60" y="664.00" width="1.20" height="11.90" fill="#dbe100" />
<rect x="206.60" y="647.00" width="1.20" height="17.30" fill="#7de42b" />
<rect x="206.60" y="630.00" width="1.20" height="17.30" fill="#3ed54a" />
<rect x="206.60" y="618.00" width="1.20" height="12.30" fill="#10b87c" />
<rect x="207.80" y="675.60" width="1.20" height="4.97" fill="#deeb0f" />
<rect x="207.80" y="680.27" width="1.20" height="4.97" fill="#e8dc0a" />
<rect x="207.80" y="684.93" width="1.20" height="4.97" fill="#f3c008" />
<rect x="207.80" y="664.00" width="1.20" height="11.90" fill="#bbef05" />
<rect x="209.00" y="675.60" width="1.20" height="4.97" fill="#deeb0f" />
<rect x="209.00" y="680.27" width="1.20" height="4.97" fill="#e8dc0a" />
<rect x="209.00" y="684.93" width="1.20" height="4.97" fill="#f3c008" />
<rect x="209.00" y="605.00" width="1.20" height="13.30" fill="#0086c9" />
<rect x="209.00" y="584.00" width="1.20" height="21.30" fill="#0081ce" />
<rect x="209.00" y="530.00" width="1.20" height="25.30" fill="#090cb1" />
<rect x="209.00" y="522.50" width="1.20" height="7.80" fill="#0d12c9" />
<rect x="210.20" y="675.60" width="1.20" height="4.97" fill="#deeb0f" />
<rect x="210.20" y="680.27" width="1.20" height="4.97" fill="#e8dc0a" />
<rect x="210.20" y="684.93" width="1.20" height="4.97" fill="#f3c008" />
<rect x="210.20" y="664.00" width="1.20" height="11.90" fill="#d5e401" />
<rect x="210.20" y="584.00" width="1.20" height="21.30" fill="#0173dc" />
<rect x="211.40" y="675.60" width="1.20" height="4.97" fill="#deeb0f" />
<rect x="211.40" y="680.27" width="1.20" height="4.97" fill="#e8dc0a" />
<rect x="211.40" y="684.93" width="1.20" height="4.97" fill="#f3c008" />
<rect x="212.60" y="675.60" width="1.20" height="4.97" fill="#deeb0f" />
<rect x="212.60" y="680.27" width="1.20" height="4.97" fill="#e8dc0a" />
<rect x="212.60" y="684.93" width="1.20" height="4.97" fill="#f3c008" />
<rect x="212.60" y="530.00" width="1.20" height="25.30" fill="#101adc" />
<rect x="213.80" y="530.00" width="1.20" height="25.30" fill="#101adc" />
<rect x="215.00" y="675.60" width="1.20" height="4.97" fill="#deeb0f" />
<rect x="215.00" y="680.27" width="1.20" height="4.97" fill="#e8dc0a" />
<rect x="215.00" y="684.93" width="1.20" height="4.97" fill="#f3c008" />
<rect x="216.20" y="675.60" width="1.20" height="4.97" fill="#deeb0f" />
<rect x="216.20" y="680.27" width="1.20" height="4.97" fill="#e8dc0a" />
<rect x="216.20" y="684.93" width="1.20" height="4.97" fill="#f3c008" />
<rect x="216.20" y="664.00" width="1.20" height="11.90" fill="#b9f005" />
<rect x="216.20" y="647.00" width="1.20" height="17.30" fill="#87e725" />
<rect x="216.20" y="605.00" width="1.20" height="13.30" fill="#009eb1" />
<rect x="216.20" y="584.00" width="1.20" height="21.30" fill="#0566e9" />
<rect x="217.40" y="530.00" width="1.20" height="25.30" fill="#0f15d4" />
<rect x="218.60" y="675.60" width="1.20" height="4.97" fill="#deeb0f" />
<rect x="218.60" y="680.27" width="1.20" height="4.97" fill="#e8dc0a" />
<rect x="218.60" y="684.93" width="1.20" height="4.97" fill="#f3c008" />
<rect x="218.60" y="664.00" width="1.20" height="11.90" fill="#c1ec04" />
<rect x="218.60" y="530.00" width="1.20" height="25.30" fill="#0608a4" />
<rect x="219.80" y="675.60" width="1.20" height="4.97" fill="#deeb0f" />
<rect x="219.80" y="680.27" width="1.20" height="4.97" fill="#e8dc0a" />
<rect x="219.80" y="684.93" width="1.20" height="4.97" fill="#f3c008" />
<rect x="219.80" y="664.00" width="1.20" height="11.90" fill="#dbe100" />
<rect x="219.80" y="647.00" width="1.20" height="17.30" fill="#76e32e" />
<rect x="219.80" y="630.00" width="1.20" height="17.30" fill="#45d747" />
<rect x="219.80" y="618.00" width="1.20" height="12.30" fill="#06ac94" />
<rect x="221.00" y="675.60" width="1.20" height="4.97" fill="#deeb0f" />
<rect x="221.00" y="680.27" width="1.20" height="4.97" fill="#e8dc0a" />
<rect x="221.00" y="684.93" width="1.20" height="4.97" fill="#f3c008" />
<rect x="221.00" y="618.00" width="1.20" height="12.30" fill="#08af8d" />
<rect x="222.20" y="675.60" width="1.20" height="4.97" fill="#deeb0f" />
<rect x="222.20" y="680.27" width="1.20" height="4.97" fill="#e8dc0a" />
<rect x="222.20" y="684.93" width="1.20" height="4.97" fill="#f3c008" />
<rect x="222.20" y="664.00" width="1.20" height="11.90" fill="#cee702" />
<rect x="223.40" y="675.60" width="1.20" height="4.97" fill="#deeb0f" />
<rect x="223.40" y="680.27" width="1.20" height="4.97" fill="#e8dc0a" />
<rect x="223.40" y="684.93" width="1.20" height="4.97" fill="#f3c008" />
<rect x="223.40" y="664.00" width="1.20" height="11.90" fill="#d0e602" />
<rect x="223.40" y="647.00" width="1.20" height="17.30" fill="#87e726" />
<rect x="223.40" y="555.00" width="1.20" height="13.30" fill="#1427f3" />
<rect x="223.40" y="530.00" width="1.20" height="25.30" fill="#1323ec" />
<rect x="224.60" y="675.60" width="1.20" height="4.97" fill="#deeb0f" />
<rect x="224.60" y="680.27" width="1.20" height="4.97" fill="#e8dc0a" />
<rect x="224.60" y="684.93" width="1.20" height="4.97" fill="#f3c008" />
<rect x="224.60" y="664.00" width="1.20" height="11.90" fill="#c8ea03" />
<rect x="224.60" y="647.00" width="1.20" height="17.30" fill="#92e91f" />
<rect x="224.60" y="555.00" width="1.20" height="13.30" fill="#0f3ef7" />
<rect x="224.60" y="530.00" width="1.20" height="25.30" fill="#1017d7" />
<rect x="225.80" y="675.60" width="1.20" height="4.97" fill="#deeb0f" />
<rect x="225.80" y="680.27" width="1.20" height="4.97" fill="#e8dc0a" />
<rect x="225.80" y="684.93" width="1.20" height="4.97" fill="#f3c008" />
<rect x="225.80" y="664.00" width="1.20" height="11.90" fill="#baf005" />
<rect x="225.80" y="530.00" width="1.20" height="25.30" fill="#090cb2" />
<rect x="227.00" y="675.60" width="1.20" height="4.97" fill="#deeb0f" />
<rect x="227.00" y="680.27" width="1.20" height="4.97" fill="#e8dc0a" />
<rect x="227.00" y="684.93" width="1.20" height="4.97" fill="#f3c008" />
<rect x="228.20" y="675.60" width="1.20" height="4.97" fill="#deeb0f" />
<rect x="228.20" y="680.27" width="1.20" height="4.97" fill="#e8dc0a" />
<rect x="228.20" y="684.93" width="1.20" height="4.97" fill="#f3c008" />
<rect x="228.20" y="664.00" width="1.20" height="11.90" fill="#bbef05" />
<rect x="228.20" y="647.00" width="1.20" height="17.30" fill="#7ce42b" />
<rect x="228.20" y="584.00" width="1.20" height="21.30" fill="#0080cf" />
<rect x="229.40" y="675.60" width="1.20" height="4.97" fill="#deeb0f" />
<rect x="229.40" y="680.27" width="1.20" height="4.97" fill="#e8dc0a" />
<rect x="229.40" y="684.93" width="1.20" height="4.97" fill="#f3c008" />
<rect x="229.40" y="530.00" width="1.20" height="25.30" fill="#1428f5" />
<rect x="230.60" y="675.60" width="1.20" height="4.97" fill="#deeb0f" />
<rect x="230.60" y="680.27" width="1.20" height="4.97" fill="#e8dc0a" />
<rect x="230.60" y="684.93" width="1.20" height="4.97" fill="#f3c008" />
<rect x="231.80" y="675.60" width="1.20" height="4.97" fill="#deeb0f" />
<rect x="231.80" y="680.27" width="1.20" height="4.97" fill="#e8dc0a" />
<rect x="231.80" y="684.93" width="1.20" height="4.97" fill="#f3c008" />
<rect x="231.80" y="664.00" width="1.20" height="11.90" fill="#dbe100" />
<rect x="231.80" y="530.00" width="1.20" height="25.30" fill="#1426f2" />
<rect x="231.80" y="522.50" width="1.20" height="7.80" fill="#0b0fbd" />
<rect x="233.00" y="675.60" width="1.20" height="4.97" fill="#deeb0f" />
<rect x="233.00" y="680.27" width="1.20" height="4.97" fill="#e8dc0a" />
<rect x="233.00" y="684.93" width="1.20" height="4.97" fill="#f3c008" />
<rect x="233.00" y="664.00" width="1.20" height="11.90" fill="#cce802" />
<rect x="234.20" y="675.60" width="1.20" height="4.97" fill="#deeb0f" />
<rect x="234.20" y="680.27" width="1.20" height="4.97" fill="#e8dc0a" />
<rect x="234.20" y="684.93" width="1.20" height="4.97" fill="#f3c008" />
<rect x="234.20" y="664.00" width="1.20" height="11.90" fill="#c2ec04" />
<rect x="234.20" y="647.00" width="1.20" height="17.30" fill="#95ea1d" />
<rect x="234.20" y="630.00" width="1.20" height="17.30" fill="#52da40" />
<rect x="234.20" y="568.00" width="1.20" height="16.30" fill="#0d47f8" />
<rect x="234.20" y="555.00" width="1.20" height="13.30" fill="#121ee4" />
<rect x="235.40" y="675.60" width="1.20" height="4.97" fill="#96e628" />
<rect x="235.40" y="680.27" width="1.20" height="4.97" fill="#e8dc0a" />
<rect x="235.40" y="684.93" width="1.20" height="4.97" fill="#f3c008" />
<rect x="236.60" y="675.60" width="1.20" height="4.97" fill="#deeb0f" />
<rect x="236.60" y="680.27" width="1.20" height="4.97" fill="#e8dc0a" />
<rect x="236.60" y="684.93" width="1.20" height="4.97" fill="#f3c008" />
<rect x="236.60" y="664.00" width="1.20" height="11.90" fill="#c6ea03" />
<rect x="236.60" y="647.00" width="1.20" height="17.30" fill="#aaed0f" />
<rect x="236.60" y="530.00" width="1.20" height="25.30" fill="#111bdf" />
<rect x="237.80" y="675.60" width="1.20" height="4.97" fill="#deeb0f" />
<rect x="237.80" y="680.27" width="1.20" height="4.97" fill="#e8dc0a" />
<rect x="237.80" y="684.93" width="1.20" height="4.97" fill="#f3c008" />
<rect x="237.80" y="630.00" width="1.20" height="17.30" fill="#3ad44d" />
<rect x="237.80" y="568.00" width="1.20" height="16.30" fill="#0d45f8" />
<rect x="237.80" y="530.00" width="1.20" height="25.30" fill="#1222ea" />
<rect x="239.00" y="675.60" width="1.20" height="4.97" fill="#deeb0f" />
<rect x="239.00" y="680.27" width="1.20" height="4.97" fill="#e8dc0a" />
<rect x="239.00" y="684.93" width="1.20" height="4.97" fill="#f3c008" />
<rect x="239.00" y="530.00" width="1.20" height="25.30" fill="#080bac" />
<rect x="239.00" y="522.50" width="1.20" height="7.80" fill="#1322eb" />
<rect x="240.20" y="675.60" width="1.20" height="4.97" fill="#96e628" />
<rect x="240.20" y="680.27" width="1.20" height="4.97" fill="#e8dc0a" />
<rect x="240.20" y="684.93" width="1.20" height="4.97" fill="#f3c008" />
<rect x="240.20" y="664.00" width="1.20" height="11.90" fill="#c8e903" />
<rect x="240.20" y="647.00" width="1.20" height="17.30" fill="#a3ec14" />
<rect x="241.40" y="675.60" width="1.20" height="4.97" fill="#deeb0f" />
<rect x="241.40" y="680.27" width="1.20" height="4.97" fill="#e8dc0a" />
<rect x="241.40" y="684.93" width="1.20" height="4.97" fill="#f3c008" />
<rect x="241.40" y="664.00" width="1.20" height="11.90" fill="#d5e401" />
<rect x="241.40" y="647.00" width="1.20" height="17.30" fill="#a0ec16" />
<rect x="242.60" y="675.60" width="1.20" height="4.97" fill="#deeb0f" />
<rect x="242.60" y="680.27" width="1.20" height="4.97" fill="#e8dc0a" />
<rect x="242.60" y="684.93" width="1.20" height="4.97" fill="#f3c008" />
<rect x="243.80" y="675.60" width="1.20" height="4.97" fill="#96e628" />
<rect x="243.80" y="680.27" width="1.20" height="4.97" fill="#e8dc0a" />
<rect x="243.80" y="684.93" width="1.20" height="4.97" fill="#f3c008" />
<rect x="243.80" y="618.00" width="1.20" height="12.30" fill="#05a99a" />
<rect x="245.00" y="675.60" width="1.20" height="4.97" fill="#deeb0f" />
<rect x="245.00" y="680.27" width="1.20" height="4.97" fill="#e8dc0a" />
<rect x="245.00" y="684.93" width="1.20" height="4.97" fill="#f3c008" />
<rect x="245.00" y="664.00" width="1.20" height="11.90" fill="#beee04" />
<rect x="246.20" y="675.60" width="1.20" height="4.97" fill="#deeb0f" />
<rect x="246.20" y="680.27" width="1.20" height="4.97" fill="#e8dc0a" />
<rect x="246.20" y="684.93" width="1.20" height="4.97" fill="#f3c008" />
<rect x="246.20" y="664.00" width="1.20" height="11.90" fill="#d8e301" />
<rect x="246.20" y="647.00" width="1.20" height="17.30" fill="#7fe52a" />
<rect x="246.20" y="630.00" width="1.20" height="17.30" fill="#27c763" />
<rect x="246.20" y="568.00" width="1.20" height="16.30" fill="#0f3ef7" />
<rect x="246.20" y="555.00" width="1.20" height="13.30" fill="#1429f5" />
<rect x="246.20" y="530.00" width="1.20" height="25.30" fill="#0b0ebb" />
<rect x="246.20" y="522.50" width="1.20" height="7.80" fill="#0f15d4" />
<rect x="247.40" y="675.60" width="1.20" height="4.97" fill="#deeb0f" />
<rect x="247.40" y="680.27" width="1.20" height="4.97" fill="#e8dc0a" />
<rect x="247.40" y="684.93" width="1.20" height="4.97" fill="#f3c008" />
<rect x="247.40" y="530.00" width="1.20" height="25.30" fill="#0f15d4" />
<rect x="248.60" y="675.60" width="1.20" height="4.97" fill="#deeb0f" />
<rect x="248.60" y="680.27" width="1.20" height="4.97" fill="#e8dc0a" />
<rect x="248.60" y="684.93" width="1.20" height="4.97" fill="#f3c008" />
<rect x="248.60" y="584.00" width="1.20" height="21.30" fill="#085df2" />
<rect x="248.60" y="568.00" width="1.20" height="16.30" fill="#103af7" />
<rect x="248.60" y="555.00" width="1.20" height="13.30" fill="#1221e8" />
<rect x="249.80" y="675.60" width="1.20" height="4.97" fill="#deeb0f" />
<rect x="249.80" y="680.27" width="1.20" height="4.97" fill="#e8dc0a" />
<rect x="249.80" y="684.93" width="1.20" height="4.97" fill="#f3c008" />
<rect x="251.00" y="675.60" width="1.20" height="4.97" fill="#96e628" />
<rect x="251.00" y="680.27" width="1.20" height="4.97" fill="#e8dc0a" />
<rect x="251.00" y="684.93" width="1.20" height="4.97" fill="#f3c008" />
<rect x="252.20" y="675.60" width="1.20" height="4.97" fill="#96e628" />
<rect x="252.20" y="680.27" width="1.20" height="4.97" fill="#e8dc0a" />
<rect x="252.20" y="684.93" width="1.20" height="4.97" fill="#f3c008" />
<rect x="253.40" y="675.60" width="1.20" height="4.97" fill="#deeb0f" />
<rect x="253.40" y="680.27" width="1.20" height="4.97" fill="#e8dc0a" />
<rect x="253.40" y="684.93" width="1.20" height="4.97" fill="#f3c008" />
<rect x="253.40" y="530.00" width="1.20" height="25.30" fill="#1019db" />
<rect x="253.40" y="522.50" width="1.20" height="7.80" fill="#121fe5" />
<rect x="254.60" y="675.60" width="1.20" height="4.97" fill="#deeb0f" />
<rect x="254.60" y="680.27" width="1.20" height="4.97" fill="#e8dc0a" />
<rect x="254.60" y="684.93" width="1.20" height="4.97" fill="#f3c008" />
<rect x="254.60" y="530.00" width="1.20" height="25.30" fill="#111add" />
<rect x="254.60" y="522.50" width="1.20" height="7.80" fill="#121fe5" />
<rect x="255.80" y="675.60" width="1.20" height="4.97" fill="#deeb0f" />
<rect x="255.80" y="680.27" width="1.20" height="4.97" fill="#e8dc0a" />
<rect x="255.80" y="684.93" width="1.20" height="4.97" fill="#f3c008" />
<rect x="255.80" y="664.00" width="1.20" height="11.90" fill="#b9f005" />
<rect x="255.80" y="647.00" width="1.20" height="17.30" fill="#9beb19" />
<rect x="257.00" y="675.60" width="1.20" height="4.97" fill="#deeb0f" />
<rect x="257.00" y="680.27" width="1.20" height="4.97" fill="#e8dc0a" />
<rect x="257.00" y="684.93" width="1.20" height="4.97" fill="#f3c008" />
<rect x="258.20" y="675.60" width="1.20" height="4.97" fill="#deeb0f" />
<rect x="258.20" y="680.27" width="1.20" height="4.97" fill="#e8dc0a" />
<rect x="258.20" y="684.93" width="1.20" height="4.97" fill="#f3c008" />
<rect x="258.20" y="664.00" width="1.20" height="11.90" fill="#d7e301" />
<rect x="258.20" y="530.00" width="1.20" height="25.30" fill="#1019da" />
<rect x="259.40" y="675.60" width="1.20" height="4.97" fill="#96e628" />
<rect x="259.40" y="680.27" width="1.20" height="4.97" fill="#e8dc0a" />
<rect x="259.40" y="684.93" width="1.20" height="4.97" fill="#f3c008" />
<rect x="259.40" y="568.00" width="1.20" height="16.30" fill="#0e42f8" />
<rect x="260.60" y="675.60" width="1.20" height="4.97" fill="#deeb0f" />
<rect x="260.60" y="680.27" width="1.20" height="4.97" fill="#e8dc0a" />
<rect x="260.60" y="684.93" width="1.20" height="4.97" fill="#f3c008" />
<rect x="260.60" y="530.00" width="1.20" height="25.30" fill="#010186" />
<rect x="261.80" y="675.60" width="1.20" height="4.97" fill="#96e628" />
<rect x="261.80" y="680.27" width="1.20" height="4.97" fill="#e8dc0a" />
<rect x="261.80" y="684.93" width="1.20" height="4.97" fill="#f3c008" />
<rect x="261.80" y="568.00" width="1.20" height="16.30" fill="#0b50f9" />
<rect x="261.80" y="555.00" width="1.20" height="13.30" fill="#1322eb" />
<rect x="261.80" y="530.00" width="1.20" height="25.30" fill="#0c11c4" />
<rect x="263.00" y="647.00" width="1.20" height="17.30" fill="#98ea1b" />
<rect x="263.00" y="630.00" width="1.20" height="17.30" fill="#34cf54" />
<rect x="265.40" y="530.00" width="1.20" height="25.30" fill="#1221e9" />
<rect x="270.20" y="530.00" width="1.20" height="25.30" fill="#05079d" />
<rect x="270.20" y="522.50" width="1.20" height="7.80" fill="#1324ee" />
<rect x="272.60" y="675.60" width="1.20" height="4.97" fill="#deeb0f" />
<rect x="272.60" y="680.27" width="1.20" height="4.97" fill="#e8dc0a" />
<rect x="272.60" y="684.93" width="1.20" height="4.97" fill="#f3c008" />
<rect x="272.60" y="584.00" width="1.20" height="21.30" fill="#0079d6" />
<rect x="272.60" y="568.00" width="1.20" height="16.30" fill="#103cf7" />
<rect x="275.00" y="530.00" width="1.20" height="25.30" fill="#1324ee" />
<rect x="277.40" y="675.60" width="1.20" height="4.97" fill="#deeb0f" />
<rect x="277.40" y="680.27" width="1.20" height="4.97" fill="#e8dc0a" />
<rect x="277.40" y="684.93" width="1.20" height="4.97" fill="#f3c008" />
<rect x="278.60" y="675.60" width="1.20" height="4.97" fill="#deeb0f" />
<rect x="278.60" y="680.27" width="1.20" height="4.97" fill="#e8dc0a" />
<rect x="278.60" y="684.93" width="1.20" height="4.97" fill="#f3c008" />
<rect x="279.80" y="675.60" width="1.20" height="4.97" fill="#deeb0f" />
<rect x="279.80" y="680.27" width="1.20" height="4.97" fill="#e8dc0a" />
<rect x="279.80" y="684.93" width="1.20" height="4.97" fill="#f3c008" />
<rect x="279.80" y="630.00" width="1.20" height="17.30" fill="#2ecc5b" />
<rect x="279.80" y="618.00" width="1.20" height="12.30" fill="#06ac93" />
<rect x="279.80" y="605.00" width="1.20" height="13.30" fill="#02a4a6" />
<rect x="281.00" y="618.00" width="1.20" height="12.30" fill="#09b286" />
<rect x="281.00" y="605.00" width="1.20" height="13.30" fill="#0085ca" />
<rect x="282.20" y="675.60" width="1.20" height="4.97" fill="#deeb0f" />
<rect x="282.20" y="680.27" width="1.20" height="4.97" fill="#e8dc0a" />
<rect x="282.20" y="684.93" width="1.20" height="4.97" fill="#f3c008" />
<rect x="282.20" y="664.00" width="1.20" height="11.90" fill="#cde702" />
<rect x="282.20" y="647.00" width="1.20" height="17.30" fill="#9deb18" />
<rect x="284.60" y="675.60" width="1.20" height="4.97" fill="#deeb0f" />
<rect x="284.60" y="680.27" width="1.20" height="4.97" fill="#e8dc0a" />
<rect x="284.60" y="684.93" width="1.20" height="4.97" fill="#f3c008" />
<rect x="285.80" y="675.60" width="1.20" height="4.97" fill="#deeb0f" />
<rect x="285.80" y="680.27" width="1.20" height="4.97" fill="#e8dc0a" />
<rect x="285.80" y="684.93" width="1.20" height="4.97" fill="#f3c008" />
<rect x="285.80" y="664.00" width="1.20" height="11.90" fill="#cfe602" />
<rect x="285.80" y="568.00" width="1.20" height="16.30" fill="#0f3ff8" />
<rect x="288.20" y="555.00" width="1.20" height="13.30" fill="#1427f3" />
<rect x="288.20" y="530.00" width="1.20" height="25.30" fill="#0f15d4" />
<rect x="289.40" y="530.00" width="1.20" height="25.30" fill="#1324ef" />
<rect x="290.60" y="530.00" width="1.20" height="25.30" fill="#111ee3" />
<rect x="290.60" y="522.50" width="1.20" height="7.80" fill="#0d11c7" />
<rect x="291.80" y="530.00" width="1.20" height="25.30" fill="#1324ee" />
<rect x="294.20" y="675.60" width="1.20" height="4.97" fill="#deeb0f" />
<rect x="294.20" y="680.27" width="1.20" height="4.97" fill="#e8dc0a" />
<rect x="294.20" y="684.93" width="1.20" height="4.97" fill="#f3c008" />
<rect x="294.20" y="584.00" width="1.20" height="21.30" fill="#085df2" />
<rect x="294.20" y="530.00" width="1.20" height="25.30" fill="#0608a4" />
<rect x="295.40" y="675.60" width="1.20" height="4.97" fill="#deeb0f" />
<rect x="295.40" y="680.27" width="1.20" height="4.97" fill="#e8dc0a" />
<rect x="295.40" y="684.93" width="1.20" height="4.97" fill="#f3c008" />
<rect x="295.40" y="664.00" width="1.20" height="11.90" fill="#d5e401" />
<rect x="295.40" y="647.00" width="1.20" height="17.30" fill="#9eeb17" />
<rect x="296.60" y="675.60" width="1.20" height="4.97" fill="#deeb0f" />
<rect x="296.60" y="680.27" width="1.20" height="4.97" fill="#e8dc0a" />
<rect x="296.60" y="684.93" width="1.20" height="4.97" fill="#f3c008" />
<rect x="296.60" y="664.00" width="1.20" height="11.90" fill="#c4eb03" />
<rect x="296.60" y="647.00" width="1.20" height="17.30" fill="#94e91e" />
<rect x="297.80" y="675.60" width="1.20" height="4.97" fill="#deeb0f" />
<rect x="297.80" y="680.27" width="1.20" height="4.97" fill="#e8dc0a" />
<rect x="297.80" y="684.93" width="1.20" height="4.97" fill="#f3c008" />
<rect x="297.80" y="568.00" width="1.20" height="16.30" fill="#0b51fa" />
<rect x="300.20" y="675.60" width="1.20" height="4.97" fill="#deeb0f" />
<rect x="300.20" y="680.27" width="1.20" height="4.97" fill="#e8dc0a" />
<rect x="300.20" y="684.93" width="1.20" height="4.97" fill="#f3c008" />
<rect x="300.20" y="664.00" width="1.20" height="11.90" fill="#c6ea03" />
<rect x="300.20" y="584.00" width="1.20" height="21.30" fill="#007dd2" />
<rect x="300.20" y="568.00" width="1.20" height="16.30" fill="#0f40f8" />
<rect x="302.60" y="675.60" width="1.20" height="4.97" fill="#deeb0f" />
<rect x="302.60" y="680.27" width="1.20" height="4.97" fill="#e8dc0a" />
<rect x="302.60" y="684.93" width="1.20" height="4.97" fill="#f3c008" />
<rect x="302.60" y="647.00" width="1.20" height="17.30" fill="#82e628" />
<rect x="302.60" y="630.00" width="1.20" height="17.30" fill="#2cca5d" />
<rect x="303.80" y="647.00" width="1.20" height="17.30" fill="#7ae42c" />
<rect x="303.80" y="605.00" width="1.20" height="13.30" fill="#02a4a5" />
<rect x="303.80" y="555.00" width="1.20" height="13.30" fill="#1428f5" />
<rect x="303.80" y="530.00" width="1.20" height="25.30" fill="#0b0fbd" />
<rect x="305.00" y="675.60" width="1.20" height="4.97" fill="#deeb0f" />
<rect x="305.00" y="680.27" width="1.20" height="4.97" fill="#e8dc0a" />
<rect x="305.00" y="684.93" width="1.20" height="4.97" fill="#f3c008" />
<rect x="307.40" y="675.60" width="1.20" height="4.97" fill="#96e628" />
<rect x="307.40" y="680.27" width="1.20" height="4.97" fill="#e8dc0a" />
<rect x="307.40" y="684.93" width="1.20" height="4.97" fill="#f3c008" />
<rect x="307.40" y="530.00" width="1.20" height="25.30" fill="#1019db" />
<rect x="308.60" y="675.60" width="1.20" height="4.97" fill="#96e628" />
<rect x="308.60" y="680.27" width="1.20" height="4.97" fill="#e8dc0a" />
<rect x="308.60" y="684.93" width="1.20" height="4.97" fill="#f3c008" />
<rect x="308.60" y="568.00" width="1.20" height="16.30" fill="#0958f7" />
<rect x="308.60" y="555.00" width="1.20" height="13.30" fill="#1221e9" />
<rect x="308.60" y="530.00" width="1.20" height="25.30" fill="#05079e" />
<rect x="309.80" y="675.60" width="1.20" height="4.97" fill="#deeb0f" />
<rect x="309.80" y="680.27" width="1.20" height="4.97" fill="#e8dc0a" />
<rect x="309.80" y="684.93" width="1.20" height="4.97" fill="#f3c008" />
<rect x="309.80" y="664.00" width="1.20" height="11.90" fill="#cbe802" />
<rect x="309.80" y="647.00" width="1.20" height="17.30" fill="#9aea1a" />
<rect x="309.80" y="630.00" width="1.20" height="17.30" fill="#36d151" />
<rect x="309.80" y="618.00" width="1.20" height="12.30" fill="#11b97a" />
<rect x="309.80" y="605.00" width="1.20" height="13.30" fill="#0093bc" />
<rect x="309.80" y="584.00" width="1.20" height="21.30" fill="#007ad5" />
<rect x="311.00" y="675.60" width="1.20" height="4.97" fill="#deeb0f" />
<rect x="311.00" y="680.27" width="1.20" height="4.97" fill="#e8dc0a" />
<rect x="311.00" y="684.93" width="1.20" height="4.97" fill="#f3c008" />
<rect x="311.00" y="664.00" width="1.20" height="11.90" fill="#c1ed04" />
<rect x="311.00" y="568.00" width="1.20" height="16.30" fill="#1039f7" />
<rect x="311.00" y="530.00" width="1.20" height="25.30" fill="#0f13d0" />
<rect x="312.20" y="675.60" width="1.20" height="4.97" fill="#deeb0f" />
<rect x="312.20" y="680.27" width="1.20" height="4.97" fill="#e8dc0a" />
<rect x="312.20" y="684.93" width="1.20" height="4.97" fill="#f3c008" />
<rect x="312.20" y="530.00" width="1.20" height="25.30" fill="#0f14d1" />
<rect x="313.40" y="675.60" width="1.20" height="4.97" fill="#deeb0f" />
<rect x="313.40" y="680.27" width="1.20" height="4.97" fill="#e8dc0a" />
<rect x="313.40" y="684.93" width="1.20" height="4.97" fill="#f3c008" />
<rect x="313.40" y="630.00" width="1.20" height="17.30" fill="#2dcb5b" />
<rect x="314.60" y="675.60" width="1.20" height="4.97" fill="#deeb0f" />
<rect x="314.60" y="680.27" width="1.20" height="4.97" fill="#e8dc0a" />
<rect x="314.60" y="684.93" width="1.20" height="4.97" fill="#f3c008" />
<rect x="314.60" y="618.00" width="1.20" height="12.30" fill="#03a6a1" />
<rect x="314.60" y="605.00" width="1.20" height="13.30" fill="#009ab5" />
<rect x="314.60" y="555.00" width="1.20" height="13.30" fill="#1134f6" />
<rect x="314.60" y="530.00" width="1.20" height="25.30" fill="#111de2" />
<rect x="315.80" y="530.00" width="1.20" height="25.30" fill="#030491" />
<rect x="317.00" y="675.60" width="1.20" height="4.97" fill="#96e628" />
<rect x="317.00" y="680.27" width="1.20" height="4.97" fill="#e8dc0a" />
<rect x="317.00" y="684.93" width="1.20" height="4.97" fill="#f3c008" />
<rect x="317.00" y="664.00" width="1.20" height="11.90" fill="#d8e301" />
<rect x="317.00" y="647.00" width="1.20" height="17.30" fill="#aaed0f" />
<rect x="317.00" y="584.00" width="1.20" height="21.30" fill="#036ee1" />
<rect x="317.00" y="568.00" width="1.20" height="16.30" fill="#0a54fa" />
<rect x="319.40" y="675.60" width="1.20" height="4.97" fill="#deeb0f" />
<rect x="319.40" y="680.27" width="1.20" height="4.97" fill="#e8dc0a" />
<rect x="319.40" y="684.93" width="1.20" height="4.97" fill="#f3c008" />
<rect x="319.40" y="630.00" width="1.20" height="17.30" fill="#29c960" />
<rect x="320.60" y="675.60" width="1.20" height="4.97" fill="#deeb0f" />
<rect x="320.60" y="680.27" width="1.20" height="4.97" fill="#e8dc0a" />
<rect x="320.60" y="684.93" width="1.20" height="4.97" fill="#f3c008" />
<rect x="320.60" y="568.00" width="1.20" height="16.30" fill="#0a53fa" />
<rect x="321.80" y="675.60" width="1.20" height="4.97" fill="#96e628" />
<rect x="321.80" y="680.27" width="1.20" height="4.97" fill="#e8dc0a" />
<rect x="321.80" y="684.93" width="1.20" height="4.97" fill="#f3c008" />
<rect x="324.20" y="675.60" width="1.20" height="4.97" fill="#deeb0f" />
<rect x="324.20" y="680.27" width="1.20" height="4.97" fill="#e8dc0a" />
<rect x="324.20" y="684.93" width="1.20" height="4.97" fill="#f3c008" />
<rect x="324.20" y="664.00" width="1.20" height="11.90" fill="#bbef05" />
<rect x="324.20" y="530.00" width="1.20" height="25.30" fill="#1017d7" />
<rect x="325.40" y="630.00" width="1.20" height="17.30" fill="#2bca5e" />
<rect x="326.60" y="530.00" width="1.20" height="25.30" fill="#1222ea" />
<rect x="326.60" y="522.50" width="1.20" height="7.80" fill="#0a0eb8" />
<rect x="329.00" y="675.60" width="1.20" height="4.97" fill="#96e628" />
<rect x="329.00" y="680.27" width="1.20" height="4.97" fill="#e8dc0a" />
<rect x="329.00" y="684.93" width="1.20" height="4.97" fill="#f3c008" />
<rect x="331.40" y="530.00" width="1.20" height="25.30" fill="#1017d7" />
<rect x="332.60" y="664.00" width="1.20" height="11.90" fill="#c0ed04" />
<rect x="332.60" y="618.00" width="1.20" height="12.30" fill="#0fb77c" />
<rect x="336.20" y="675.60" width="1.20" height="4.97" fill="#96e628" />
<rect x="336.20" y="680.27" width="1.20" height="4.97" fill="#e8dc0a" />
<rect x="336.20" y="684.93" width="1.20" height="4.97" fill="#f3c008" />
<rect x="336.20" y="664.00" width="1.20" height="11.90" fill="#cae903" />
<rect x="336.20" y="647.00" width="1.20" height="17.30" fill="#a8ed10" />
<rect x="338.60" y="675.60" width="1.20" height="4.97" fill="#deeb0f" />
<rect x="338.60" y="680.27" width="1.20" height="4.97" fill="#e8dc0a" />
<rect x="338.60" y="684.93" width="1.20" height="4.97" fill="#f3c008" />
<rect x="338.60" y="664.00" width="1.20" height="11.90" fill="#bbef05" />
<rect x="338.60" y="647.00" width="1.20" height="17.30" fill="#a2ec14" />
<rect x="338.60" y="618.00" width="1.20" height="12.30" fill="#0eb77e" />
<rect x="339.80" y="675.60" width="1.20" height="4.97" fill="#deeb0f" />
<rect x="339.80" y="680.27" width="1.20" height="4.97" fill="#e8dc0a" />
<rect x="339.80" y="684.93" width="1.20" height="4.97" fill="#f3c008" />
<rect x="339.80" y="664.00" width="1.20" height="11.90" fill="#c5eb03" />
<rect x="339.80" y="530.00" width="1.20" height="25.30" fill="#0f15d3" />
<rect x="341.00" y="675.60" width="1.20" height="4.97" fill="#deeb0f" />
<rect x="341.00" y="680.27" width="1.20" height="4.97" fill="#e8dc0a" />
<rect x="341.00" y="684.93" width="1.20" height="4.97" fill="#f3c008" />
<rect x="341.00" y="664.00" width="1.20" height="11.90" fill="#bfed04" />
<rect x="341.00" y="647.00" width="1.20" height="17.30" fill="#9aea1a" />
<rect x="341.00" y="618.00" width="1.20" height="12.30" fill="#0cb580" />
<rect x="341.00" y="605.00" width="1.20" height="13.30" fill="#02a3a8" />
<rect x="341.00" y="584.00" width="1.20" height="21.30" fill="#0081ce" />
<rect x="341.00" y="530.00" width="1.20" height="25.30" fill="#1016d6" />
<rect x="342.20" y="675.60" width="1.20" height="4.97" fill="#deeb0f" />
<rect x="342.20" y="680.27" width="1.20" height="4.97" fill="#e8dc0a" />
<rect x="342.20" y="684.93" width="1.20" height="4.97" fill="#f3c008" />
<rect x="342.20" y="530.00" width="1.20" height="25.30" fill="#00007b" />
<rect x="343.40" y="675.60" width="1.20" height="4.97" fill="#96e628" />
<rect x="343.40" y="680.27" width="1.20" height="4.97" fill="#e8dc0a" />
<rect x="343.40" y="684.93" width="1.20" height="4.97" fill="#f3c008" />
<rect x="344.60" y="675.60" width="1.20" height="4.97" fill="#deeb0f" />
<rect x="344.60" y="680.27" width="1.20" height="4.97" fill="#e8dc0a" />
<rect x="344.60" y="684.93" width="1.20" height="4.97" fill="#f3c008" />
<rect x="344.60" y="664.00" width="1.20" height="11.90" fill="#c9e903" />
<rect x="344.60" y="568.00" width="1.20" height="16.30" fill="#0c4df9" />
<rect x="344.60" y="555.00" width="1.20" height="13.30" fill="#0e42f8" />
<rect x="344.60" y="530.00" width="1.20" height="25.30" fill="#0f15d4" />
<rect x="345.80" y="675.60" width="1.20" height="4.97" fill="#96e628" />
<rect x="345.80" y="680.27" width="1.20" height="4.97" fill="#e8dc0a" />
<rect x="345.80" y="684.93" width="1.20" height="4.97" fill="#f3c008" />
<rect x="345.80" y="584.00" width="1.20" height="21.30" fill="#0664eb" />
<rect x="345.80" y="530.00" width="1.20" height="25.30" fill="#0f14d1" />
<rect x="345.80" y="522.50" width="1.20" height="7.80" fill="#111de2" />
<rect x="347.00" y="675.60" width="1.20" height="4.97" fill="#96e628" />
<rect x="347.00" y="680.27" width="1.20" height="4.97" fill="#e8dc0a" />
<rect x="347.00" y="684.93" width="1.20" height="4.97" fill="#f3c008" />
<rect x="348.20" y="675.60" width="1.20" height="4.97" fill="#96e628" />
<rect x="348.20" y="680.27" width="1.20" height="4.97" fill="#e8dc0a" />
<rect x="348.20" y="684.93" width="1.20" height="4.97" fill="#f3c008" />
<rect x="348.20" y="630.00" width="1.20" height="17.30" fill="#43d747" />
<rect x="348.20" y="530.00" width="1.20" height="25.30" fill="#040596" />
<rect x="349.40" y="675.60" width="1.20" height="4.97" fill="#deeb0f" />
<rect x="349.40" y="680.27" width="1.20" height="4.97" fill="#e8dc0a" />
<rect x="349.40" y="684.93" width="1.20" height="4.97" fill="#f3c008" />
<rect x="349.40" y="664.00" width="1.20" height="11.90" fill="#d9e200" />
<rect x="349.40" y="647.00" width="1.20" height="17.30" fill="#97ea1c" />
<rect x="350.60" y="675.60" width="1.20" height="4.97" fill="#deeb0f" />
<rect x="350.60" y="680.27" width="1.20" height="4.97" fill="#e8dc0a" />
<rect x="350.60" y="684.93" width="1.20" height="4.97" fill="#f3c008" />
<rect x="351.80" y="675.60" width="1.20" height="4.97" fill="#deeb0f" />
<rect x="351.80" y="680.27" width="1.20" height="4.97" fill="#e8dc0a" />
<rect x="351.80" y="684.93" width="1.20" height="4.97" fill="#f3c008" />
<rect x="351.80" y="605.00" width="1.20" height="13.30" fill="#0088c7" />
<rect x="351.80" y="584.00" width="1.20" height="21.30" fill="#0078d7" />
<rect x="351.80" y="568.00" width="1.20" height="16.30" fill="#0a56f9" />
<rect x="351.80" y="555.00" width="1.20" height="13.30" fill="#111ee3" />
<rect x="351.80" y="530.00" width="1.20" height="25.30" fill="#030491" />
<rect x="353.00" y="675.60" width="1.20" height="4.97" fill="#deeb0f" />
<rect x="353.00" y="680.27" width="1.20" height="4.97" fill="#e8dc0a" />
<rect x="353.00" y="684.93" width="1.20" height="4.97" fill="#f3c008" />
<rect x="353.00" y="568.00" width="1.20" height="16.30" fill="#1233f6" />
<rect x="353.00" y="555.00" width="1.20" height="13.30" fill="#1221e9" />
<rect x="353.00" y="530.00" width="1.20" height="25.30" fill="#090bb0" />
<rect x="354.20" y="675.60" width="1.20" height="4.97" fill="#deeb0f" />
<rect x="354.20" y="680.27" width="1.20" height="4.97" fill="#e8dc0a" />
<rect x="354.20" y="684.93" width="1.20" height="4.97" fill="#f3c008" />
<rect x="354.20" y="630.00" width="1.20" height="17.30" fill="#2fcd59" />
<rect x="354.20" y="618.00" width="1.20" height="12.30" fill="#10b87b" />
<rect x="355.40" y="584.00" width="1.20" height="21.30" fill="#0079d6" />
<rect x="355.40" y="568.00" width="1.20" height="16.30" fill="#0b50f9" />
<rect x="355.40" y="555.00" width="1.20" height="13.30" fill="#122ff6" />
<rect x="356.60" y="675.60" width="1.20" height="4.97" fill="#deeb0f" />
<rect x="356.60" y="680.27" width="1.20" height="4.97" fill="#e8dc0a" />
<rect x="356.60" y="684.93" width="1.20" height="4.97" fill="#f3c008" />
<rect x="356.60" y="647.00" width="1.20" height="17.30" fill="#8fe921" />
<rect x="356.60" y="568.00" width="1.20" height="16.30" fill="#1134f6" />
<rect x="357.80" y="618.00" width="1.20" height="12.30" fill="#06ad92" />
<rect x="357.80" y="555.00" width="1.20" height="13.30" fill="#1221e8" />
<rect x="359.00" y="605.00" width="1.20" height="13.30" fill="#009bb4" />
<rect x="359.00" y="584.00" width="1.20" height="21.30" fill="#007dd2" />
<rect x="359.00" y="555.00" width="1.20" height="13.30" fill="#1427f4" />
<rect x="359.00" y="530.00" width="1.20" height="25.30" fill="#0b0ebb" />
<rect x="360.20" y="675.60" width="1.20" height="4.97" fill="#deeb0f" />
<rect x="360.20" y="680.27" width="1.20" height="4.97" fill="#e8dc0a" />
<rect x="360.20" y="684.93" width="1.20" height="4.97" fill="#f3c008" />
<rect x="360.20" y="618.00" width="1.20" height="12.30" fill="#05ab97" />
<rect x="360.20" y="568.00" width="1.20" height="16.30" fill="#0f3ef7" />
<rect x="360.20" y="555.00" width="1.20" height="13.30" fill="#1221e8" />
<rect x="360.20" y="530.00" width="1.20" height="25.30" fill="#111ce0" />
<rect x="361.40" y="675.60" width="1.20" height="4.97" fill="#deeb0f" />
<rect x="361.40" y="680.27" width="1.20" height="4.97" fill="#e8dc0a" />
<rect x="361.40" y="684.93" width="1.20" height="4.97" fill="#f3c008" />
<rect x="362.60" y="675.60" width="1.20" height="4.97" fill="#96e628" />
<rect x="362.60" y="680.27" width="1.20" height="4.97" fill="#e8dc0a" />
<rect x="362.60" y="684.93" width="1.20" height="4.97" fill="#f3c008" />
<rect x="362.60" y="664.00" width="1.20" height="11.90" fill="#c8e903" />
<rect x="362.60" y="530.00" width="1.20" height="25.30" fill="#132ef6" />
<rect x="363.80" y="618.00" width="1.20" height="12.30" fill="#07ae8f" />
<rect x="363.80" y="584.00" width="1.20" height="21.30" fill="#075ff0" />
<rect x="363.80" y="568.00" width="1.20" height="16.30" fill="#103af7" />
<rect x="365.00" y="675.60" width="1.20" height="4.97" fill="#deeb0f" />
<rect x="365.00" y="680.27" width="1.20" height="4.97" fill="#e8dc0a" />
<rect x="365.00" y="684.93" width="1.20" height="4.97" fill="#f3c008" />
<rect x="366.20" y="675.60" width="1.20" height="4.97" fill="#deeb0f" />
<rect x="366.20" y="680.27" width="1.20" height="4.97" fill="#e8dc0a" />
<rect x="366.20" y="684.93" width="1.20" height="4.97" fill="#f3c008" />
<rect x="366.20" y="664.00" width="1.20" height="11.90" fill="#d8e301" />
<rect x="366.20" y="530.00" width="1.20" height="25.30" fill="#1221e8" />
<rect x="366.20" y="522.50" width="1.20" height="7.80" fill="#111bde" />
<rect x="367.40" y="675.60" width="1.20" height="4.97" fill="#deeb0f" />
<rect x="367.40" y="680.27" width="1.20" height="4.97" fill="#e8dc0a" />
<rect x="367.40" y="684.93" width="1.20" height="4.97" fill="#f3c008" />
<rect x="367.40" y="605.00" width="1.20" height="13.30" fill="#00a0ae" />
<rect x="368.60" y="675.60" width="1.20" height="4.97" fill="#deeb0f" />
<rect x="368.60" y="680.27" width="1.20" height="4.97" fill="#e8dc0a" />
<rect x="368.60" y="684.93" width="1.20" height="4.97" fill="#f3c008" />
<rect x="368.60" y="555.00" width="1.20" height="13.30" fill="#1039f7" />
<rect x="369.80" y="675.60" width="1.20" height="4.97" fill="#96e628" />
<rect x="369.80" y="680.27" width="1.20" height="4.97" fill="#e8dc0a" />
<rect x="369.80" y="684.93" width="1.20" height="4.97" fill="#f3c008" />
<rect x="371.00" y="675.60" width="1.20" height="4.97" fill="#96e628" />
<rect x="371.00" y="680.27" width="1.20" height="4.97" fill="#e8dc0a" />
<rect x="371.00" y="684.93" width="1.20" height="4.97" fill="#f3c008" />
<rect x="371.00" y="555.00" width="1.20" height="13.30" fill="#121fe5" />
<rect x="372.20" y="514.00" width="1.20" height="8.80" fill="#1016d6" />
<rect x="373.40" y="675.60" width="1.20" height="4.97" fill="#96e628" />
<rect x="373.40" y="680.27" width="1.20" height="4.97" fill="#e8dc0a" />
<rect x="373.40" y="684.93" width="1.20" height="4.97" fill="#f3c008" />
<rect x="373.40" y="664.00" width="1.20" height="11.90" fill="#beee04" />
<rect x="374.60" y="675.60" width="1.20" height="4.97" fill="#deeb0f" />
<rect x="374.60" y="680.27" width="1.20" height="4.97" fill="#e8dc0a" />
<rect x="374.60" y="684.93" width="1.20" height="4.97" fill="#f3c008" />
<rect x="374.60" y="530.00" width="1.20" height="25.30" fill="#02038d" />
<rect x="375.80" y="568.00" width="1.20" height="16.30" fill="#0d47f8" />
<rect x="377.00" y="605.00" width="1.20" height="13.30" fill="#01a3a9" />
<rect x="377.00" y="584.00" width="1.20" height="21.30" fill="#007ed1" />
<rect x="378.20" y="675.60" width="1.20" height="4.97" fill="#deeb0f" />
<rect x="378.20" y="680.27" width="1.20" height="4.97" fill="#e8dc0a" />
<rect x="378.20" y="684.93" width="1.20" height="4.97" fill="#f3c008" />
<rect x="378.20" y="664.00" width="1.20" height="11.90" fill="#c8ea03" />
<rect x="378.20" y="568.00" width="1.20" height="16.30" fill="#0c4ef9" />
<rect x="378.20" y="555.00" width="1.20" height="13.30" fill="#0f41f8" />
<rect x="378.20" y="530.00" width="1.20" height="25.30" fill="#1016d6" />
<rect x="379.40" y="630.00" width="1.20" height="17.30" fill="#40d649" />
<rect x="379.40" y="618.00" width="1.20" height="12.30" fill="#06ad93" />
<rect x="379.40" y="555.00" width="1.20" height="13.30" fill="#1135f6" />
<rect x="379.40" y="530.00" width="1.20" height="25.30" fill="#0f15d4" />
<rect x="379.40" y="522.50" width="1.20" height="7.80" fill="#0c10c2" />
<rect x="380.60" y="555.00" width="1.20" height="13.30" fill="#1323ec" />
<rect x="381.80" y="675.60" width="1.20" height="4.97" fill="#deeb0f" />
<rect x="381.80" y="680.27" width="1.20" height="4.97" fill="#e8dc0a" />
<rect x="381.80" y="684.93" width="1.20" height="4.97" fill="#f3c008" />
<rect x="383.00" y="530.00" width="1.20" height="25.30" fill="#0b0fbe" />
<rect x="384.20" y="555.00" width="1.20" height="13.30" fill="#1136f7" />
<rect x="384.20" y="530.00" width="1.20" height="25.30" fill="#1325f0" />
<rect x="386.60" y="530.00" width="1.20" height="25.30" fill="#05079f" />
<rect x="387.80" y="630.00" width="1.20" height="17.30" fill="#2ecc5a" />
<rect x="390.20" y="522.50" width="1.20" height="7.80" fill="#111add" />
<rect x="392.60" y="675.60" width="1.20" height="4.97" fill="#deeb0f" />
<rect x="392.60" y="680.27" width="1.20" height="4.97" fill="#e8dc0a" />
<rect x="392.60" y="684.93" width="1.20" height="4.97" fill="#f3c008" />
<rect x="392.60" y="664.00" width="1.20" height="11.90" fill="#c0ed04" />
<rect x="392.60" y="630.00" width="1.20" height="17.30" fill="#43d748" />
<rect x="392.60" y="530.00" width="1.20" height="25.30" fill="#0608a3" />
<rect x="393.80" y="675.60" width="1.20" height="4.97" fill="#deeb0f" />
<rect x="393.80" y="680.27" width="1.20" height="4.97" fill="#e8dc0a" />
<rect x="393.80" y="684.93" width="1.20" height="4.97" fill="#f3c008" />
<rect x="393.80" y="664.00" width="1.20" height="11.90" fill="#c2ec04" />
<rect x="393.80" y="530.00" width="1.20" height="25.30" fill="#0d11c6" />
<rect x="395.00" y="675.60" width="1.20" height="4.97" fill="#deeb0f" />
<rect x="395.00" y="680.27" width="1.20" height="4.97" fill="#e8dc0a" />
<rect x="395.00" y="684.93" width="1.20" height="4.97" fill="#f3c008" />
<rect x="395.00" y="664.00" width="1.20" height="11.90" fill="#beee04" />
<rect x="395.00" y="630.00" width="1.20" height="17.30" fill="#31ce57" />
<rect x="395.00" y="618.00" width="1.20" height="12.30" fill="#03a7a0" />
<rect x="395.00" y="568.00" width="1.20" height="16.30" fill="#103bf7" />
<rect x="395.00" y="555.00" width="1.20" height="13.30" fill="#1137f7" />
<rect x="395.00" y="530.00" width="1.20" height="25.30" fill="#1019da" />
<rect x="395.00" y="522.50" width="1.20" height="7.80" fill="#1323ec" />
<rect x="402.20" y="530.00" width="1.20" height="25.30" fill="#0f14d3" />
<rect x="403.40" y="530.00" width="1.20" height="25.30" fill="#1427f3" />
<rect x="404.60" y="618.00" width="1.20" height="12.30" fill="#04a99b" />
<rect x="404.60" y="530.00" width="1.20" height="25.30" fill="#0d12c9" />
<rect x="407.00" y="555.00" width="1.20" height="13.30" fill="#132ff6" />
<rect x="407.00" y="530.00" width="1.20" height="25.30" fill="#1221e9" />
<rect x="407.00" y="522.50" width="1.20" height="7.80" fill="#0f14d2" />
<rect x="410.60" y="675.60" width="1.20" height="4.97" fill="#deeb0f" />
<rect x="410.60" y="680.27" width="1.20" height="4.97" fill="#e8dc0a" />
<rect x="410.60" y="684.93" width="1.20" height="4.97" fill="#f3c008" />
<rect x="410.60" y="618.00" width="1.20" height="12.30" fill="#07af8e" />
<rect x="410.60" y="530.00" width="1.20" height="25.30" fill="#0e13ce" />
<rect x="411.80" y="630.00" width="1.20" height="17.30" fill="#31ce57" />
<rect x="411.80" y="530.00" width="1.20" height="25.30" fill="#040597" />
<rect x="413.00" y="675.60" width="1.20" height="4.97" fill="#96e628" />
<rect x="413.00" y="680.27" width="1.20" height="4.97" fill="#e8dc0a" />
<rect x="413.00" y="684.93" width="1.20" height="4.97" fill="#f3c008" />
<rect x="414.20" y="675.60" width="1.20" height="4.97" fill="#deeb0f" />
<rect x="414.20" y="680.27" width="1.20" height="4.97" fill="#e8dc0a" />
<rect x="414.20" y="684.93" width="1.20" height="4.97" fill="#f3c008" />
<rect x="414.20" y="664.00" width="1.20" height="11.90" fill="#bbef05" />
<rect x="414.20" y="647.00" width="1.20" height="17.30" fill="#8be824" />
<rect x="415.40" y="675.60" width="1.20" height="4.97" fill="#deeb0f" />
<rect x="415.40" y="680.27" width="1.20" height="4.97" fill="#e8dc0a" />
<rect x="415.40" y="684.93" width="1.20" height="4.97" fill="#f3c008" />
<rect x="415.40" y="530.00" width="1.20" height="25.30" fill="#05079c" />
<rect x="416.60" y="555.00" width="1.20" height="13.30" fill="#1426f2" />
<rect x="416.60" y="530.00" width="1.20" height="25.30" fill="#1019da" />
<rect x="416.60" y="522.50" width="1.20" height="7.80" fill="#1220e6" />
<rect x="419.00" y="675.60" width="1.20" height="4.97" fill="#96e628" />
<rect x="419.00" y="680.27" width="1.20" height="4.97" fill="#e8dc0a" />
<rect x="419.00" y="684.93" width="1.20" height="4.97" fill="#f3c008" />
<rect x="419.00" y="664.00" width="1.20" height="11.90" fill="#cbe802" />
<rect x="419.00" y="584.00" width="1.20" height="21.30" fill="#0565ea" />
<rect x="419.00" y="568.00" width="1.20" height="16.30" fill="#0a53fa" />
<rect x="419.00" y="555.00" width="1.20" height="13.30" fill="#0f3ef7" />
<rect x="419.00" y="530.00" width="1.20" height="25.30" fill="#111bdf" />
<rect x="419.00" y="522.50" width="1.20" height="7.80" fill="#1222ea" />
<rect x="420.20" y="675.60" width="1.20" height="4.97" fill="#96e628" />
<rect x="420.20" y="680.27" width="1.20" height="4.97" fill="#e8dc0a" />
<rect x="420.20" y="684.93" width="1.20" height="4.97" fill="#f3c008" />
<rect x="420.20" y="664.00" width="1.20" height="11.90" fill="#bbef05" />
<rect x="420.20" y="605.00" width="1.20" height="13.30" fill="#0087c8" />
<rect x="421.40" y="584.00" width="1.20" height="21.30" fill="#0565ea" />
<rect x="421.40" y="568.00" width="1.20" height="16.30" fill="#0e44f8" />
<rect x="421.40" y="555.00" width="1.20" height="13.30" fill="#1135f6" />
<rect x="422.60" y="618.00" width="1.20" height="12.30" fill="#08b08b" />
<rect x="422.60" y="605.00" width="1.20" height="13.30" fill="#0093bc" />
<rect x="422.60" y="584.00" width="1.20" height="21.30" fill="#0272dd" />
<rect x="422.60" y="530.00" width="1.20" height="25.30" fill="#0f16d5" />
<rect x="423.80" y="605.00" width="1.20" height="13.30" fill="#009bb4" />
<rect x="423.80" y="530.00" width="1.20" height="25.30" fill="#0c10c3" />
<rect x="425.00" y="675.60" width="1.20" height="4.97" fill="#deeb0f" />
<rect x="425.00" y="680.27" width="1.20" height="4.97" fill="#e8dc0a" />
<rect x="425.00" y="684.93" width="1.20" height="4.97" fill="#f3c008" />
<rect x="426.20" y="675.60" width="1.20" height="4.97" fill="#96e628" />
<rect x="426.20" y="680.27" width="1.20" height="4.97" fill="#e8dc0a" />
<rect x="426.20" y="684.93" width="1.20" height="4.97" fill="#f3c008" />
<rect x="426.20" y="664.00" width="1.20" height="11.90" fill="#d4e401" />
<rect x="426.20" y="647.00" width="1.20" height="17.30" fill="#a4ec13" />
<rect x="426.20" y="618.00" width="1.20" height="12.30" fill="#0cb580" />
<rect x="427.40" y="675.60" width="1.20" height="4.97" fill="#96e628" />
<rect x="427.40" y="680.27" width="1.20" height="4.97" fill="#e8dc0a" />
<rect x="427.40" y="684.93" width="1.20" height="4.97" fill="#f3c008" />
<rect x="428.60" y="568.00" width="1.20" height="16.30" fill="#0958f7" />
<rect x="428.60" y="555.00" width="1.20" height="13.30" fill="#122ff6" />
<rect x="429.80" y="568.00" width="1.20" height="16.30" fill="#0958f7" />
<rect x="429.80" y="555.00" width="1.20" height="13.30" fill="#103bf7" />
<rect x="433.40" y="675.60" width="1.20" height="4.97" fill="#deeb0f" />
<rect x="433.40" y="680.27" width="1.20" height="4.97" fill="#e8dc0a" />
<rect x="433.40" y="684.93" width="1.20" height="4.97" fill="#f3c008" />
<rect x="433.40" y="664.00" width="1.20" height="11.90" fill="#c3ec04" />
<rect x="434.60" y="675.60" width="1.20" height="4.97" fill="#96e628" />
<rect x="434.60" y="680.27" width="1.20" height="4.97" fill="#e8dc0a" />
<rect x="434.60" y="684.93" width="1.20" height="4.97" fill="#f3c008" />
<rect x="434.60" y="664.00" width="1.20" height="11.90" fill="#c8ea03" />
<rect x="434.60" y="647.00" width="1.20" height="17.30" fill="#8fe921" />
<rect x="434.60" y="568.00" width="1.20" height="16.30" fill="#0e41f8" />
<rect x="434.60" y="530.00" width="1.20" height="25.30" fill="#111ee3" />
<rect x="435.80" y="675.60" width="1.20" height="4.97" fill="#deeb0f" />
<rect x="435.80" y="680.27" width="1.20" height="4.97" fill="#e8dc0a" />
<rect x="435.80" y="684.93" width="1.20" height="4.97" fill="#f3c008" />
<rect x="435.80" y="664.00" width="1.20" height="11.90" fill="#c3ec04" />
<rect x="435.80" y="647.00" width="1.20" height="17.30" fill="#83e628" />
<rect x="435.80" y="630.00" width="1.20" height="17.30" fill="#34d054" />
<rect x="437.00" y="530.00" width="1.20" height="25.30" fill="#1019da" />
<rect x="437.00" y="522.50" width="1.20" height="7.80" fill="#111de3" />
<rect x="438.20" y="675.60" width="1.20" height="4.97" fill="#deeb0f" />
<rect x="438.20" y="680.27" width="1.20" height="4.97" fill="#e8dc0a" />
<rect x="438.20" y="684.93" width="1.20" height="4.97" fill="#f3c008" />
<rect x="438.20" y="664.00" width="1.20" height="11.90" fill="#d1e602" />
<rect x="438.20" y="630.00" width="1.20" height="17.30" fill="#2ecc5b" />
<rect x="438.20" y="584.00" width="1.20" height="21.30" fill="#007ed1" />
<rect x="439.40" y="675.60" width="1.20" height="4.97" fill="#96e628" />
<rect x="439.40" y="680.27" width="1.20" height="4.97" fill="#e8dc0a" />
<rect x="439.40" y="684.93" width="1.20" height="4.97" fill="#f3c008" />
<rect x="439.40" y="664.00" width="1.20" height="11.90" fill="#dbe100" />
<rect x="440.60" y="675.60" width="1.20" height="4.97" fill="#96e628" />
<rect x="440.60" y="680.27" width="1.20" height="4.97" fill="#e8dc0a" />
<rect x="440.60" y="684.93" width="1.20" height="4.97" fill="#f3c008" />
<rect x="440.60" y="664.00" width="1.20" height="11.90" fill="#c4eb03" />
<rect x="441.80" y="675.60" width="1.20" height="4.97" fill="#deeb0f" />
<rect x="441.80" y="680.27" width="1.20" height="4.97" fill="#e8dc0a" />
<rect x="441.80" y="684.93" width="1.20" height="4.97" fill="#f3c008" />
<rect x="441.80" y="584.00" width="1.20" height="21.30" fill="#036de2" />
<rect x="441.80" y="568.00" width="1.20" height="16.30" fill="#0b50f9" />
<rect x="441.80" y="555.00" width="1.20" height="13.30" fill="#1428f4" />
<rect x="443.00" y="675.60" width="1.20" height="4.97" fill="#deeb0f" />
<rect x="443.00" y="680.27" width="1.20" height="4.97" fill="#e8dc0a" />
<rect x="443.00" y="684.93" width="1.20" height="4.97" fill="#f3c008" />
<rect x="444.20" y="530.00" width="1.20" height="25.30" fill="#1222ea" />
<rect x="445.40" y="555.00" width="1.20" height="13.30" fill="#121ee4" />
<rect x="445.40" y="530.00" width="1.20" height="25.30" fill="#1220e7" />
<rect x="445.40" y="522.50" width="1.20" height="7.80" fill="#111ce0" />
<rect x="446.60" y="675.60" width="1.20" height="4.97" fill="#deeb0f" />
<rect x="446.60" y="680.27" width="1.20" height="4.97" fill="#e8dc0a" />
<rect x="446.60" y="684.93" width="1.20" height="4.97" fill="#f3c008" />
<rect x="446.60" y="664.00" width="1.20" height="11.90" fill="#c3ec04" />
<rect x="446.60" y="647.00" width="1.20" height="17.30" fill="#9beb19" />
<rect x="446.60" y="630.00" width="1.20" height="17.30" fill="#47d846" />
<rect x="446.60" y="618.00" width="1.20" height="12.30" fill="#08b08b" />
<rect x="446.60" y="530.00" width="1.20" height="25.30" fill="#1018d9" />
<rect x="447.80" y="675.60" width="1.20" height="4.97" fill="#deeb0f" />
<rect x="447.80" y="680.27" width="1.20" height="4.97" fill="#e8dc0a" />
<rect x="447.80" y="684.93" width="1.20" height="4.97" fill="#f3c008" />
<rect x="449.00" y="522.50" width="1.20" height="7.80" fill="#101adc" />
<rect x="450.20" y="675.60" width="1.20" height="4.97" fill="#deeb0f" />
<rect x="450.20" y="680.27" width="1.20" height="4.97" fill="#e8dc0a" />
<rect x="450.20" y="684.93" width="1.20" height="4.97" fill="#f3c008" />
<rect x="453.80" y="675.60" width="1.20" height="4.97" fill="#96e628" />
<rect x="453.80" y="680.27" width="1.20" height="4.97" fill="#e8dc0a" />
<rect x="453.80" y="684.93" width="1.20" height="4.97" fill="#f3c008" />
<rect x="453.80" y="568.00" width="1.20" height="16.30" fill="#0e42f8" />
<rect x="453.80" y="555.00" width="1.20" height="13.30" fill="#111ee3" />
<rect x="453.80" y="530.00" width="1.20" height="25.30" fill="#1017d8" />
<rect x="455.00" y="664.00" width="1.20" height="11.90" fill="#d7e301" />
<rect x="456.20" y="675.60" width="1.20" height="4.97" fill="#deeb0f" />
<rect x="456.20" y="680.27" width="1.20" height="4.97" fill="#e8dc0a" />
<rect x="456.20" y="684.93" width="1.20" height="4.97" fill="#f3c008" />
<rect x="456.20" y="630.00" width="1.20" height="17.30" fill="#23c467" />
<rect x="456.20" y="618.00" width="1.20" height="12.30" fill="#06ac94" />
<rect x="456.20" y="530.00" width="1.20" height="25.30" fill="#0f15d4" />
<rect x="456.20" y="522.50" width="1.20" height="7.80" fill="#1016d6" />
<rect x="457.40" y="675.60" width="1.20" height="4.97" fill="#96e628" />
<rect x="457.40" y="680.27" width="1.20" height="4.97" fill="#e8dc0a" />
<rect x="457.40" y="684.93" width="1.20" height="4.97" fill="#f3c008" />
<rect x="459.80" y="675.60" width="1.20" height="4.97" fill="#deeb0f" />
<rect x="459.80" y="680.27" width="1.20" height="4.97" fill="#e8dc0a" />
<rect x="459.80" y="684.93" width="1.20" height="4.97" fill="#f3c008" />
<rect x="459.80" y="555.00" width="1.20" height="13.30" fill="#132df6" />
<rect x="459.80" y="530.00" width="1.20" height="25.30" fill="#101adc" />
<rect x="461.00" y="675.60" width="1.20" height="4.97" fill="#deeb0f" />
<rect x="461.00" y="680.27" width="1.20" height="4.97" fill="#e8dc0a" />
<rect x="461.00" y="684.93" width="1.20" height="4.97" fill="#f3c008" />
<rect x="461.00" y="568.00" width="1.20" height="16.30" fill="#0a54fa" />
<rect x="461.00" y="555.00" width="1.20" height="13.30" fill="#103af7" />
<rect x="461.00" y="530.00" width="1.20" height="25.30" fill="#1019db" />
<rect x="462.20" y="630.00" width="1.20" height="17.30" fill="#27c762" />
<rect x="462.20" y="618.00" width="1.20" height="12.30" fill="#0eb77d" />
<rect x="462.20" y="584.00" width="1.20" height="21.30" fill="#0271de" />
<rect x="462.20" y="568.00" width="1.20" height="16.30" fill="#0b50f9" />
<rect x="462.20" y="555.00" width="1.20" height="13.30" fill="#1137f7" />
<rect x="462.20" y="530.00" width="1.20" height="25.30" fill="#02038f" />
<rect x="463.40" y="530.00" width="1.20" height="25.30" fill="#121fe6" />
<rect x="464.60" y="675.60" width="1.20" height="4.97" fill="#deeb0f" />
<rect x="464.60" y="680.27" width="1.20" height="4.97" fill="#e8dc0a" />
<rect x="464.60" y="684.93" width="1.20" height="4.97" fill="#f3c008" />
<rect x="464.60" y="618.00" width="1.20" height="12.30" fill="#04a89d" />
<rect x="465.80" y="675.60" width="1.20" height="4.97" fill="#deeb0f" />
<rect x="465.80" y="680.27" width="1.20" height="4.97" fill="#e8dc0a" />
<rect x="465.80" y="684.93" width="1.20" height="4.97" fill="#f3c008" />
<rect x="465.80" y="618.00" width="1.20" height="12.30" fill="#07ad91" />
<rect x="467.00" y="675.60" width="1.20" height="4.97" fill="#deeb0f" />
<rect x="467.00" y="680.27" width="1.20" height="4.97" fill="#e8dc0a" />
<rect x="467.00" y="684.93" width="1.20" height="4.97" fill="#f3c008" />
<rect x="468.20" y="675.60" width="1.20" height="4.97" fill="#deeb0f" />
<rect x="468.20" y="680.27" width="1.20" height="4.97" fill="#e8dc0a" />
<rect x="468.20" y="684.93" width="1.20" height="4.97" fill="#f3c008" />
<rect x="469.40" y="647.00" width="1.20" height="17.30" fill="#78e32d" />
<rect x="473.00" y="630.00" width="1.20" height="17.30" fill="#3cd54b" />
<rect x="473.00" y="568.00" width="1.20" height="16.30" fill="#0d46f8" />
<rect x="473.00" y="555.00" width="1.20" height="13.30" fill="#1135f6" />
<rect x="475.40" y="675.60" width="1.20" height="4.97" fill="#deeb0f" />
<rect x="475.40" y="680.27" width="1.20" height="4.97" fill="#e8dc0a" />
<rect x="475.40" y="684.93" width="1.20" height="4.97" fill="#f3c008" />
<rect x="475.40" y="664.00" width="1.20" height="11.90" fill="#bfee04" />
<rect x="475.40" y="530.00" width="1.20" height="25.30" fill="#121ee4" />
<rect x="475.40" y="522.50" width="1.20" height="7.80" fill="#0a0eb8" />
<rect x="476.60" y="584.00" width="1.20" height="21.30" fill="#0174db" />
<rect x="476.60" y="568.00" width="1.20" height="16.30" fill="#122ff6" />
<rect x="476.60" y="555.00" width="1.20" height="13.30" fill="#132df6" />
<rect x="476.60" y="530.00" width="1.20" height="25.30" fill="#1017d7" />
<rect x="477.80" y="675.60" width="1.20" height="4.97" fill="#deeb0f" />
<rect x="477.80" y="680.27" width="1.20" height="4.97" fill="#e8dc0a" />
<rect x="477.80" y="684.93" width="1.20" height="4.97" fill="#f3c008" />
<rect x="477.80" y="605.00" width="1.20" height="13.30" fill="#00a0af" />
<rect x="477.80" y="530.00" width="1.20" height="25.30" fill="#1322eb" />
<rect x="479.00" y="584.00" width="1.20" height="21.30" fill="#007dd2" />
<rect x="479.00" y="568.00" width="1.20" height="16.30" fill="#0a55fa" />
<rect x="480.20" y="675.60" width="1.20" height="4.97" fill="#deeb0f" />
<rect x="480.20" y="680.27" width="1.20" height="4.97" fill="#e8dc0a" />
<rect x="480.20" y="684.93" width="1.20" height="4.97" fill="#f3c008" />
<rect x="480.20" y="584.00" width="1.20" height="21.30" fill="#085ef1" />
<rect x="480.20" y="568.00" width="1.20" height="16.30" fill="#132ff6" />
<rect x="482.60" y="664.00" width="0.40" height="11.90" fill="#bfee04" />
<rect x="482.60" y="568.00" width="0.40" height="16.30" fill="#0959f6" />
<rect x="584.00" y="675.60" width="1.00" height="4.97" fill="#e4e10f" />
<rect x="584.00" y="680.27" width="1.00" height="4.97" fill="#f0b40a" />
<rect x="584.00" y="684.93" width="1.00" height="4.97" fill="#ff8200" />
<rect x="584.00" y="530.00" width="1.00" height="25.30" fill="#0a0db5" />
<rect x="585.00" y="675.60" width="1.00" height="4.97" fill="#96e628" />
<rect x="585.00" y="680.27" width="1.00" height="4.97" fill="#f0b40a" />
<rect x="585.00" y="684.93" width="1.00" height="4.97" fill="#ff8200" />
<rect x="585.00" y="630.00" width="1.00" height="17.30" fill="#24c565" />
<rect x="586.00" y="675.60" width="1.00" height="4.97" fill="#96e628" />
<rect x="586.00" y="680.27" width="1.00" height="4.97" fill="#f0b40a" />
<rect x="586.00" y="684.93" width="1.00" height="4.97" fill="#ff8200" />
<rect x="587.00" y="675.60" width="1.00" height="4.97" fill="#e4e10f" />
<rect x="587.00" y="680.27" width="1.00" height="4.97" fill="#f0b40a" />
<rect x="587.00" y="684.93" width="1.00" height="4.97" fill="#ff8200" />
<rect x="587.00" y="664.00" width="1.00" height="11.90" fill="#dce000" />
<rect x="587.00" y="584.00" width="1.00" height="21.30" fill="#0081ce" />
<rect x="587.00" y="568.00" width="1.00" height="16.30" fill="#0d49f9" />
<rect x="587.00" y="555.00" width="1.00" height="13.30" fill="#1231f6" />
<rect x="587.00" y="530.00" width="1.00" height="25.30" fill="#02038d" />
<rect x="588.00" y="675.60" width="1.00" height="4.97" fill="#96e628" />
<rect x="588.00" y="680.27" width="1.00" height="4.97" fill="#f0b40a" />
<rect x="588.00" y="684.93" width="1.00" height="4.97" fill="#ff8200" />
<rect x="588.00" y="530.00" width="1.00" height="25.30" fill="#1325ef" />
<rect x="590.00" y="530.00" width="1.00" height="25.30" fill="#090cb3" />
<rect x="591.00" y="675.60" width="1.00" height="4.97" fill="#e4e10f" />
<rect x="591.00" y="680.27" width="1.00" height="4.97" fill="#f0b40a" />
<rect x="591.00" y="684.93" width="1.00" height="4.97" fill="#ff8200" />
<rect x="592.00" y="675.60" width="1.00" height="4.97" fill="#96e628" />
<rect x="592.00" y="680.27" width="1.00" height="4.97" fill="#f0b40a" />
<rect x="592.00" y="684.93" width="1.00" height="4.97" fill="#ff8200" />
<rect x="595.00" y="530.00" width="1.00" height="25.30" fill="#090cb0" />
<rect x="596.00" y="530.00" width="1.00" height="25.30" fill="#080baf" />
<rect x="597.00" y="675.60" width="1.00" height="4.97" fill="#e4e10f" />
<rect x="597.00" y="680.27" width="1.00" height="4.97" fill="#f0b40a" />
<rect x="597.00" y="684.93" width="1.00" height="4.97" fill="#ff8200" />
<rect x="597.00" y="530.00" width="1.00" height="25.30" fill="#0f15d3" />
<rect x="600.00" y="675.60" width="1.00" height="4.97" fill="#e4e10f" />
<rect x="600.00" y="680.27" width="1.00" height="4.97" fill="#f0b40a" />
<rect x="600.00" y="684.93" width="1.00" height="4.97" fill="#ff8200" />
<rect x="601.00" y="675.60" width="1.00" height="4.97" fill="#e4e10f" />
<rect x="601.00" y="680.27" width="1.00" height="4.97" fill="#f0b40a" />
<rect x="601.00" y="684.93" width="1.00" height="4.97" fill="#ff8200" />
<rect x="601.00" y="584.00" width="1.00" height="21.30" fill="#0174db" />
<rect x="601.00" y="568.00" width="1.00" height="16.30" fill="#0958f7" />
<rect x="602.00" y="675.60" width="1.00" height="4.97" fill="#96e628" />
<rect x="602.00" y="680.27" width="1.00" height="4.97" fill="#f0b40a" />
<rect x="602.00" y="684.93" width="1.00" height="4.97" fill="#ff8200" />
<rect x="602.00" y="530.00" width="1.00" height="25.30" fill="#111ce0" />
<rect x="603.00" y="675.60" width="1.00" height="4.97" fill="#e4e10f" />
<rect x="603.00" y="680.27" width="1.00" height="4.97" fill="#f0b40a" />
<rect x="603.00" y="684.93" width="1.00" height="4.97" fill="#ff8200" />
<rect x="603.00" y="664.00" width="1.00" height="11.90" fill="#c5eb03" />
<rect x="603.00" y="530.00" width="1.00" height="25.30" fill="#090cb0" />
<rect x="603.00" y="522.50" width="1.00" height="7.80" fill="#1019db" />
<rect x="607.00" y="664.00" width="1.00" height="11.90" fill="#c3ec04" />
<rect x="608.00" y="675.60" width="1.00" height="4.97" fill="#e4e10f" />
<rect x="608.00" y="680.27" width="1.00" height="4.97" fill="#f0b40a" />
<rect x="608.00" y="684.93" width="1.00" height="4.97" fill="#ff8200" />
<rect x="609.00" y="664.00" width="1.00" height="11.90" fill="#cbe802" />
<rect x="609.00" y="555.00" width="1.00" height="13.30" fill="#1230f6" />
<rect x="609.00" y="530.00" width="1.00" height="25.30" fill="#0608a2" />
<rect x="610.00" y="555.00" width="1.00" height="13.30" fill="#1135f6" />
<rect x="610.00" y="530.00" width="1.00" height="25.30" fill="#090cb1" />
<rect x="612.00" y="530.00" width="1.00" height="25.30" fill="#1018d8" />
<rect x="613.00" y="675.60" width="1.00" height="4.97" fill="#e4e10f" />
<rect x="613.00" y="680.27" width="1.00" height="4.97" fill="#f0b40a" />
<rect x="613.00" y="684.93" width="1.00" height="4.97" fill="#ff8200" />
<rect x="613.00" y="530.00" width="1.00" height="25.30" fill="#000184" />
<rect x="614.00" y="675.60" width="1.00" height="4.97" fill="#e4e10f" />
<rect x="614.00" y="680.27" width="1.00" height="4.97" fill="#f0b40a" />
<rect x="614.00" y="684.93" width="1.00" height="4.97" fill="#ff8200" />
<rect x="614.00" y="568.00" width="1.00" height="16.30" fill="#132df6" />
<rect x="616.00" y="618.00" width="1.00" height="12.30" fill="#07ad91" />
<rect x="616.00" y="605.00" width="1.00" height="13.30" fill="#01a3a9" />
<rect x="616.00" y="555.00" width="1.00" height="13.30" fill="#1137f7" />
<rect x="618.00" y="675.60" width="1.00" height="4.97" fill="#e4e10f" />
<rect x="618.00" y="680.27" width="1.00" height="4.97" fill="#f0b40a" />
<rect x="618.00" y="684.93" width="1.00" height="4.97" fill="#ff8200" />
<rect x="618.00" y="555.00" width="1.00" height="13.30" fill="#103cf7" />
<rect x="618.00" y="530.00" width="1.00" height="25.30" fill="#070aa9" />
<rect x="619.00" y="584.00" width="1.00" height="21.30" fill="#0081ce" />
<rect x="619.00" y="568.00" width="1.00" height="16.30" fill="#0d46f8" />
<rect x="619.00" y="555.00" width="1.00" height="13.30" fill="#1231f6" />
<rect x="619.00" y="530.00" width="1.00" height="25.30" fill="#1019da" />
<rect x="620.00" y="530.00" width="1.00" height="25.30" fill="#0e13cd" />
<rect x="620.00" y="522.50" width="1.00" height="7.80" fill="#1019da" />
<rect x="621.00" y="675.60" width="1.00" height="4.97" fill="#e4e10f" />
<rect x="621.00" y="680.27" width="1.00" height="4.97" fill="#f0b40a" />
<rect x="621.00" y="684.93" width="1.00" height="4.97" fill="#ff8200" />
<rect x="622.00" y="675.60" width="1.00" height="4.97" fill="#e4e10f" />
<rect x="622.00" y="680.27" width="1.00" height="4.97" fill="#f0b40a" />
<rect x="622.00" y="684.93" width="1.00" height="4.97" fill="#ff8200" />
<rect x="623.00" y="675.60" width="1.00" height="4.97" fill="#e4e10f" />
<rect x="623.00" y="680.27" width="1.00" height="4.97" fill="#f0b40a" />
<rect x="623.00" y="684.93" width="1.00" height="4.97" fill="#ff8200" />
<rect x="623.00" y="664.00" width="1.00" height="11.90" fill="#bdee04" />
<rect x="623.00" y="530.00" width="1.00" height="25.30" fill="#02038f" />
<rect x="624.00" y="530.00" width="1.00" height="25.30" fill="#0f14d3" />
<rect x="625.00" y="530.00" width="1.00" height="25.30" fill="#000083" />
<rect x="626.00" y="555.00" width="1.00" height="13.30" fill="#1135f6" />
<rect x="626.00" y="530.00" width="1.00" height="25.30" fill="#0d12c9" />
<rect x="627.00" y="568.00" width="1.00" height="16.30" fill="#132ef6" />
<rect x="627.00" y="555.00" width="1.00" height="13.30" fill="#1324ee" />
<rect x="627.00" y="530.00" width="1.00" height="25.30" fill="#0709a6" />
<rect x="627.00" y="522.50" width="1.00" height="7.80" fill="#121fe6" />
<rect x="628.00" y="675.60" width="1.00" height="4.97" fill="#e4e10f" />
<rect x="628.00" y="680.27" width="1.00" height="4.97" fill="#f0b40a" />
<rect x="628.00" y="684.93" width="1.00" height="4.97" fill="#ff8200" />
<rect x="629.00" y="675.60" width="1.00" height="4.97" fill="#e4e10f" />
<rect x="629.00" y="680.27" width="1.00" height="4.97" fill="#f0b40a" />
<rect x="629.00" y="684.93" width="1.00" height="4.97" fill="#ff8200" />
<rect x="630.00" y="568.00" width="1.00" height="16.30" fill="#0b4ff9" />
<rect x="630.00" y="555.00" width="1.00" height="13.30" fill="#132ef6" />
<rect x="630.00" y="530.00" width="1.00" height="25.30" fill="#1019da" />
<rect x="631.00" y="675.60" width="1.00" height="4.97" fill="#e4e10f" />
<rect x="631.00" y="680.27" width="1.00" height="4.97" fill="#f0b40a" />
<rect x="631.00" y="684.93" width="1.00" height="4.97" fill="#ff8200" />
<rect x="632.00" y="675.60" width="1.00" height="4.97" fill="#96e628" />
<rect x="632.00" y="680.27" width="1.00" height="4.97" fill="#f0b40a" />
<rect x="632.00" y="684.93" width="1.00" height="4.97" fill="#ff8200" />
<rect x="633.00" y="675.60" width="1.00" height="4.97" fill="#e4e10f" />
<rect x="633.00" y="680.27" width="1.00" height="4.97" fill="#f0b40a" />
<rect x="633.00" y="684.93" width="1.00" height="4.97" fill="#ff8200" />
<rect x="633.00" y="664.00" width="1.00" height="11.90" fill="#c7ea03" />
<rect x="633.00" y="647.00" width="1.00" height="17.30" fill="#94e91e" />
<rect x="633.00" y="630.00" width="1.00" height="17.30" fill="#35d152" />
<rect x="633.00" y="555.00" width="1.00" height="13.30" fill="#1426f2" />
<rect x="634.00" y="584.00" width="1.00" height="21.30" fill="#0566e9" />
<rect x="635.00" y="675.60" width="1.00" height="4.97" fill="#96e628" />
<rect x="635.00" y="680.27" width="1.00" height="4.97" fill="#f0b40a" />
<rect x="635.00" y="684.93" width="1.00" height="4.97" fill="#ff8200" />
<rect x="636.00" y="675.60" width="1.00" height="4.97" fill="#e4e10f" />
<rect x="636.00" y="680.27" width="1.00" height="4.97" fill="#f0b40a" />
<rect x="636.00" y="684.93" width="1.00" height="4.97" fill="#ff8200" />
<rect x="636.00" y="568.00" width="1.00" height="16.30" fill="#0a53fa" />
<rect x="637.00" y="675.60" width="1.00" height="4.97" fill="#e4e10f" />
<rect x="637.00" y="680.27" width="1.00" height="4.97" fill="#f0b40a" />
<rect x="637.00" y="684.93" width="1.00" height="4.97" fill="#ff8200" />
<rect x="637.00" y="664.00" width="1.00" height="11.90" fill="#d7e301" />
<rect x="638.00" y="675.60" width="1.00" height="4.97" fill="#e4e10f" />
<rect x="638.00" y="680.27" width="1.00" height="4.97" fill="#f0b40a" />
<rect x="638.00" y="684.93" width="1.00" height="4.97" fill="#ff8200" />
<rect x="638.00" y="664.00" width="1.00" height="11.90" fill="#d9e200" />
<rect x="638.00" y="630.00" width="1.00" height="17.30" fill="#2bca5e" />
<rect x="638.00" y="522.50" width="1.00" height="7.80" fill="#1325ef" />
<rect x="639.00" y="630.00" width="1.00" height="17.30" fill="#3dd54b" />
<rect x="639.00" y="618.00" width="1.00" height="12.30" fill="#0ab482" />
<rect x="639.00" y="584.00" width="1.00" height="21.30" fill="#0079d6" />
<rect x="641.00" y="675.60" width="1.00" height="4.97" fill="#e4e10f" />
<rect x="641.00" y="680.27" width="1.00" height="4.97" fill="#f0b40a" />
<rect x="641.00" y="684.93" width="1.00" height="4.97" fill="#ff8200" />
<rect x="641.00" y="530.00" width="1.00" height="25.30" fill="#030494" />
<rect x="642.00" y="675.60" width="1.00" height="4.97" fill="#e4e10f" />
<rect x="642.00" y="680.27" width="1.00" height="4.97" fill="#f0b40a" />
<rect x="642.00" y="684.93" width="1.00" height="4.97" fill="#ff8200" />
<rect x="643.00" y="675.60" width="1.00" height="4.97" fill="#e4e10f" />
<rect x="643.00" y="680.27" width="1.00" height="4.97" fill="#f0b40a" />
<rect x="643.00" y="684.93" width="1.00" height="4.97" fill="#ff8200" />
<rect x="644.00" y="675.60" width="1.00" height="4.97" fill="#e4e10f" />
<rect x="644.00" y="680.27" width="1.00" height="4.97" fill="#f0b40a" />
<rect x="644.00" y="684.93" width="1.00" height="4.97" fill="#ff8200" />
<rect x="645.00" y="675.60" width="1.00" height="4.97" fill="#e4e10f" />
<rect x="645.00" y="680.27" width="1.00" height="4.97" fill="#f0b40a" />
<rect x="645.00" y="684.93" width="1.00" height="4.97" fill="#ff8200" />
<rect x="646.00" y="675.60" width="1.00" height="4.97" fill="#96e628" />
<rect x="646.00" y="680.27" width="1.00" height="4.97" fill="#f0b40a" />
<rect x="646.00" y="684.93" width="1.00" height="4.97" fill="#ff8200" />
<rect x="647.00" y="530.00" width="1.00" height="25.30" fill="#0d11c7" />
<rect x="648.00" y="675.60" width="1.00" height="4.97" fill="#e4e10f" />
<rect x="648.00" y="680.27" width="1.00" height="4.97" fill="#f0b40a" />
<rect x="648.00" y="684.93" width="1.00" height="4.97" fill="#ff8200" />
<rect x="648.00" y="630.00" width="1.00" height="17.30" fill="#3dd54a" />
<rect x="648.00" y="618.00" width="1.00" height="12.30" fill="#08b189" />
<rect x="648.00" y="605.00" width="1.00" height="13.30" fill="#008cc3" />
<rect x="648.00" y="584.00" width="1.00" height="21.30" fill="#036de2" />
<rect x="650.00" y="675.60" width="1.00" height="4.97" fill="#e4e10f" />
<rect x="650.00" y="680.27" width="1.00" height="4.97" fill="#f0b40a" />
<rect x="650.00" y="684.93" width="1.00" height="4.97" fill="#ff8200" />
<rect x="650.00" y="530.00" width="1.00" height="25.30" fill="#0d12c9" />
<rect x="650.00" y="522.50" width="1.00" height="7.80" fill="#0f14d2" />
<rect x="651.00" y="675.60" width="1.00" height="4.97" fill="#e4e10f" />
<rect x="651.00" y="680.27" width="1.00" height="4.97" fill="#f0b40a" />
<rect x="651.00" y="684.93" width="1.00" height="4.97" fill="#ff8200" />
<rect x="653.00" y="530.00" width="1.00" height="25.30" fill="#070aa9" />
<rect x="654.00" y="675.60" width="1.00" height="4.97" fill="#e4e10f" />
<rect x="654.00" y="680.27" width="1.00" height="4.97" fill="#f0b40a" />
<rect x="654.00" y="684.93" width="1.00" height="4.97" fill="#ff8200" />
<rect x="656.00" y="675.60" width="1.00" height="4.97" fill="#e4e10f" />
<rect x="656.00" y="680.27" width="1.00" height="4.97" fill="#f0b40a" />
<rect x="656.00" y="684.93" width="1.00" height="4.97" fill="#ff8200" />
<rect x="656.00" y="664.00" width="1.00" height="11.90" fill="#d8e301" />
<rect x="656.00" y="647.00" width="1.00" height="17.30" fill="#a1ec15" />
<rect x="656.00" y="630.00" width="1.00" height="17.30" fill="#46d746" />
<rect x="656.00" y="605.00" width="1.00" height="13.30" fill="#009fb0" />
<rect x="656.00" y="530.00" width="1.00" height="25.30" fill="#111bde" />
<rect x="657.00" y="675.60" width="1.00" height="4.97" fill="#e4e10f" />
<rect x="657.00" y="680.27" width="1.00" height="4.97" fill="#f0b40a" />
<rect x="657.00" y="684.93" width="1.00" height="4.97" fill="#ff8200" />
<rect x="657.00" y="664.00" width="1.00" height="11.90" fill="#c9e903" />
<rect x="657.00" y="647.00" width="1.00" height="17.30" fill="#8ae724" />
<rect x="657.00" y="568.00" width="1.00" height="16.30" fill="#0957f8" />
<rect x="657.00" y="555.00" width="1.00" height="13.30" fill="#1135f6" />
<rect x="657.00" y="522.50" width="1.00" height="7.80" fill="#121fe5" />
<rect x="658.00" y="675.60" width="1.00" height="4.97" fill="#e4e10f" />
<rect x="658.00" y="680.27" width="1.00" height="4.97" fill="#f0b40a" />
<rect x="658.00" y="684.93" width="1.00" height="4.97" fill="#ff8200" />
<rect x="659.00" y="675.60" width="1.00" height="4.97" fill="#96e628" />
<rect x="659.00" y="680.27" width="1.00" height="4.97" fill="#f0b40a" />
<rect x="659.00" y="684.93" width="1.00" height="4.97" fill="#ff8200" />
<rect x="660.00" y="675.60" width="1.00" height="4.97" fill="#e4e10f" />
<rect x="660.00" y="680.27" width="1.00" height="4.97" fill="#f0b40a" />
<rect x="660.00" y="684.93" width="1.00" height="4.97" fill="#ff8200" />
<rect x="660.00" y="664.00" width="1.00" height="11.90" fill="#c2ec04" />
<rect x="662.00" y="584.00" width="1.00" height="21.30" fill="#0270df" />
<rect x="664.00" y="605.00" width="1.00" height="13.30" fill="#008ac5" />
<rect x="664.00" y="584.00" width="1.00" height="21.30" fill="#075ff0" />
<rect x="665.00" y="647.00" width="1.00" height="17.30" fill="#a2ec14" />
<rect x="666.00" y="675.60" width="1.00" height="4.97" fill="#96e628" />
<rect x="666.00" y="680.27" width="1.00" height="4.97" fill="#f0b40a" />
<rect x="666.00" y="684.93" width="1.00" height="4.97" fill="#ff8200" />
<rect x="667.00" y="675.60" width="1.00" height="4.97" fill="#96e628" />
<rect x="667.00" y="680.27" width="1.00" height="4.97" fill="#f0b40a" />
<rect x="667.00" y="684.93" width="1.00" height="4.97" fill="#ff8200" />
<rect x="667.00" y="584.00" width="1.00" height="21.30" fill="#0078d7" />
<rect x="668.00" y="675.60" width="1.00" height="4.97" fill="#e4e10f" />
<rect x="668.00" y="680.27" width="1.00" height="4.97" fill="#f0b40a" />
<rect x="668.00" y="684.93" width="1.00" height="4.97" fill="#ff8200" />
<rect x="668.00" y="664.00" width="1.00" height="11.90" fill="#d7e301" />
<rect x="668.00" y="647.00" width="1.00" height="17.30" fill="#9deb18" />
<rect x="669.00" y="675.60" width="1.00" height="4.97" fill="#e4e10f" />
<rect x="669.00" y="680.27" width="1.00" height="4.97" fill="#f0b40a" />
<rect x="669.00" y="684.93" width="1.00" height="4.97" fill="#ff8200" />
<rect x="669.00" y="584.00" width="1.00" height="21.30" fill="#0469e6" />
<rect x="670.00" y="675.60" width="1.00" height="4.97" fill="#e4e10f" />
<rect x="670.00" y="680.27" width="1.00" height="4.97" fill="#f0b40a" />
<rect x="670.00" y="684.93" width="1.00" height="4.97" fill="#ff8200" />
<rect x="671.00" y="675.60" width="1.00" height="4.97" fill="#e4e10f" />
<rect x="671.00" y="680.27" width="1.00" height="4.97" fill="#f0b40a" />
<rect x="671.00" y="684.93" width="1.00" height="4.97" fill="#ff8200" />
<rect x="672.00" y="618.00" width="1.00" height="12.30" fill="#0cb67f" />
<rect x="675.00" y="675.60" width="1.00" height="4.97" fill="#96e628" />
<rect x="675.00" y="680.27" width="1.00" height="4.97" fill="#f0b40a" />
<rect x="675.00" y="684.93" width="1.00" height="4.97" fill="#ff8200" />
<rect x="675.00" y="664.00" width="1.00" height="11.90" fill="#c9e903" />
<rect x="675.00" y="647.00" width="1.00" height="17.30" fill="#a7ed11" />
<rect x="675.00" y="630.00" width="1.00" height="17.30" fill="#49d845" />
<rect x="676.00" y="675.60" width="1.00" height="4.97" fill="#96e628" />
<rect x="676.00" y="680.27" width="1.00" height="4.97" fill="#f0b40a" />
<rect x="676.00" y="684.93" width="1.00" height="4.97" fill="#ff8200" />
<rect x="678.00" y="675.60" width="1.00" height="4.97" fill="#96e628" />
<rect x="678.00" y="680.27" width="1.00" height="4.97" fill="#f0b40a" />
<rect x="678.00" y="684.93" width="1.00" height="4.97" fill="#ff8200" />
<rect x="680.00" y="675.60" width="1.00" height="4.97" fill="#e4e10f" />
<rect x="680.00" y="680.27" width="1.00" height="4.97" fill="#f0b40a" />
<rect x="680.00" y="684.93" width="1.00" height="4.97" fill="#ff8200" />
<rect x="680.00" y="664.00" width="1.00" height="11.90" fill="#d7e301" />
<rect x="680.00" y="568.00" width="1.00" height="16.30" fill="#0c4cf9" />
<rect x="680.00" y="530.00" width="1.00" height="25.30" fill="#1018da" />
<rect x="681.00" y="675.60" width="1.00" height="4.97" fill="#e4e10f" />
<rect x="681.00" y="680.27" width="1.00" height="4.97" fill="#f0b40a" />
<rect x="681.00" y="684.93" width="1.00" height="4.97" fill="#ff8200" />
<rect x="681.00" y="605.00" width="1.00" height="13.30" fill="#0090bf" />
<rect x="681.00" y="530.00" width="1.00" height="25.30" fill="#1220e7" />
<rect x="682.00" y="530.00" width="1.00" height="25.30" fill="#090db4" />
<rect x="684.00" y="675.60" width="1.00" height="4.97" fill="#e4e10f" />
<rect x="684.00" y="680.27" width="1.00" height="4.97" fill="#f0b40a" />
<rect x="684.00" y="684.93" width="1.00" height="4.97" fill="#ff8200" />
<rect x="684.00" y="664.00" width="1.00" height="11.90" fill="#d8e301" />
<rect x="684.00" y="530.00" width="1.00" height="25.30" fill="#02038e" />
<rect x="685.00" y="675.60" width="1.00" height="4.97" fill="#e4e10f" />
<rect x="685.00" y="680.27" width="1.00" height="4.97" fill="#f0b40a" />
<rect x="685.00" y="684.93" width="1.00" height="4.97" fill="#ff8200" />
<rect x="687.00" y="647.00" width="1.00" height="17.30" fill="#a8ed10" />
<rect x="688.00" y="675.60" width="1.00" height="4.97" fill="#e4e10f" />
<rect x="688.00" y="680.27" width="1.00" height="4.97" fill="#f0b40a" />
<rect x="688.00" y="684.93" width="1.00" height="4.97" fill="#ff8200" />
<rect x="688.00" y="664.00" width="1.00" height="11.90" fill="#c4eb03" />
<rect x="688.00" y="555.00" width="1.00" height="13.30" fill="#0e42f8" />
<rect x="688.00" y="530.00" width="1.00" height="25.30" fill="#111bde" />
<rect x="689.00" y="675.60" width="1.00" height="4.97" fill="#e4e10f" />
<rect x="689.00" y="680.27" width="1.00" height="4.97" fill="#f0b40a" />
<rect x="689.00" y="684.93" width="1.00" height="4.97" fill="#ff8200" />
<rect x="690.00" y="675.60" width="1.00" height="4.97" fill="#e4e10f" />
<rect x="690.00" y="680.27" width="1.00" height="4.97" fill="#f0b40a" />
<rect x="690.00" y="684.93" width="1.00" height="4.97" fill="#ff8200" />
<rect x="691.00" y="647.00" width="1.00" height="17.30" fill="#94ea1d" />
<rect x="692.00" y="605.00" width="1.00" height="13.30" fill="#009db2" />
<rect x="694.00" y="675.60" width="1.00" height="4.97" fill="#e4e10f" />
<rect x="694.00" y="680.27" width="1.00" height="4.97" fill="#f0b40a" />
<rect x="694.00" y="684.93" width="1.00" height="4.97" fill="#ff8200" />
<rect x="694.00" y="664.00" width="1.00" height="11.90" fill="#c0ed04" />
<rect x="695.00" y="675.60" width="1.00" height="4.97" fill="#e4e10f" />
<rect x="695.00" y="680.27" width="1.00" height="4.97" fill="#f0b40a" />
<rect x="695.00" y="684.93" width="1.00" height="4.97" fill="#ff8200" />
<rect x="695.00" y="618.00" width="1.00" height="12.30" fill="#0ab481" />
<rect x="695.00" y="605.00" width="1.00" height="13.30" fill="#00a0af" />
<rect x="695.00" y="584.00" width="1.00" height="21.30" fill="#0567e8" />
<rect x="696.00" y="675.60" width="1.00" height="4.97" fill="#e4e10f" />
<rect x="696.00" y="680.27" width="1.00" height="4.97" fill="#f0b40a" />
<rect x="696.00" y="684.93" width="1.00" height="4.97" fill="#ff8200" />
<rect x="696.00" y="664.00" width="1.00" height="11.90" fill="#bcef05" />
<rect x="696.00" y="647.00" width="1.00" height="17.30" fill="#7be42c" />
<rect x="696.00" y="555.00" width="1.00" height="13.30" fill="#132df6" />
<rect x="696.00" y="530.00" width="1.00" height="25.30" fill="#121fe6" />
<rect x="697.00" y="568.00" width="1.00" height="16.30" fill="#0e42f8" />
<rect x="697.00" y="555.00" width="1.00" height="13.30" fill="#1326f1" />
<rect x="697.00" y="530.00" width="1.00" height="25.30" fill="#1324ee" />
<rect x="699.00" y="530.00" width="1.00" height="25.30" fill="#080aab" />
<rect x="700.00" y="675.60" width="1.00" height="4.97" fill="#e4e10f" />
<rect x="700.00" y="680.27" width="1.00" height="4.97" fill="#f0b40a" />
<rect x="700.00" y="684.93" width="1.00" height="4.97" fill="#ff8200" />
<rect x="700.00" y="664.00" width="1.00" height="11.90" fill="#bcef05" />
<rect x="700.00" y="630.00" width="1.00" height="17.30" fill="#2ecc5a" />
<rect x="702.00" y="675.60" width="1.00" height="4.97" fill="#e4e10f" />
<rect x="702.00" y="680.27" width="1.00" height="4.97" fill="#f0b40a" />
<rect x="702.00" y="684.93" width="1.00" height="4.97" fill="#ff8200" />
<rect x="703.00" y="675.60" width="1.00" height="4.97" fill="#e4e10f" />
<rect x="703.00" y="680.27" width="1.00" height="4.97" fill="#f0b40a" />
<rect x="703.00" y="684.93" width="1.00" height="4.97" fill="#ff8200" />
<rect x="703.00" y="584.00" width="1.00" height="21.30" fill="#007ad5" />
<rect x="703.00" y="568.00" width="1.00" height="16.30" fill="#1232f6" />
<rect x="704.00" y="675.60" width="1.00" height="4.97" fill="#e4e10f" />
<rect x="704.00" y="680.27" width="1.00" height="4.97" fill="#f0b40a" />
<rect x="704.00" y="684.93" width="1.00" height="4.97" fill="#ff8200" />
<rect x="704.00" y="664.00" width="1.00" height="11.90" fill="#c8ea03" />
<rect x="704.00" y="618.00" width="1.00" height="12.30" fill="#05aa98" />
<rect x="704.00" y="555.00" width="1.00" height="13.30" fill="#1038f7" />
<rect x="705.00" y="675.60" width="1.00" height="4.97" fill="#e4e10f" />
<rect x="705.00" y="680.27" width="1.00" height="4.97" fill="#f0b40a" />
<rect x="705.00" y="684.93" width="1.00" height="4.97" fill="#ff8200" />
<rect x="706.00" y="675.60" width="1.00" height="4.97" fill="#e4e10f" />
<rect x="706.00" y="680.27" width="1.00" height="4.97" fill="#f0b40a" />
<rect x="706.00" y="684.93" width="1.00" height="4.97" fill="#ff8200" />
<rect x="707.00" y="675.60" width="1.00" height="4.97" fill="#e4e10f" />
<rect x="707.00" y="680.27" width="1.00" height="4.97" fill="#f0b40a" />
<rect x="707.00" y="684.93" width="1.00" height="4.97" fill="#ff8200" />
<rect x="708.00" y="530.00" width="1.00" height="25.30" fill="#1017d8" />
<rect x="709.00" y="675.60" width="1.00" height="4.97" fill="#e4e10f" />
<rect x="709.00" y="680.27" width="1.00" height="4.97" fill="#f0b40a" />
<rect x="709.00" y="684.93" width="1.00" height="4.97" fill="#ff8200" />
<rect x="711.00" y="675.60" width="1.00" height="4.97" fill="#e4e10f" />
<rect x="711.00" y="680.27" width="1.00" height="4.97" fill="#f0b40a" />
<rect x="711.00" y="684.93" width="1.00" height="4.97" fill="#ff8200" />
<rect x="711.00" y="664.00" width="1.00" height="11.90" fill="#c8ea03" />
<rect x="711.00" y="568.00" width="1.00" height="16.30" fill="#0a56f9" />
<rect x="711.00" y="555.00" width="1.00" height="13.30" fill="#103cf7" />
<rect x="713.00" y="675.60" width="1.00" height="4.97" fill="#e4e10f" />
<rect x="713.00" y="680.27" width="1.00" height="4.97" fill="#f0b40a" />
<rect x="713.00" y="684.93" width="1.00" height="4.97" fill="#ff8200" />
<rect x="714.00" y="530.00" width="1.00" height="25.30" fill="#0b0ebb" />
<rect x="715.00" y="675.60" width="1.00" height="4.97" fill="#96e628" />
<rect x="715.00" y="680.27" width="1.00" height="4.97" fill="#f0b40a" />
<rect x="715.00" y="684.93" width="1.00" height="4.97" fill="#ff8200" />
<rect x="715.00" y="530.00" width="1.00" height="25.30" fill="#1019db" />
<rect x="716.00" y="675.60" width="1.00" height="4.97" fill="#96e628" />
<rect x="716.00" y="680.27" width="1.00" height="4.97" fill="#f0b40a" />
<rect x="716.00" y="684.93" width="1.00" height="4.97" fill="#ff8200" />
<rect x="717.00" y="675.60" width="1.00" height="4.97" fill="#e4e10f" />
<rect x="717.00" y="680.27" width="1.00" height="4.97" fill="#f0b40a" />
<rect x="717.00" y="684.93" width="1.00" height="4.97" fill="#ff8200" />
<rect x="717.00" y="530.00" width="1.00" height="25.30" fill="#0d11c6" />
<rect x="719.00" y="675.60" width="1.00" height="4.97" fill="#e4e10f" />
<rect x="719.00" y="680.27" width="1.00" height="4.97" fill="#f0b40a" />
<rect x="719.00" y="684.93" width="1.00" height="4.97" fill="#ff8200" />
<rect x="719.00" y="664.00" width="1.00" height="11.90" fill="#bfed04" />
<rect x="720.00" y="675.60" width="1.00" height="4.97" fill="#e4e10f" />
<rect x="720.00" y="680.27" width="1.00" height="4.97" fill="#f0b40a" />
<rect x="720.00" y="684.93" width="1.00" height="4.97" fill="#ff8200" />
<rect x="720.00" y="664.00" width="1.00" height="11.90" fill="#dce100" />
<rect x="720.00" y="647.00" width="1.00" height="17.30" fill="#8ce823" />
<rect x="720.00" y="584.00" width="1.00" height="21.30" fill="#036fe0" />
<rect x="720.00" y="530.00" width="1.00" height="25.30" fill="#0f15d3" />
<rect x="721.00" y="675.60" width="1.00" height="4.97" fill="#e4e10f" />
<rect x="721.00" y="680.27" width="1.00" height="4.97" fill="#f0b40a" />
<rect x="721.00" y="684.93" width="1.00" height="4.97" fill="#ff8200" />
<rect x="721.00" y="584.00" width="1.00" height="21.30" fill="#075ef1" />
<rect x="721.00" y="568.00" width="1.00" height="16.30" fill="#1137f7" />
<rect x="721.00" y="530.00" width="1.00" height="25.30" fill="#1220e7" />
<rect x="722.00" y="675.60" width="1.00" height="4.97" fill="#e4e10f" />
<rect x="722.00" y="680.27" width="1.00" height="4.97" fill="#f0b40a" />
<rect x="722.00" y="684.93" width="1.00" height="4.97" fill="#ff8200" />
<rect x="722.00" y="664.00" width="1.00" height="11.90" fill="#bbef05" />
<rect x="722.00" y="647.00" width="1.00" height="17.30" fill="#9feb16" />
<rect x="722.00" y="630.00" width="1.00" height="17.30" fill="#32ce56" />
<rect x="725.00" y="675.60" width="1.00" height="4.97" fill="#e4e10f" />
<rect x="725.00" y="680.27" width="1.00" height="4.97" fill="#f0b40a" />
<rect x="725.00" y="684.93" width="1.00" height="4.97" fill="#ff8200" />
<rect x="725.00" y="664.00" width="1.00" height="11.90" fill="#bbef05" />
<rect x="725.00" y="647.00" width="1.00" height="17.30" fill="#a5ec12" />
<rect x="726.00" y="675.60" width="1.00" height="4.97" fill="#96e628" />
<rect x="726.00" y="680.27" width="1.00" height="4.97" fill="#f0b40a" />
<rect x="726.00" y="684.93" width="1.00" height="4.97" fill="#ff8200" />
<rect x="727.00" y="675.60" width="1.00" height="4.97" fill="#96e628" />
<rect x="727.00" y="680.27" width="1.00" height="4.97" fill="#f0b40a" />
<rect x="727.00" y="684.93" width="1.00" height="4.97" fill="#ff8200" />
<rect x="727.00" y="630.00" width="1.00" height="17.30" fill="#32ce56" />
<rect x="728.00" y="675.60" width="1.00" height="4.97" fill="#e4e10f" />
<rect x="728.00" y="680.27" width="1.00" height="4.97" fill="#f0b40a" />
<rect x="728.00" y="684.93" width="1.00" height="4.97" fill="#ff8200" />
<rect x="728.00" y="664.00" width="1.00" height="11.90" fill="#d2e501" />
<rect x="728.00" y="647.00" width="1.00" height="17.30" fill="#88e725" />
<rect x="728.00" y="568.00" width="1.00" height="16.30" fill="#0d46f8" />
<rect x="729.00" y="675.60" width="1.00" height="4.97" fill="#e4e10f" />
<rect x="729.00" y="680.27" width="1.00" height="4.97" fill="#f0b40a" />
<rect x="729.00" y="684.93" width="1.00" height="4.97" fill="#ff8200" />
<rect x="731.00" y="675.60" width="1.00" height="4.97" fill="#e4e10f" />
<rect x="731.00" y="680.27" width="1.00" height="4.97" fill="#f0b40a" />
<rect x="731.00" y="684.93" width="1.00" height="4.97" fill="#ff8200" />
<rect x="731.00" y="664.00" width="1.00" height="11.90" fill="#d8e301" />
<rect x="732.00" y="675.60" width="1.00" height="4.97" fill="#96e628" />
<rect x="732.00" y="680.27" width="1.00" height="4.97" fill="#f0b40a" />
<rect x="732.00" y="684.93" width="1.00" height="4.97" fill="#ff8200" />
<rect x="732.00" y="555.00" width="1.00" height="13.30" fill="#1232f6" />
<rect x="733.00" y="530.00" width="1.00" height="25.30" fill="#1325f1" />
<rect x="734.00" y="675.60" width="1.00" height="4.97" fill="#e4e10f" />
<rect x="734.00" y="680.27" width="1.00" height="4.97" fill="#f0b40a" />
<rect x="734.00" y="684.93" width="1.00" height="4.97" fill="#ff8200" />
<rect x="737.00" y="675.60" width="1.00" height="4.97" fill="#e4e10f" />
<rect x="737.00" y="680.27" width="1.00" height="4.97" fill="#f0b40a" />
<rect x="737.00" y="684.93" width="1.00" height="4.97" fill="#ff8200" />
<rect x="739.00" y="675.60" width="1.00" height="4.97" fill="#e4e10f" />
<rect x="739.00" y="680.27" width="1.00" height="4.97" fill="#f0b40a" />
<rect x="739.00" y="684.93" width="1.00" height="4.97" fill="#ff8200" />
<rect x="740.00" y="630.00" width="1.00" height="17.30" fill="#34d054" />
<rect x="741.00" y="675.60" width="1.00" height="4.97" fill="#e4e10f" />
<rect x="741.00" y="680.27" width="1.00" height="4.97" fill="#f0b40a" />
<rect x="741.00" y="684.93" width="1.00" height="4.97" fill="#ff8200" />
<rect x="741.00" y="630.00" width="1.00" height="17.30" fill="#36d152" />
<rect x="741.00" y="530.00" width="1.00" height="25.30" fill="#111ce1" />
<rect x="742.00" y="675.60" width="1.00" height="4.97" fill="#e4e10f" />
<rect x="742.00" y="680.27" width="1.00" height="4.97" fill="#f0b40a" />
<rect x="742.00" y="684.93" width="1.00" height="4.97" fill="#ff8200" />
<rect x="742.00" y="664.00" width="1.00" height="11.90" fill="#d4e501" />
<rect x="742.00" y="605.00" width="1.00" height="13.30" fill="#009ab5" />
<rect x="743.00" y="675.60" width="1.00" height="4.97" fill="#e4e10f" />
<rect x="743.00" y="680.27" width="1.00" height="4.97" fill="#f0b40a" />
<rect x="743.00" y="684.93" width="1.00" height="4.97" fill="#ff8200" />
<rect x="744.00" y="530.00" width="1.00" height="25.30" fill="#0a0eba" />
<rect x="745.00" y="555.00" width="1.00" height="13.30" fill="#0e43f8" />
<rect x="745.00" y="530.00" width="1.00" height="25.30" fill="#0f14d2" />
<rect x="745.00" y="522.50" width="1.00" height="7.80" fill="#111de2" />
<rect x="746.00" y="568.00" width="1.00" height="16.30" fill="#0f3ff8" />
<rect x="746.00" y="555.00" width="1.00" height="13.30" fill="#1427f4" />
<rect x="746.00" y="530.00" width="1.00" height="25.30" fill="#0c11c5" />
<rect x="747.00" y="530.00" width="1.00" height="25.30" fill="#0a0db7" />
<rect x="750.00" y="530.00" width="1.00" height="25.30" fill="#1322eb" />
<rect x="754.00" y="555.00" width="1.00" height="13.30" fill="#0f3ef7" />
<rect x="754.00" y="530.00" width="1.00" height="25.30" fill="#121ee4" />
<rect x="757.00" y="522.50" width="1.00" height="7.80" fill="#111ce0" />
<rect x="758.00" y="530.00" width="1.00" height="25.30" fill="#121fe6" />
<rect x="758.00" y="522.50" width="1.00" height="7.80" fill="#0f14d3" />
<rect x="760.00" y="675.60" width="1.00" height="4.97" fill="#e4e10f" />
<rect x="760.00" y="680.27" width="1.00" height="4.97" fill="#f0b40a" />
<rect x="760.00" y="684.93" width="1.00" height="4.97" fill="#ff8200" />
<rect x="760.00" y="664.00" width="1.00" height="11.90" fill="#b9f005" />
<rect x="760.00" y="647.00" width="1.00" height="17.30" fill="#77e32d" />
<rect x="760.00" y="630.00" width="1.00" height="17.30" fill="#31ce57" />
<rect x="760.00" y="555.00" width="1.00" height="13.30" fill="#121fe6" />
<rect x="761.00" y="675.60" width="1.00" height="4.97" fill="#e4e10f" />
<rect x="761.00" y="680.27" width="1.00" height="4.97" fill="#f0b40a" />
<rect x="761.00" y="684.93" width="1.00" height="4.97" fill="#ff8200" />
<rect x="761.00" y="664.00" width="1.00" height="11.90" fill="#d1e602" />
<rect x="762.00" y="675.60" width="1.00" height="4.97" fill="#e4e10f" />
<rect x="762.00" y="680.27" width="1.00" height="4.97" fill="#f0b40a" />
<rect x="762.00" y="684.93" width="1.00" height="4.97" fill="#ff8200" />
<rect x="762.00" y="530.00" width="1.00" height="25.30" fill="#1324ed" />
<rect x="762.00" y="522.50" width="1.00" height="7.80" fill="#1019dc" />
<rect x="763.00" y="675.60" width="1.00" height="4.97" fill="#96e628" />
<rect x="763.00" y="680.27" width="1.00" height="4.97" fill="#f0b40a" />
<rect x="763.00" y="684.93" width="1.00" height="4.97" fill="#ff8200" />
<rect x="764.00" y="675.60" width="1.00" height="4.97" fill="#e4e10f" />
<rect x="764.00" y="680.27" width="1.00" height="4.97" fill="#f0b40a" />
<rect x="764.00" y="684.93" width="1.00" height="4.97" fill="#ff8200" />
<rect x="765.00" y="605.00" width="1.00" height="13.30" fill="#01a2aa" />
<rect x="765.00" y="584.00" width="1.00" height="21.30" fill="#0271de" />
<rect x="766.00" y="675.60" width="1.00" height="4.97" fill="#e4e10f" />
<rect x="766.00" y="680.27" width="1.00" height="4.97" fill="#f0b40a" />
<rect x="766.00" y="684.93" width="1.00" height="4.97" fill="#ff8200" />
<rect x="766.00" y="664.00" width="1.00" height="11.90" fill="#d6e401" />
<rect x="766.00" y="647.00" width="1.00" height="17.30" fill="#91e920" />
<rect x="767.00" y="675.60" width="1.00" height="4.97" fill="#96e628" />
<rect x="767.00" y="680.27" width="1.00" height="4.97" fill="#f0b40a" />
<rect x="767.00" y="684.93" width="1.00" height="4.97" fill="#ff8200" />
<rect x="767.00" y="530.00" width="1.00" height="25.30" fill="#070aa8" />
<rect x="768.00" y="675.60" width="1.00" height="4.97" fill="#e4e10f" />
<rect x="768.00" y="680.27" width="1.00" height="4.97" fill="#f0b40a" />
<rect x="768.00" y="684.93" width="1.00" height="4.97" fill="#ff8200" />
<rect x="769.00" y="675.60" width="1.00" height="4.97" fill="#e4e10f" />
<rect x="769.00" y="680.27" width="1.00" height="4.97" fill="#f0b40a" />
<rect x="769.00" y="684.93" width="1.00" height="4.97" fill="#ff8200" />
<rect x="770.00" y="675.60" width="1.00" height="4.97" fill="#e4e10f" />
<rect x="770.00" y="680.27" width="1.00" height="4.97" fill="#f0b40a" />
<rect x="770.00" y="684.93" width="1.00" height="4.97" fill="#ff8200" />
<rect x="775.00" y="675.60" width="1.00" height="4.97" fill="#e4e10f" />
<rect x="775.00" y="680.27" width="1.00" height="4.97" fill="#f0b40a" />
<rect x="775.00" y="684.93" width="1.00" height="4.97" fill="#ff8200" />
<rect x="776.00" y="675.60" width="1.00" height="4.97" fill="#e4e10f" />
<rect x="776.00" y="680.27" width="1.00" height="4.97" fill="#f0b40a" />
<rect x="776.00" y="684.93" width="1.00" height="4.97" fill="#ff8200" />
<rect x="777.00" y="675.60" width="1.00" height="4.97" fill="#e4e10f" />
<rect x="777.00" y="680.27" width="1.00" height="4.97" fill="#f0b40a" />
<rect x="777.00" y="684.93" width="1.00" height="4.97" fill="#ff8200" />
<rect x="778.00" y="675.60" width="1.00" height="4.97" fill="#e4e10f" />
<rect x="778.00" y="680.27" width="1.00" height="4.97" fill="#f0b40a" />
<rect x="778.00" y="684.93" width="1.00" height="4.97" fill="#ff8200" />
<rect x="778.00" y="530.00" width="1.00" height="25.30" fill="#0c10c1" />
<rect x="779.00" y="675.60" width="1.00" height="4.97" fill="#e4e10f" />
<rect x="779.00" y="680.27" width="1.00" height="4.97" fill="#f0b40a" />
<rect x="779.00" y="684.93" width="1.00" height="4.97" fill="#ff8200" />
<rect x="780.00" y="675.60" width="1.00" height="4.97" fill="#e4e10f" />
<rect x="780.00" y="680.27" width="1.00" height="4.97" fill="#f0b40a" />
<rect x="780.00" y="684.93" width="1.00" height="4.97" fill="#ff8200" />
<rect x="780.00" y="605.00" width="1.00" height="13.30" fill="#0094bb" />
<rect x="780.00" y="584.00" width="1.00" height="21.30" fill="#0469e6" />
<rect x="780.00" y="568.00" width="1.00" height="16.30" fill="#0d45f8" />
<rect x="780.00" y="555.00" width="1.00" height="13.30" fill="#132df6" />
<rect x="781.00" y="675.60" width="1.00" height="4.97" fill="#e4e10f" />
<rect x="781.00" y="680.27" width="1.00" height="4.97" fill="#f0b40a" />
<rect x="781.00" y="684.93" width="1.00" height="4.97" fill="#ff8200" />
<rect x="781.00" y="568.00" width="1.00" height="16.30" fill="#0d46f8" />
<rect x="785.00" y="568.00" width="1.00" height="16.30" fill="#1233f6" />
<rect x="787.00" y="630.00" width="1.00" height="17.30" fill="#23c467" />
<rect x="787.00" y="584.00" width="1.00" height="21.30" fill="#085df2" />
<rect x="787.00" y="568.00" width="1.00" height="16.30" fill="#1039f7" />
<rect x="787.00" y="555.00" width="1.00" height="13.30" fill="#1427f4" />
<rect x="788.00" y="605.00" width="1.00" height="13.30" fill="#01a1ac" />
<rect x="788.00" y="530.00" width="1.00" height="25.30" fill="#0f15d5" />
<rect x="790.00" y="568.00" width="1.00" height="16.30" fill="#0957f8" />
<rect x="792.00" y="675.60" width="1.00" height="4.97" fill="#e4e10f" />
<rect x="792.00" y="680.27" width="1.00" height="4.97" fill="#f0b40a" />
<rect x="792.00" y="684.93" width="1.00" height="4.97" fill="#ff8200" />
<rect x="793.00" y="675.60" width="1.00" height="4.97" fill="#96e628" />
<rect x="793.00" y="680.27" width="1.00" height="4.97" fill="#f0b40a" />
<rect x="793.00" y="684.93" width="1.00" height="4.97" fill="#ff8200" />
<rect x="793.00" y="647.00" width="1.00" height="17.30" fill="#9eeb17" />
<rect x="793.00" y="555.00" width="1.00" height="13.30" fill="#1039f7" />
<rect x="793.00" y="530.00" width="1.00" height="25.30" fill="#0e12ca" />
<rect x="794.00" y="675.60" width="1.00" height="4.97" fill="#96e628" />
<rect x="794.00" y="680.27" width="1.00" height="4.97" fill="#f0b40a" />
<rect x="794.00" y="684.93" width="1.00" height="4.97" fill="#ff8200" />
<rect x="794.00" y="664.00" width="1.00" height="11.90" fill="#bfee04" />
<rect x="794.00" y="530.00" width="1.00" height="25.30" fill="#0608a0" />
<rect x="795.00" y="675.60" width="1.00" height="4.97" fill="#e4e10f" />
<rect x="795.00" y="680.27" width="1.00" height="4.97" fill="#f0b40a" />
<rect x="795.00" y="684.93" width="1.00" height="4.97" fill="#ff8200" />
<rect x="795.00" y="530.00" width="1.00" height="25.30" fill="#00007e" />
<rect x="796.00" y="675.60" width="1.00" height="4.97" fill="#e4e10f" />
<rect x="796.00" y="680.27" width="1.00" height="4.97" fill="#f0b40a" />
<rect x="796.00" y="684.93" width="1.00" height="4.97" fill="#ff8200" />
<rect x="796.00" y="664.00" width="1.00" height="11.90" fill="#bfee04" />
<rect x="796.00" y="522.50" width="1.00" height="7.80" fill="#0d11c5" />
<rect x="798.00" y="675.60" width="1.00" height="4.97" fill="#e4e10f" />
<rect x="798.00" y="680.27" width="1.00" height="4.97" fill="#f0b40a" />
<rect x="798.00" y="684.93" width="1.00" height="4.97" fill="#ff8200" />
<rect x="800.00" y="675.60" width="1.00" height="4.97" fill="#e4e10f" />
<rect x="800.00" y="680.27" width="1.00" height="4.97" fill="#f0b40a" />
<rect x="800.00" y="684.93" width="1.00" height="4.97" fill="#ff8200" />
<rect x="803.00" y="675.60" width="1.00" height="4.97" fill="#e4e10f" />
<rect x="803.00" y="680.27" width="1.00" height="4.97" fill="#f0b40a" />
<rect x="803.00" y="684.93" width="1.00" height="4.97" fill="#ff8200" />
<rect x="803.00" y="664.00" width="1.00" height="11.90" fill="#beee04" />
<rect x="804.00" y="555.00" width="1.00" height="13.30" fill="#1038f7" />
<rect x="806.00" y="675.60" width="1.00" height="4.97" fill="#e4e10f" />
<rect x="806.00" y="680.27" width="1.00" height="4.97" fill="#f0b40a" />
<rect x="806.00" y="684.93" width="1.00" height="4.97" fill="#ff8200" />
<rect x="807.00" y="675.60" width="1.00" height="4.97" fill="#e4e10f" />
<rect x="807.00" y="680.27" width="1.00" height="4.97" fill="#f0b40a" />
<rect x="807.00" y="684.93" width="1.00" height="4.97" fill="#ff8200" />
<rect x="808.00" y="568.00" width="1.00" height="16.30" fill="#122ff6" />
<rect x="809.00" y="675.60" width="1.00" height="4.97" fill="#e4e10f" />
<rect x="809.00" y="680.27" width="1.00" height="4.97" fill="#f0b40a" />
<rect x="809.00" y="684.93" width="1.00" height="4.97" fill="#ff8200" />
<rect x="809.00" y="664.00" width="1.00" height="11.90" fill="#c1ed04" />
<rect x="811.00" y="568.00" width="1.00" height="16.30" fill="#132df6" />
<rect x="811.00" y="522.50" width="1.00" height="7.80" fill="#0d12c8" />
<rect x="814.00" y="618.00" width="1.00" height="12.30" fill="#0cb580" />
<rect x="814.00" y="522.50" width="1.00" height="7.80" fill="#0f13d0" />
<rect x="815.00" y="675.60" width="1.00" height="4.97" fill="#96e628" />
<rect x="815.00" y="680.27" width="1.00" height="4.97" fill="#f0b40a" />
<rect x="815.00" y="684.93" width="1.00" height="4.97" fill="#ff8200" />
<rect x="816.00" y="530.00" width="1.00" height="25.30" fill="#1221e8" />
<rect x="817.00" y="530.00" width="1.00" height="25.30" fill="#1017d8" />
<rect x="817.00" y="522.50" width="1.00" height="7.80" fill="#1323ec" />
<rect x="819.00" y="675.60" width="1.00" height="4.97" fill="#96e628" />
<rect x="819.00" y="680.27" width="1.00" height="4.97" fill="#f0b40a" />
<rect x="819.00" y="684.93" width="1.00" height="4.97" fill="#ff8200" />
<rect x="820.00" y="675.60" width="1.00" height="4.97" fill="#e4e10f" />
<rect x="820.00" y="680.27" width="1.00" height="4.97" fill="#f0b40a" />
<rect x="820.00" y="684.93" width="1.00" height="4.97" fill="#ff8200" />
<rect x="821.00" y="675.60" width="1.00" height="4.97" fill="#96e628" />
<rect x="821.00" y="680.27" width="1.00" height="4.97" fill="#f0b40a" />
<rect x="821.00" y="684.93" width="1.00" height="4.97" fill="#ff8200" />
<rect x="821.00" y="530.00" width="1.00" height="25.30" fill="#1322eb" />
<rect x="822.00" y="675.60" width="1.00" height="4.97" fill="#e4e10f" />
<rect x="822.00" y="680.27" width="1.00" height="4.97" fill="#f0b40a" />
<rect x="822.00" y="684.93" width="1.00" height="4.97" fill="#ff8200" />
<rect x="822.00" y="568.00" width="1.00" height="16.30" fill="#0b50f9" />
<rect x="822.00" y="555.00" width="1.00" height="13.30" fill="#1326f1" />
<rect x="822.00" y="530.00" width="1.00" height="25.30" fill="#1018d9" />
<rect x="823.00" y="675.60" width="1.00" height="4.97" fill="#e4e10f" />
<rect x="823.00" y="680.27" width="1.00" height="4.97" fill="#f0b40a" />
<rect x="823.00" y="684.93" width="1.00" height="4.97" fill="#ff8200" />
<rect x="823.00" y="664.00" width="1.00" height="11.90" fill="#d3e501" />
<rect x="823.00" y="568.00" width="1.00" height="16.30" fill="#0f40f8" />
<rect x="823.00" y="555.00" width="1.00" height="13.30" fill="#111ee3" />
<rect x="823.00" y="530.00" width="1.00" height="25.30" fill="#1323ed" />
<rect x="824.00" y="675.60" width="1.00" height="4.97" fill="#e4e10f" />
<rect x="824.00" y="680.27" width="1.00" height="4.97" fill="#f0b40a" />
<rect x="824.00" y="684.93" width="1.00" height="4.97" fill="#ff8200" />
<rect x="824.00" y="530.00" width="1.00" height="25.30" fill="#0a0db8" />
<rect x="825.00" y="675.60" width="1.00" height="4.97" fill="#e4e10f" />
<rect x="825.00" y="680.27" width="1.00" height="4.97" fill="#f0b40a" />
<rect x="825.00" y="684.93" width="1.00" height="4.97" fill="#ff8200" />
<rect x="825.00" y="530.00" width="1.00" height="25.30" fill="#0a0db6" />
<rect x="826.00" y="675.60" width="1.00" height="4.97" fill="#e4e10f" />
<rect x="826.00" y="680.27" width="1.00" height="4.97" fill="#f0b40a" />
<rect x="826.00" y="684.93" width="1.00" height="4.97" fill="#ff8200" />
<rect x="826.00" y="530.00" width="1.00" height="25.30" fill="#1322eb" />
<rect x="827.00" y="568.00" width="1.00" height="16.30" fill="#1133f6" />
<rect x="828.00" y="675.60" width="1.00" height="4.97" fill="#e4e10f" />
<rect x="828.00" y="680.27" width="1.00" height="4.97" fill="#f0b40a" />
<rect x="828.00" y="684.93" width="1.00" height="4.97" fill="#ff8200" />
<rect x="830.00" y="675.60" width="1.00" height="4.97" fill="#e4e10f" />
<rect x="830.00" y="680.27" width="1.00" height="4.97" fill="#f0b40a" />
<rect x="830.00" y="684.93" width="1.00" height="4.97" fill="#ff8200" />
<rect x="831.00" y="555.00" width="1.00" height="13.30" fill="#111ee3" />
<rect x="832.00" y="675.60" width="1.00" height="4.97" fill="#96e628" />
<rect x="832.00" y="680.27" width="1.00" height="4.97" fill="#f0b40a" />
<rect x="832.00" y="684.93" width="1.00" height="4.97" fill="#ff8200" />
<rect x="832.00" y="664.00" width="1.00" height="11.90" fill="#c6ea03" />
<rect x="834.00" y="675.60" width="1.00" height="4.97" fill="#96e628" />
<rect x="834.00" y="680.27" width="1.00" height="4.97" fill="#f0b40a" />
<rect x="834.00" y="684.93" width="1.00" height="4.97" fill="#ff8200" />
<rect x="835.00" y="675.60" width="1.00" height="4.97" fill="#e4e10f" />
<rect x="835.00" y="680.27" width="1.00" height="4.97" fill="#f0b40a" />
<rect x="835.00" y="684.93" width="1.00" height="4.97" fill="#ff8200" />
<rect x="835.00" y="530.00" width="1.00" height="25.30" fill="#0a0db6" />
<rect x="836.00" y="555.00" width="1.00" height="13.30" fill="#1136f7" />
<rect x="836.00" y="530.00" width="1.00" height="25.30" fill="#0e12cb" />
<rect x="836.00" y="522.50" width="1.00" height="7.80" fill="#0a0db7" />
<rect x="837.00" y="675.60" width="1.00" height="4.97" fill="#96e628" />
<rect x="837.00" y="680.27" width="1.00" height="4.97" fill="#f0b40a" />
<rect x="837.00" y="684.93" width="1.00" height="4.97" fill="#ff8200" />
<rect x="838.00" y="675.60" width="1.00" height="4.97" fill="#e4e10f" />
<rect x="838.00" y="680.27" width="1.00" height="4.97" fill="#f0b40a" />
<rect x="838.00" y="684.93" width="1.00" height="4.97" fill="#ff8200" />
<rect x="839.00" y="675.60" width="1.00" height="4.97" fill="#e4e10f" />
<rect x="839.00" y="680.27" width="1.00" height="4.97" fill="#f0b40a" />
<rect x="839.00" y="684.93" width="1.00" height="4.97" fill="#ff8200" />
<rect x="839.00" y="605.00" width="1.00" height="13.30" fill="#009bb4" />
<rect x="839.00" y="584.00" width="1.00" height="21.30" fill="#0081ce" />
<rect x="839.00" y="522.50" width="1.00" height="7.80" fill="#1220e6" />
<rect x="840.00" y="675.60" width="1.00" height="4.97" fill="#e4e10f" />
<rect x="840.00" y="680.27" width="1.00" height="4.97" fill="#f0b40a" />
<rect x="840.00" y="684.93" width="1.00" height="4.97" fill="#ff8200" />
<rect x="840.00" y="605.00" width="1.00" height="13.30" fill="#02a5a4" />
<rect x="840.00" y="584.00" width="1.00" height="21.30" fill="#007bd4" />
<rect x="841.00" y="675.60" width="1.00" height="4.97" fill="#e4e10f" />
<rect x="841.00" y="680.27" width="1.00" height="4.97" fill="#f0b40a" />
<rect x="841.00" y="684.93" width="1.00" height="4.97" fill="#ff8200" />
<rect x="841.00" y="530.00" width="1.00" height="25.30" fill="#0f14d1" />
<rect x="842.00" y="675.60" width="1.00" height="4.97" fill="#96e628" />
<rect x="842.00" y="680.27" width="1.00" height="4.97" fill="#f0b40a" />
<rect x="842.00" y="684.93" width="1.00" height="4.97" fill="#ff8200" />
<rect x="844.00" y="584.00" width="1.00" height="21.30" fill="#036de2" />
<rect x="846.00" y="675.60" width="1.00" height="4.97" fill="#e4e10f" />
<rect x="846.00" y="680.27" width="1.00" height="4.97" fill="#f0b40a" />
<rect x="846.00" y="684.93" width="1.00" height="4.97" fill="#ff8200" />
<rect x="847.00" y="675.60" width="1.00" height="4.97" fill="#e4e10f" />
<rect x="847.00" y="680.27" width="1.00" height="4.97" fill="#f0b40a" />
<rect x="847.00" y="684.93" width="1.00" height="4.97" fill="#ff8200" />
<rect x="847.00" y="664.00" width="1.00" height="11.90" fill="#c8e903" />
<rect x="847.00" y="647.00" width="1.00" height="17.30" fill="#a6ed12" />
<rect x="847.00" y="630.00" width="1.00" height="17.30" fill="#37d251" />
<rect x="848.00" y="675.60" width="1.00" height="4.97" fill="#e4e10f" />
<rect x="848.00" y="680.27" width="1.00" height="4.97" fill="#f0b40a" />
<rect x="848.00" y="684.93" width="1.00" height="4.97" fill="#ff8200" />
<rect x="848.00" y="584.00" width="1.00" height="21.30" fill="#0272dd" />
<rect x="848.00" y="568.00" width="1.00" height="16.30" fill="#132cf5" />
<rect x="848.00" y="555.00" width="1.00" height="13.30" fill="#1233f6" />
<rect x="848.00" y="530.00" width="1.00" height="25.30" fill="#111bdd" />
<rect x="849.00" y="530.00" width="1.00" height="25.30" fill="#080aab" />
<rect x="851.00" y="675.60" width="1.00" height="4.97" fill="#e4e10f" />
<rect x="851.00" y="680.27" width="1.00" height="4.97" fill="#f0b40a" />
<rect x="851.00" y="684.93" width="1.00" height="4.97" fill="#ff8200" />
<rect x="851.00" y="530.00" width="1.00" height="25.30" fill="#1427f4" />
<rect x="852.00" y="675.60" width="1.00" height="4.97" fill="#e4e10f" />
<rect x="852.00" y="680.27" width="1.00" height="4.97" fill="#f0b40a" />
<rect x="852.00" y="684.93" width="1.00" height="4.97" fill="#ff8200" />
<rect x="852.00" y="530.00" width="1.00" height="25.30" fill="#111ce1" />
<rect x="853.00" y="675.60" width="1.00" height="4.97" fill="#e4e10f" />
<rect x="853.00" y="680.27" width="1.00" height="4.97" fill="#f0b40a" />
<rect x="853.00" y="684.93" width="1.00" height="4.97" fill="#ff8200" />
<rect x="853.00" y="664.00" width="1.00" height="11.90" fill="#bdee04" />
<rect x="853.00" y="630.00" width="1.00" height="17.30" fill="#38d24f" />
<rect x="853.00" y="530.00" width="1.00" height="25.30" fill="#1017d6" />
<rect x="855.00" y="675.60" width="1.00" height="4.97" fill="#96e628" />
<rect x="855.00" y="680.27" width="1.00" height="4.97" fill="#f0b40a" />
<rect x="855.00" y="684.93" width="1.00" height="4.97" fill="#ff8200" />
<rect x="856.00" y="675.60" width="1.00" height="4.97" fill="#e4e10f" />
<rect x="856.00" y="680.27" width="1.00" height="4.97" fill="#f0b40a" />
<rect x="856.00" y="684.93" width="1.00" height="4.97" fill="#ff8200" />
<rect x="856.00" y="664.00" width="1.00" height="11.90" fill="#d1e602" />
<rect x="856.00" y="647.00" width="1.00" height="17.30" fill="#a6ed12" />
<rect x="856.00" y="630.00" width="1.00" height="17.30" fill="#42d648" />
<rect x="856.00" y="568.00" width="1.00" height="16.30" fill="#0a55fa" />
<rect x="856.00" y="555.00" width="1.00" height="13.30" fill="#1323ed" />
<rect x="857.00" y="675.60" width="1.00" height="4.97" fill="#e4e10f" />
<rect x="857.00" y="680.27" width="1.00" height="4.97" fill="#f0b40a" />
<rect x="857.00" y="684.93" width="1.00" height="4.97" fill="#ff8200" />
<rect x="857.00" y="584.00" width="1.00" height="21.30" fill="#036ee1" />
<rect x="857.00" y="568.00" width="1.00" height="16.30" fill="#0c4af9" />
<rect x="858.00" y="675.60" width="1.00" height="4.97" fill="#e4e10f" />
<rect x="858.00" y="680.27" width="1.00" height="4.97" fill="#f0b40a" />
<rect x="858.00" y="684.93" width="1.00" height="4.97" fill="#ff8200" />
<rect x="859.00" y="522.50" width="1.00" height="7.80" fill="#111bdf" />
<rect x="861.00" y="675.60" width="1.00" height="4.97" fill="#e4e10f" />
<rect x="861.00" y="680.27" width="1.00" height="4.97" fill="#f0b40a" />
<rect x="861.00" y="684.93" width="1.00" height="4.97" fill="#ff8200" />
<rect x="861.00" y="664.00" width="1.00" height="11.90" fill="#c9e903" />
<rect x="861.00" y="647.00" width="1.00" height="17.30" fill="#a0ec15" />
<rect x="861.00" y="630.00" width="1.00" height="17.30" fill="#4dd943" />
<rect x="861.00" y="522.50" width="1.00" height="7.80" fill="#0e13cd" />
<rect x="862.00" y="675.60" width="1.00" height="4.97" fill="#e4e10f" />
<rect x="862.00" y="680.27" width="1.00" height="4.97" fill="#f0b40a" />
<rect x="862.00" y="684.93" width="1.00" height="4.97" fill="#ff8200" />
<rect x="862.00" y="618.00" width="1.00" height="12.30" fill="#03a7a0" />
<rect x="863.00" y="675.60" width="1.00" height="4.97" fill="#e4e10f" />
<rect x="863.00" y="680.27" width="1.00" height="4.97" fill="#f0b40a" />
<rect x="863.00" y="684.93" width="1.00" height="4.97" fill="#ff8200" />
<rect x="863.00" y="618.00" width="1.00" height="12.30" fill="#05ab97" />
<rect x="864.00" y="675.60" width="1.00" height="4.97" fill="#e4e10f" />
<rect x="864.00" y="680.27" width="1.00" height="4.97" fill="#f0b40a" />
<rect x="864.00" y="684.93" width="1.00" height="4.97" fill="#ff8200" />
<rect x="864.00" y="664.00" width="1.00" height="11.90" fill="#c8ea03" />
<rect x="864.00" y="568.00" width="1.00" height="16.30" fill="#132cf5" />
<rect x="864.00" y="555.00" width="1.00" height="13.30" fill="#0f41f8" />
<rect x="864.00" y="530.00" width="1.00" height="25.30" fill="#1019da" />
<rect x="865.00" y="675.60" width="1.00" height="4.97" fill="#e4e10f" />
<rect x="865.00" y="680.27" width="1.00" height="4.97" fill="#f0b40a" />
<rect x="865.00" y="684.93" width="1.00" height="4.97" fill="#ff8200" />
<rect x="866.00" y="675.60" width="1.00" height="4.97" fill="#e4e10f" />
<rect x="866.00" y="680.27" width="1.00" height="4.97" fill="#f0b40a" />
<rect x="866.00" y="684.93" width="1.00" height="4.97" fill="#ff8200" />
<rect x="866.00" y="530.00" width="1.00" height="25.30" fill="#1324ed" />
<rect x="867.00" y="530.00" width="1.00" height="25.30" fill="#0b0fbd" />
<rect x="869.00" y="675.60" width="1.00" height="4.97" fill="#96e628" />
<rect x="869.00" y="680.27" width="1.00" height="4.97" fill="#f0b40a" />
<rect x="869.00" y="684.93" width="1.00" height="4.97" fill="#ff8200" />
<rect x="869.00" y="530.00" width="1.00" height="25.30" fill="#1221e9" />
<rect x="869.00" y="522.50" width="1.00" height="7.80" fill="#1220e6" />
<rect x="871.00" y="675.60" width="1.00" height="4.97" fill="#96e628" />
<rect x="871.00" y="680.27" width="1.00" height="4.97" fill="#f0b40a" />
<rect x="871.00" y="684.93" width="1.00" height="4.97" fill="#ff8200" />
<rect x="872.00" y="530.00" width="1.00" height="25.30" fill="#1019da" />
<rect x="873.00" y="675.60" width="1.00" height="4.97" fill="#e4e10f" />
<rect x="873.00" y="680.27" width="1.00" height="4.97" fill="#f0b40a" />
<rect x="873.00" y="684.93" width="1.00" height="4.97" fill="#ff8200" />
<rect x="873.00" y="530.00" width="1.00" height="25.30" fill="#1018d9" />
<rect x="874.00" y="530.00" width="1.00" height="25.30" fill="#000078" />
<rect x="876.00" y="675.60" width="1.00" height="4.97" fill="#e4e10f" />
<rect x="876.00" y="680.27" width="1.00" height="4.97" fill="#f0b40a" />
<rect x="876.00" y="684.93" width="1.00" height="4.97" fill="#ff8200" />
<rect x="876.00" y="605.00" width="1.00" height="13.30" fill="#0088c7" />
<rect x="876.00" y="584.00" width="1.00" height="21.30" fill="#085df2" />
<rect x="876.00" y="555.00" width="1.00" height="13.30" fill="#0e42f8" />
<rect x="877.00" y="675.60" width="1.00" height="4.97" fill="#e4e10f" />
<rect x="877.00" y="680.27" width="1.00" height="4.97" fill="#f0b40a" />
<rect x="877.00" y="684.93" width="1.00" height="4.97" fill="#ff8200" />
<rect x="877.00" y="530.00" width="1.00" height="25.30" fill="#0f14d2" />
<rect x="878.00" y="675.60" width="1.00" height="4.97" fill="#96e628" />
<rect x="878.00" y="680.27" width="1.00" height="4.97" fill="#f0b40a" />
<rect x="878.00" y="684.93" width="1.00" height="4.97" fill="#ff8200" />
<rect x="878.00" y="555.00" width="1.00" height="13.30" fill="#0f3ef7" />
<rect x="878.00" y="530.00" width="1.00" height="25.30" fill="#0f14d1" />
<rect x="879.00" y="530.00" width="1.00" height="25.30" fill="#0e12cb" />
<rect x="880.00" y="675.60" width="1.00" height="4.97" fill="#96e628" />
<rect x="880.00" y="680.27" width="1.00" height="4.97" fill="#f0b40a" />
<rect x="880.00" y="684.93" width="1.00" height="4.97" fill="#ff8200" />
<rect x="880.00" y="664.00" width="1.00" height="11.90" fill="#d7e301" />
<rect x="880.00" y="647.00" width="1.00" height="17.30" fill="#98ea1b" />
<rect x="880.00" y="584.00" width="1.00" height="21.30" fill="#007cd3" />
<rect x="880.00" y="568.00" width="1.00" height="16.30" fill="#0a54fa" />
<rect x="880.00" y="555.00" width="1.00" height="13.30" fill="#1428f4" />
<rect x="880.00" y="530.00" width="1.00" height="25.30" fill="#101adc" />
<rect x="882.00" y="675.60" width="1.00" height="4.97" fill="#e4e10f" />
<rect x="882.00" y="680.27" width="1.00" height="4.97" fill="#f0b40a" />
<rect x="882.00" y="684.93" width="1.00" height="4.97" fill="#ff8200" />
<rect x="882.00" y="530.00" width="1.00" height="25.30" fill="#0b0ebb" />
<rect x="883.00" y="530.00" width="1.00" height="25.30" fill="#0c10c4" />
<rect x="884.00" y="530.00" width="1.00" height="25.30" fill="#1137f7" />
<rect x="884.00" y="522.50" width="1.00" height="7.80" fill="#1220e8" />
<rect x="885.00" y="568.00" width="1.00" height="16.30" fill="#0f3ef7" />
<rect x="885.00" y="555.00" width="1.00" height="13.30" fill="#121ee4" />
<rect x="885.00" y="530.00" width="1.00" height="25.30" fill="#1323ed" />
<rect x="887.00" y="675.60" width="1.00" height="4.97" fill="#e4e10f" />
<rect x="887.00" y="680.27" width="1.00" height="4.97" fill="#f0b40a" />
<rect x="887.00" y="684.93" width="1.00" height="4.97" fill="#ff8200" />
<rect x="889.00" y="568.00" width="1.00" height="16.30" fill="#1230f6" />
<rect x="889.00" y="555.00" width="1.00" height="13.30" fill="#132bf5" />
<rect x="889.00" y="530.00" width="1.00" height="25.30" fill="#0b0fbd" />
<rect x="889.00" y="522.50" width="1.00" height="7.80" fill="#0d11c5" />
<rect x="890.00" y="675.60" width="1.00" height="4.97" fill="#96e628" />
<rect x="890.00" y="680.27" width="1.00" height="4.97" fill="#f0b40a" />
<rect x="890.00" y="684.93" width="1.00" height="4.97" fill="#ff8200" />
<rect x="890.00" y="530.00" width="1.00" height="25.30" fill="#121fe5" />
<rect x="891.00" y="675.60" width="1.00" height="4.97" fill="#e4e10f" />
<rect x="891.00" y="680.27" width="1.00" height="4.97" fill="#f0b40a" />
<rect x="891.00" y="684.93" width="1.00" height="4.97" fill="#ff8200" />
<rect x="891.00" y="530.00" width="1.00" height="25.30" fill="#1233f6" />
<rect x="891.00" y="522.50" width="1.00" height="7.80" fill="#1221e9" />
<rect x="893.00" y="618.00" width="1.00" height="12.30" fill="#08b08b" />
<rect x="894.00" y="555.00" width="1.00" height="13.30" fill="#121ee4" />
<rect x="894.00" y="530.00" width="1.00" height="25.30" fill="#111ce0" />
<rect x="894.00" y="522.50" width="1.00" height="7.80" fill="#0a0eb9" />
<rect x="895.00" y="618.00" width="1.00" height="12.30" fill="#04a89e" />
<rect x="895.00" y="605.00" width="1.00" height="13.30" fill="#01a2ab" />
<rect x="895.00" y="584.00" width="1.00" height="21.30" fill="#0662ed" />
<rect x="896.00" y="675.60" width="1.00" height="4.97" fill="#e4e10f" />
<rect x="896.00" y="680.27" width="1.00" height="4.97" fill="#f0b40a" />
<rect x="896.00" y="684.93" width="1.00" height="4.97" fill="#ff8200" />
<rect x="896.00" y="555.00" width="1.00" height="13.30" fill="#132bf5" />
<rect x="896.00" y="530.00" width="1.00" height="25.30" fill="#05069a" />
<rect x="897.00" y="675.60" width="1.00" height="4.97" fill="#e4e10f" />
<rect x="897.00" y="680.27" width="1.00" height="4.97" fill="#f0b40a" />
<rect x="897.00" y="684.93" width="1.00" height="4.97" fill="#ff8200" />
<rect x="897.00" y="530.00" width="1.00" height="25.30" fill="#0f15d3" />
<rect x="897.00" y="522.50" width="1.00" height="7.80" fill="#0b0ebb" />
<rect x="900.00" y="584.00" width="1.00" height="21.30" fill="#0272dd" />
<rect x="900.00" y="568.00" width="1.00" height="16.30" fill="#0f3ef7" />
<rect x="901.00" y="630.00" width="1.00" height="17.30" fill="#31cd58" />
<rect x="903.00" y="675.60" width="1.00" height="4.97" fill="#96e628" />
<rect x="903.00" y="680.27" width="1.00" height="4.97" fill="#f0b40a" />
<rect x="903.00" y="684.93" width="1.00" height="4.97" fill="#ff8200" />
<rect x="903.00" y="555.00" width="1.00" height="13.30" fill="#1221e9" />
<rect x="904.00" y="664.00" width="1.00" height="11.90" fill="#cfe702" />
<rect x="905.00" y="555.00" width="1.00" height="13.30" fill="#121fe5" />
<rect x="905.00" y="530.00" width="1.00" height="25.30" fill="#1016d6" />
<rect x="906.00" y="647.00" width="1.00" height="17.30" fill="#aaed0f" />
<rect x="908.00" y="675.60" width="1.00" height="4.97" fill="#96e628" />
<rect x="908.00" y="680.27" width="1.00" height="4.97" fill="#f0b40a" />
<rect x="908.00" y="684.93" width="1.00" height="4.97" fill="#ff8200" />
<rect x="910.00" y="584.00" width="1.00" height="21.30" fill="#036de2" />
<rect x="910.00" y="568.00" width="1.00" height="16.30" fill="#0e42f8" />
<rect x="910.00" y="555.00" width="1.00" height="13.30" fill="#1220e8" />
<rect x="911.00" y="647.00" width="1.00" height="17.30" fill="#96ea1d" />
<rect x="911.00" y="568.00" width="1.00" height="16.30" fill="#0e44f8" />
<rect x="912.00" y="675.60" width="1.00" height="4.97" fill="#e4e10f" />
<rect x="912.00" y="680.27" width="1.00" height="4.97" fill="#f0b40a" />
<rect x="912.00" y="684.93" width="1.00" height="4.97" fill="#ff8200" />
<rect x="912.00" y="647.00" width="1.00" height="17.30" fill="#9aeb19" />
<rect x="913.00" y="675.60" width="1.00" height="4.97" fill="#e4e10f" />
<rect x="913.00" y="680.27" width="1.00" height="4.97" fill="#f0b40a" />
<rect x="913.00" y="684.93" width="1.00" height="4.97" fill="#ff8200" />
<rect x="913.00" y="630.00" width="1.00" height="17.30" fill="#51da41" />
<rect x="913.00" y="618.00" width="1.00" height="12.30" fill="#09b287" />
<rect x="914.00" y="675.60" width="1.00" height="4.97" fill="#e4e10f" />
<rect x="914.00" y="680.27" width="1.00" height="4.97" fill="#f0b40a" />
<rect x="914.00" y="684.93" width="1.00" height="4.97" fill="#ff8200" />
<rect x="914.00" y="664.00" width="1.00" height="11.90" fill="#d6e401" />
<rect x="915.00" y="675.60" width="1.00" height="4.97" fill="#e4e10f" />
<rect x="915.00" y="680.27" width="1.00" height="4.97" fill="#f0b40a" />
<rect x="915.00" y="684.93" width="1.00" height="4.97" fill="#ff8200" />
<rect x="916.00" y="675.60" width="1.00" height="4.97" fill="#e4e10f" />
<rect x="916.00" y="680.27" width="1.00" height="4.97" fill="#f0b40a" />
<rect x="916.00" y="684.93" width="1.00" height="4.97" fill="#ff8200" />
<rect x="917.00" y="675.60" width="1.00" height="4.97" fill="#e4e10f" />
<rect x="917.00" y="680.27" width="1.00" height="4.97" fill="#f0b40a" />
<rect x="917.00" y="684.93" width="1.00" height="4.97" fill="#ff8200" />
<rect x="918.00" y="675.60" width="1.00" height="4.97" fill="#e4e10f" />
<rect x="918.00" y="680.27" width="1.00" height="4.97" fill="#f0b40a" />
<rect x="918.00" y="684.93" width="1.00" height="4.97" fill="#ff8200" />
<rect x="918.00" y="630.00" width="1.00" height="17.30" fill="#29c860" />
<rect x="918.00" y="555.00" width="1.00" height="13.30" fill="#1323ec" />
<rect x="919.00" y="675.60" width="1.00" height="4.97" fill="#96e628" />
<rect x="919.00" y="680.27" width="1.00" height="4.97" fill="#f0b40a" />
<rect x="919.00" y="684.93" width="1.00" height="4.97" fill="#ff8200" />
<rect x="919.00" y="664.00" width="1.00" height="11.90" fill="#cbe802" />
<rect x="920.00" y="675.60" width="1.00" height="4.97" fill="#e4e10f" />
<rect x="920.00" y="680.27" width="1.00" height="4.97" fill="#f0b40a" />
<rect x="920.00" y="684.93" width="1.00" height="4.97" fill="#ff8200" />
<rect x="920.00" y="522.50" width="1.00" height="7.80" fill="#111de1" />
<rect x="921.00" y="568.00" width="1.00" height="16.30" fill="#0957f8" />
<rect x="921.00" y="555.00" width="1.00" height="13.30" fill="#121fe5" />
<rect x="921.00" y="530.00" width="1.00" height="25.30" fill="#0c0fbf" />
<rect x="923.00" y="568.00" width="1.00" height="16.30" fill="#0f3df7" />
<rect x="925.00" y="584.00" width="1.00" height="21.30" fill="#036ee1" />
<rect x="925.00" y="568.00" width="1.00" height="16.30" fill="#0b4ff9" />
<rect x="926.00" y="675.60" width="1.00" height="4.97" fill="#e4e10f" />
<rect x="926.00" y="680.27" width="1.00" height="4.97" fill="#f0b40a" />
<rect x="926.00" y="684.93" width="1.00" height="4.97" fill="#ff8200" />
<rect x="926.00" y="584.00" width="1.00" height="21.30" fill="#0271de" />
<rect x="926.00" y="568.00" width="1.00" height="16.30" fill="#1039f7" />
<rect x="926.00" y="555.00" width="1.00" height="13.30" fill="#1230f6" />
<rect x="927.00" y="675.60" width="1.00" height="4.97" fill="#e4e10f" />
<rect x="927.00" y="680.27" width="1.00" height="4.97" fill="#f0b40a" />
<rect x="927.00" y="684.93" width="1.00" height="4.97" fill="#ff8200" />
<rect x="927.00" y="630.00" width="1.00" height="17.30" fill="#2bca5e" />
<rect x="928.00" y="675.60" width="1.00" height="4.97" fill="#e4e10f" />
<rect x="928.00" y="680.27" width="1.00" height="4.97" fill="#f0b40a" />
<rect x="928.00" y="684.93" width="1.00" height="4.97" fill="#ff8200" />
<rect x="928.00" y="514.00" width="1.00" height="8.80" fill="#1325f0" />
<rect x="929.00" y="675.60" width="1.00" height="4.97" fill="#e4e10f" />
<rect x="929.00" y="680.27" width="1.00" height="4.97" fill="#f0b40a" />
<rect x="929.00" y="684.93" width="1.00" height="4.97" fill="#ff8200" />
<rect x="929.00" y="630.00" width="1.00" height="17.30" fill="#3ad34e" />
<rect x="929.00" y="605.00" width="1.00" height="13.30" fill="#01a1ac" />
<rect x="929.00" y="584.00" width="1.00" height="21.30" fill="#0566e9" />
<rect x="929.00" y="530.00" width="1.00" height="25.30" fill="#0e12ca" />
<rect x="929.00" y="522.50" width="1.00" height="7.80" fill="#111bde" />
<rect x="930.00" y="675.60" width="1.00" height="4.97" fill="#e4e10f" />
<rect x="930.00" y="680.27" width="1.00" height="4.97" fill="#f0b40a" />
<rect x="930.00" y="684.93" width="1.00" height="4.97" fill="#ff8200" />
<rect x="930.00" y="664.00" width="1.00" height="11.90" fill="#bfed04" />
<rect x="930.00" y="647.00" width="1.00" height="17.30" fill="#a1ec15" />
<rect x="930.00" y="555.00" width="1.00" height="13.30" fill="#1232f6" />
<rect x="930.00" y="530.00" width="1.00" height="25.30" fill="#111bdf" />
<rect x="933.00" y="664.00" width="1.00" height="11.90" fill="#c5eb03" />
<rect x="934.00" y="675.60" width="1.00" height="4.97" fill="#96e628" />
<rect x="934.00" y="680.27" width="1.00" height="4.97" fill="#f0b40a" />
<rect x="934.00" y="684.93" width="1.00" height="4.97" fill="#ff8200" />
<rect x="934.00" y="530.00" width="1.00" height="25.30" fill="#1324ed" />
<rect x="935.00" y="675.60" width="1.00" height="4.97" fill="#e4e10f" />
<rect x="935.00" y="680.27" width="1.00" height="4.97" fill="#f0b40a" />
<rect x="935.00" y="684.93" width="1.00" height="4.97" fill="#ff8200" />
<rect x="937.00" y="568.00" width="1.00" height="16.30" fill="#0a54fa" />
<rect x="937.00" y="555.00" width="1.00" height="13.30" fill="#1326f1" />
<rect x="940.00" y="630.00" width="1.00" height="17.30" fill="#44d747" />
<rect x="941.00" y="530.00" width="1.00" height="25.30" fill="#1017d7" />
<rect x="946.00" y="630.00" width="1.00" height="17.30" fill="#28c861" />
<rect x="947.00" y="675.60" width="1.00" height="4.97" fill="#e4e10f" />
<rect x="947.00" y="680.27" width="1.00" height="4.97" fill="#f0b40a" />
<rect x="947.00" y="684.93" width="1.00" height="4.97" fill="#ff8200" />
<rect x="948.00" y="675.60" width="1.00" height="4.97" fill="#e4e10f" />
<rect x="948.00" y="680.27" width="1.00" height="4.97" fill="#f0b40a" />
<rect x="948.00" y="684.93" width="1.00" height="4.97" fill="#ff8200" />
<rect x="949.00" y="675.60" width="1.00" height="4.97" fill="#e4e10f" />
<rect x="949.00" y="680.27" width="1.00" height="4.97" fill="#f0b40a" />
<rect x="949.00" y="684.93" width="1.00" height="4.97" fill="#ff8200" />
<rect x="951.00" y="675.60" width="1.00" height="4.97" fill="#e4e10f" />
<rect x="951.00" y="680.27" width="1.00" height="4.97" fill="#f0b40a" />
<rect x="951.00" y="684.93" width="1.00" height="4.97" fill="#ff8200" />
<rect x="952.00" y="555.00" width="1.00" height="13.30" fill="#1326f1" />
<rect x="952.00" y="530.00" width="1.00" height="25.30" fill="#040597" />
<rect x="952.00" y="522.50" width="1.00" height="7.80" fill="#111cdf" />
<rect x="953.00" y="618.00" width="1.00" height="12.30" fill="#09b189" />
<rect x="954.00" y="675.60" width="1.00" height="4.97" fill="#96e628" />
<rect x="954.00" y="680.27" width="1.00" height="4.97" fill="#f0b40a" />
<rect x="954.00" y="684.93" width="1.00" height="4.97" fill="#ff8200" />
<rect x="954.00" y="630.00" width="1.00" height="17.30" fill="#25c665" />
<rect x="954.00" y="568.00" width="1.00" height="16.30" fill="#0c4cf9" />
<rect x="954.00" y="555.00" width="1.00" height="13.30" fill="#1426f2" />
<rect x="955.00" y="675.60" width="1.00" height="4.97" fill="#96e628" />
<rect x="955.00" y="680.27" width="1.00" height="4.97" fill="#f0b40a" />
<rect x="955.00" y="684.93" width="1.00" height="4.97" fill="#ff8200" />
<rect x="955.00" y="530.00" width="1.00" height="25.30" fill="#111bde" />
<rect x="956.00" y="675.60" width="1.00" height="4.97" fill="#e4e10f" />
<rect x="956.00" y="680.27" width="1.00" height="4.97" fill="#f0b40a" />
<rect x="956.00" y="684.93" width="1.00" height="4.97" fill="#ff8200" />
<rect x="957.00" y="605.00" width="1.00" height="13.30" fill="#0096b9" />
<rect x="957.00" y="584.00" width="1.00" height="21.30" fill="#0080cf" />
<rect x="958.00" y="530.00" width="1.00" height="25.30" fill="#0f15d3" />
<rect x="960.00" y="530.00" width="1.00" height="25.30" fill="#0e13cd" />
<rect x="961.00" y="530.00" width="1.00" height="25.30" fill="#1017d7" />
<rect x="968.00" y="555.00" width="1.00" height="13.30" fill="#121fe4" />
<rect x="968.00" y="530.00" width="1.00" height="25.30" fill="#1221e9" />
<rect x="969.00" y="605.00" width="1.00" height="13.30" fill="#008cc3" />
<rect x="970.00" y="530.00" width="1.00" height="25.30" fill="#0709a5" />
<rect x="973.00" y="675.60" width="1.00" height="4.97" fill="#e4e10f" />
<rect x="973.00" y="680.27" width="1.00" height="4.97" fill="#f0b40a" />
<rect x="973.00" y="684.93" width="1.00" height="4.97" fill="#ff8200" />
<rect x="973.00" y="664.00" width="1.00" height="11.90" fill="#bdee04" />
<rect x="973.00" y="555.00" width="1.00" height="13.30" fill="#1133f6" />
<rect x="973.00" y="530.00" width="1.00" height="25.30" fill="#132df6" />
<rect x="975.00" y="530.00" width="1.00" height="25.30" fill="#0a0db7" />
<rect x="975.00" y="522.50" width="1.00" height="7.80" fill="#0b0fbd" />
<rect x="976.00" y="555.00" width="1.00" height="13.30" fill="#111ee3" />
<rect x="976.00" y="530.00" width="1.00" height="25.30" fill="#111de2" />
<rect x="982.00" y="555.00" width="1.00" height="13.30" fill="#1324ee" />
<rect x="983.00" y="675.60" width="1.00" height="4.97" fill="#96e628" />
<rect x="983.00" y="680.27" width="1.00" height="4.97" fill="#f0b40a" />
<rect x="983.00" y="684.93" width="1.00" height="4.97" fill="#ff8200" />
<rect x="987.00" y="522.50" width="1.00" height="7.80" fill="#0d11c5" />
<rect x="989.00" y="618.00" width="1.00" height="12.30" fill="#0ab384" />
<rect x="991.00" y="555.00" width="1.00" height="13.30" fill="#1039f7" />
<rect x="992.00" y="584.00" width="1.00" height="21.30" fill="#0079d6" />
<rect x="994.00" y="675.60" width="1.00" height="4.97" fill="#e4e10f" />
<rect x="994.00" y="680.27" width="1.00" height="4.97" fill="#f0b40a" />
<rect x="994.00" y="684.93" width="1.00" height="4.97" fill="#ff8200" />
<rect x="995.00" y="568.00" width="1.00" height="16.30" fill="#103bf7" />
<rect x="995.00" y="555.00" width="1.00" height="13.30" fill="#1325f0" />
<rect x="999.00" y="618.00" width="1.00" height="12.30" fill="#04a89c" />
<rect x="1003.00" y="630.00" width="1.00" height="17.30" fill="#2dcb5c" />
<rect x="1003.00" y="605.00" width="1.00" height="13.30" fill="#00a1ad" />
<rect x="1005.00" y="664.00" width="1.00" height="11.90" fill="#d9e200" />
<rect x="1006.00" y="675.60" width="1.00" height="4.97" fill="#e4e10f" />
<rect x="1006.00" y="680.27" width="1.00" height="4.97" fill="#f0b40a" />
<rect x="1006.00" y="684.93" width="1.00" height="4.97" fill="#ff8200" />
<rect x="1006.00" y="664.00" width="1.00" height="11.90" fill="#d2e501" />
<rect x="1006.00" y="584.00" width="1.00" height="21.30" fill="#007ed1" />
<rect x="1006.00" y="568.00" width="1.00" height="16.30" fill="#0a55fa" />
<rect x="1006.00" y="555.00" width="1.00" height="13.30" fill="#1325f1" />
<rect x="1006.00" y="530.00" width="1.00" height="25.30" fill="#111add" />
<rect x="1009.00" y="675.60" width="1.00" height="4.97" fill="#e4e10f" />
<rect x="1009.00" y="680.27" width="1.00" height="4.97" fill="#f0b40a" />
<rect x="1009.00" y="684.93" width="1.00" height="4.97" fill="#ff8200" />
<rect x="1009.00" y="664.00" width="1.00" height="11.90" fill="#baf005" />
<rect x="1010.00" y="664.00" width="1.00" height="11.90" fill="#d5e401" />
<rect x="1010.00" y="647.00" width="1.00" height="17.30" fill="#7ee52a" />
<rect x="1013.00" y="675.60" width="1.00" height="4.97" fill="#e4e10f" />
<rect x="1013.00" y="680.27" width="1.00" height="4.97" fill="#f0b40a" />
<rect x="1013.00" y="684.93" width="1.00" height="4.97" fill="#ff8200" />
<rect x="1014.00" y="675.60" width="1.00" height="4.97" fill="#96e628" />
<rect x="1014.00" y="680.27" width="1.00" height="4.97" fill="#f0b40a" />
<rect x="1014.00" y="684.93" width="1.00" height="4.97" fill="#ff8200" />
<rect x="1014.00" y="664.00" width="1.00" height="11.90" fill="#bfed04" />
<rect x="1014.00" y="647.00" width="1.00" height="17.30" fill="#84e627" />
<rect x="1015.00" y="675.60" width="1.00" height="4.97" fill="#96e628" />
<rect x="1015.00" y="680.27" width="1.00" height="4.97" fill="#f0b40a" />
<rect x="1015.00" y="684.93" width="1.00" height="4.97" fill="#ff8200" />
<rect x="1017.00" y="675.60" width="1.00" height="4.97" fill="#e4e10f" />
<rect x="1017.00" y="680.27" width="1.00" height="4.97" fill="#f0b40a" />
<rect x="1017.00" y="684.93" width="1.00" height="4.97" fill="#ff8200" />
<rect x="1017.00" y="618.00" width="1.00" height="12.30" fill="#09b286" />
<rect x="1017.00" y="605.00" width="1.00" height="13.30" fill="#009fb0" />
<rect x="1017.00" y="584.00" width="1.00" height="21.30" fill="#007ed1" />
<rect x="1017.00" y="568.00" width="1.00" height="16.30" fill="#0e44f8" />
<rect x="1018.00" y="675.60" width="1.00" height="4.97" fill="#e4e10f" />
<rect x="1018.00" y="680.27" width="1.00" height="4.97" fill="#f0b40a" />
<rect x="1018.00" y="684.93" width="1.00" height="4.97" fill="#ff8200" />
<rect x="1019.00" y="675.60" width="1.00" height="4.97" fill="#96e628" />
<rect x="1019.00" y="680.27" width="1.00" height="4.97" fill="#f0b40a" />
<rect x="1019.00" y="684.93" width="1.00" height="4.97" fill="#ff8200" />
<rect x="1020.00" y="664.00" width="1.00" height="11.90" fill="#dddf00" />
<rect x="1021.00" y="530.00" width="1.00" height="25.30" fill="#080aac" />
<rect x="1022.00" y="555.00" width="1.00" height="13.30" fill="#132ef6" />
<rect x="1023.00" y="530.00" width="1.00" height="25.30" fill="#1019db" />
<rect x="1025.00" y="530.00" width="1.00" height="25.30" fill="#121fe6" />
<rect x="1026.00" y="530.00" width="1.00" height="25.30" fill="#1325f0" />
<rect x="1028.00" y="618.00" width="1.00" height="12.30" fill="#06ac94" />
<rect x="1029.00" y="675.60" width="1.00" height="4.97" fill="#e4e10f" />
<rect x="1029.00" y="680.27" width="1.00" height="4.97" fill="#f0b40a" />
<rect x="1029.00" y="684.93" width="1.00" height="4.97" fill="#ff8200" />
<rect x="1030.00" y="675.60" width="1.00" height="4.97" fill="#e4e10f" />
<rect x="1030.00" y="680.27" width="1.00" height="4.97" fill="#f0b40a" />
<rect x="1030.00" y="684.93" width="1.00" height="4.97" fill="#ff8200" />
<rect x="1031.00" y="555.00" width="1.00" height="13.30" fill="#1427f3" />
<rect x="1032.00" y="675.60" width="1.00" height="4.97" fill="#e4e10f" />
<rect x="1032.00" y="680.27" width="1.00" height="4.97" fill="#f0b40a" />
<rect x="1032.00" y="684.93" width="1.00" height="4.97" fill="#ff8200" />
<rect x="1032.00" y="664.00" width="1.00" height="11.90" fill="#d9e200" />
<rect x="1032.00" y="555.00" width="1.00" height="13.30" fill="#103bf7" />
<rect x="1033.00" y="675.60" width="1.00" height="4.97" fill="#e4e10f" />
<rect x="1033.00" y="680.27" width="1.00" height="4.97" fill="#f0b40a" />
<rect x="1033.00" y="684.93" width="1.00" height="4.97" fill="#ff8200" />
<rect x="1034.00" y="675.60" width="1.00" height="4.97" fill="#e4e10f" />
<rect x="1034.00" y="680.27" width="1.00" height="4.97" fill="#f0b40a" />
<rect x="1034.00" y="684.93" width="1.00" height="4.97" fill="#ff8200" />
<rect x="1034.00" y="664.00" width="1.00" height="11.90" fill="#c5eb03" />
<rect x="1034.00" y="605.00" width="1.00" height="13.30" fill="#01a2ab" />
<rect x="1035.00" y="675.60" width="1.00" height="4.97" fill="#e4e10f" />
<rect x="1035.00" y="680.27" width="1.00" height="4.97" fill="#f0b40a" />
<rect x="1035.00" y="684.93" width="1.00" height="4.97" fill="#ff8200" />
<rect x="1036.00" y="675.60" width="1.00" height="4.97" fill="#e4e10f" />
<rect x="1036.00" y="680.27" width="1.00" height="4.97" fill="#f0b40a" />
<rect x="1036.00" y="684.93" width="1.00" height="4.97" fill="#ff8200" />
<rect x="1038.00" y="618.00" width="1.00" height="12.30" fill="#0cb580" />
<rect x="1038.00" y="605.00" width="1.00" height="13.30" fill="#0093bc" />
<rect x="1038.00" y="584.00" width="1.00" height="21.30" fill="#036fe0" />
<rect x="1038.00" y="568.00" width="1.00" height="16.30" fill="#0e41f8" />
<rect x="1038.00" y="555.00" width="1.00" height="13.30" fill="#1426f2" />
<rect x="1038.00" y="530.00" width="1.00" height="25.30" fill="#0d11c7" />
<rect x="1039.00" y="584.00" width="1.00" height="21.30" fill="#046be4" />
<rect x="1039.00" y="568.00" width="1.00" height="16.30" fill="#0a55fa" />
<rect x="1039.00" y="530.00" width="1.00" height="25.30" fill="#111de1" />
<rect x="1041.00" y="675.60" width="1.00" height="4.97" fill="#e4e10f" />
<rect x="1041.00" y="680.27" width="1.00" height="4.97" fill="#f0b40a" />
<rect x="1041.00" y="684.93" width="1.00" height="4.97" fill="#ff8200" />
<rect x="1041.00" y="664.00" width="1.00" height="11.90" fill="#c5eb03" />
<rect x="1041.00" y="530.00" width="1.00" height="25.30" fill="#1221e8" />
<rect x="1042.00" y="675.60" width="1.00" height="4.97" fill="#e4e10f" />
<rect x="1042.00" y="680.27" width="1.00" height="4.97" fill="#f0b40a" />
<rect x="1042.00" y="684.93" width="1.00" height="4.97" fill="#ff8200" />
<rect x="1043.00" y="675.60" width="1.00" height="4.97" fill="#e4e10f" />
<rect x="1043.00" y="680.27" width="1.00" height="4.97" fill="#f0b40a" />
<rect x="1043.00" y="684.93" width="1.00" height="4.97" fill="#ff8200" />
<rect x="1045.00" y="555.00" width="1.00" height="13.30" fill="#1137f7" />
<rect x="1047.00" y="675.60" width="1.00" height="4.97" fill="#e4e10f" />
<rect x="1047.00" y="680.27" width="1.00" height="4.97" fill="#f0b40a" />
<rect x="1047.00" y="684.93" width="1.00" height="4.97" fill="#ff8200" />
<rect x="1048.00" y="675.60" width="1.00" height="4.97" fill="#e4e10f" />
<rect x="1048.00" y="680.27" width="1.00" height="4.97" fill="#f0b40a" />
<rect x="1048.00" y="684.93" width="1.00" height="4.97" fill="#ff8200" />
<rect x="1050.00" y="568.00" width="1.00" height="16.30" fill="#0e43f8" />
<rect x="1053.00" y="664.00" width="1.00" height="11.90" fill="#bfed04" />
<rect x="1053.00" y="647.00" width="1.00" height="17.30" fill="#98ea1b" />
<rect x="1054.00" y="530.00" width="1.00" height="25.30" fill="#111de2" />
<rect x="1055.00" y="630.00" width="1.00" height="17.30" fill="#40d649" />
<rect x="1056.00" y="530.00" width="1.00" height="25.30" fill="#1220e7" />
<rect x="1056.00" y="522.50" width="1.00" height="7.80" fill="#1019db" />
<rect x="1057.00" y="605.00" width="1.00" height="13.30" fill="#00a1ad" />
<rect x="1057.00" y="522.50" width="1.00" height="7.80" fill="#0a0eb8" />
<rect x="1059.00" y="584.00" width="1.00" height="21.30" fill="#0272dd" />
<rect x="1059.00" y="568.00" width="1.00" height="16.30" fill="#0e44f8" />
<rect x="1059.00" y="555.00" width="1.00" height="13.30" fill="#1134f6" />
<rect x="1060.00" y="605.00" width="1.00" height="13.30" fill="#0087c8" />
<rect x="1062.00" y="530.00" width="1.00" height="25.30" fill="#0e13cd" />
<rect x="1065.00" y="530.00" width="1.00" height="25.30" fill="#111ce1" />
<rect x="1065.00" y="522.50" width="1.00" height="7.80" fill="#121ee4" />
<rect x="1066.00" y="530.00" width="1.00" height="25.30" fill="#1325f0" />
<rect x="1067.00" y="530.00" width="1.00" height="25.30" fill="#121fe5" />
<rect x="1070.00" y="555.00" width="1.00" height="13.30" fill="#0f40f8" />
<rect x="1074.00" y="514.00" width="1.00" height="8.80" fill="#0d12ca" />
<rect x="1076.00" y="630.00" width="1.00" height="17.30" fill="#2ecc5a" />
<rect x="1076.00" y="568.00" width="1.00" height="16.30" fill="#1134f6" />
<rect x="1076.00" y="555.00" width="1.00" height="13.30" fill="#111de2" />
<rect x="1076.00" y="530.00" width="1.00" height="25.30" fill="#0e13cc" />
<rect x="1076.00" y="522.50" width="1.00" height="7.80" fill="#1220e6" />
<rect x="1077.00" y="555.00" width="1.00" height="13.30" fill="#1232f6" />
<rect x="1078.00" y="530.00" width="1.00" height="25.30" fill="#040699" />
<rect x="1079.00" y="584.00" width="1.00" height="21.30" fill="#0662ed" />
</g>
<line x1="136.50" y1="690.00" x2="136.50" y2="692.00" stroke="#444" stroke-width="1"  shape-rendering="crispEdges"/>
<line x1="177.50" y1="690.00" x2="177.50" y2="692.00" stroke="#444" stroke-width="1"  shape-rendering="crispEdges"/>
<line x1="218.50" y1="688.00" x2="218.50" y2="692.00" stroke="#444" stroke-width="1"  shape-rendering="crispEdges"/>
<line x1="259.50" y1="690.00" x2="259.50" y2="692.00" stroke="#444" stroke-width="1"  shape-rendering="crispEdges"/>
<line x1="300.50" y1="690.00" x2="300.50" y2="692.00" stroke="#444" stroke-width="1"  shape-rendering="crispEdges"/>
<line x1="341.50" y1="688.00" x2="341.50" y2="692.00" stroke="#444" stroke-width="1"  shape-rendering="crispEdges"/>
<line x1="382.50" y1="690.00" x2="382.50" y2="692.00" stroke="#444" stroke-width="1"  shape-rendering="crispEdges"/>
<line x1="423.50" y1="690.00" x2="423.50" y2="692.00" stroke="#444" stroke-width="1"  shape-rendering="crispEdges"/>
<line x1="464.50" y1="688.00" x2="464.50" y2="692.00" stroke="#444" stroke-width="1"  shape-rendering="crispEdges"/>
<line x1="505.50" y1="690.00" x2="505.50" y2="692.00" stroke="#444" stroke-width="1"  shape-rendering="crispEdges"/>
<line x1="546.50" y1="690.00" x2="546.50" y2="692.00" stroke="#444" stroke-width="1"  shape-rendering="crispEdges"/>
<line x1="587.50" y1="688.00" x2="587.50" y2="692.00" stroke="#444" stroke-width="1"  shape-rendering="crispEdges"/>
<line x1="628.50" y1="690.00" x2="628.50" y2="692.00" stroke="#444" stroke-width="1"  shape-rendering="crispEdges"/>
<line x1="669.50" y1="690.00" x2="669.50" y2="692.00" stroke="#444" stroke-width="1"  shape-rendering="crispEdges"/>
<line x1="710.50" y1="688.00" x2="710.50" y2="692.00" stroke="#444" stroke-width="1"  shape-rendering="crispEdges"/>
<line x1="751.50" y1="690.00" x2="751.50" y2="692.00" stroke="#444" stroke-width="1"  shape-rendering="crispEdges"/>
<line x1="792.50" y1="690.00" x2="792.50" y2="692.00" stroke="#444" stroke-width="1"  shape-rendering="crispEdges"/>
<line x1="833.50" y1="688.00" x2="833.50" y2="692.00" stroke="#444" stroke-width="1"  shape-rendering="crispEdges"/>
<line x1="874.50" y1="690.00" x2="874.50" y2="692.00" stroke="#444" stroke-width="1"  shape-rendering="crispEdges"/>
<line x1="915.50" y1="690.00" x2="915.50" y2="692.00" stroke="#444" stroke-width="1"  shape-rendering="crispEdges"/>
<line x1="956.50" y1="688.00" x2="956.50" y2="692.00" stroke="#444" stroke-width="1"  shape-rendering="crispEdges"/>
<line x1="997.50" y1="690.00" x2="997.50" y2="692.00" stroke="#444" stroke-width="1"  shape-rendering="crispEdges"/>
<line x1="1038.50" y1="690.00" x2="1038.50" y2="692.00" stroke="#444" stroke-width="1"  shape-rendering="crispEdges"/>
<rect x="95.00" y="695.00" width="986.00" height="16.00" fill="#262626" />
<rect x="576.50" y="696.00" width="503.50" height="14.00" fill="#ff0000" />
<rect x="97.00" y="696.00" width="479.50" height="14.00" fill="#00fa00" />
<rect x="576.00" y="696.00" width="0.90" height="14.00" fill="#401000" />
<text x="79.80" y="707.30" text-anchor="end" class="w" style="letter-spacing:0.05px">Sunlight?</text>
<line x1="136.50" y1="711.00" x2="136.50" y2="715.00" stroke="#262626" stroke-width="1"  shape-rendering="crispEdges"/>
<line x1="177.50" y1="711.00" x2="177.50" y2="715.00" stroke="#262626" stroke-width="1"  shape-rendering="crispEdges"/>
<line x1="218.50" y1="711.00" x2="218.50" y2="719.00" stroke="#262626" stroke-width="1"  shape-rendering="crispEdges"/>
<line x1="259.50" y1="711.00" x2="259.50" y2="715.00" stroke="#262626" stroke-width="1"  shape-rendering="crispEdges"/>
<line x1="300.50" y1="711.00" x2="300.50" y2="715.00" stroke="#262626" stroke-width="1"  shape-rendering="crispEdges"/>
<line x1="341.50" y1="711.00" x2="341.50" y2="719.00" stroke="#262626" stroke-width="1"  shape-rendering="crispEdges"/>
<line x1="382.50" y1="711.00" x2="382.50" y2="715.00" stroke="#262626" stroke-width="1"  shape-rendering="crispEdges"/>
<line x1="423.50" y1="711.00" x2="423.50" y2="715.00" stroke="#262626" stroke-width="1"  shape-rendering="crispEdges"/>
<line x1="464.50" y1="711.00" x2="464.50" y2="719.00" stroke="#262626" stroke-width="1"  shape-rendering="crispEdges"/>
<line x1="505.50" y1="711.00" x2="505.50" y2="715.00" stroke="#262626" stroke-width="1"  shape-rendering="crispEdges"/>
<line x1="546.50" y1="711.00" x2="546.50" y2="715.00" stroke="#262626" stroke-width="1"  shape-rendering="crispEdges"/>
<line x1="587.50" y1="711.00" x2="587.50" y2="719.00" stroke="#262626" stroke-width="1"  shape-rendering="crispEdges"/>
<line x1="628.50" y1="711.00" x2="628.50" y2="715.00" stroke="#262626" stroke-width="1"  shape-rendering="crispEdges"/>
<line x1="669.50" y1="711.00" x2="669.50" y2="715.00" stroke="#262626" stroke-width="1"  shape-rendering="crispEdges"/>
<line x1="710.50" y1="711.00" x2="710.50" y2="719.00" stroke="#262626" stroke-width="1"  shape-rendering="crispEdges"/>
<line x1="751.50" y1="711.00" x2="751.50" y2="715.00" stroke="#262626" stroke-width="1"  shape-rendering="crispEdges"/>
<line x1="792.50" y1="711.00" x2="792.50" y2="715.00" stroke="#262626" stroke-width="1"  shape-rendering="crispEdges"/>
<line x1="833.50" y1="711.00" x2="833.50" y2="719.00" stroke="#262626" stroke-width="1"  shape-rendering="crispEdges"/>
<line x1="874.50" y1="711.00" x2="874.50" y2="715.00" stroke="#262626" stroke-width="1"  shape-rendering="crispEdges"/>
<line x1="915.50" y1="711.00" x2="915.50" y2="715.00" stroke="#262626" stroke-width="1"  shape-rendering="crispEdges"/>
<line x1="956.50" y1="711.00" x2="956.50" y2="719.00" stroke="#262626" stroke-width="1"  shape-rendering="crispEdges"/>
<line x1="997.50" y1="711.00" x2="997.50" y2="715.00" stroke="#262626" stroke-width="1"  shape-rendering="crispEdges"/>
<line x1="1038.50" y1="711.00" x2="1038.50" y2="715.00" stroke="#262626" stroke-width="1"  shape-rendering="crispEdges"/>
<line x1="1080.50" y1="711.00" x2="1080.50" y2="719.00" stroke="#262626" stroke-width="1"  shape-rendering="crispEdges"/>
<text x="218.20" y="733.70" text-anchor="middle" class="n" style="letter-spacing:0.15px">03:00</text>
<text x="218.20" y="748.70" text-anchor="middle" class="n" style="letter-spacing:0.15px">17.50</text>
<text x="218.20" y="763.70" text-anchor="middle" class="n" style="letter-spacing:0.15px">45.84</text>
<text x="218.20" y="778.70" text-anchor="middle" class="n" style="letter-spacing:0.15px">82.45</text>
<text x="341.20" y="733.70" text-anchor="middle" class="n" style="letter-spacing:0.15px">06:00</text>
<text x="341.20" y="748.70" text-anchor="middle" class="n" style="letter-spacing:0.15px">17.54</text>
<text x="341.20" y="763.70" text-anchor="middle" class="n" style="letter-spacing:0.15px">45.65</text>
<text x="341.20" y="778.70" text-anchor="middle" class="n" style="letter-spacing:0.15px">82.11</text>
<text x="464.20" y="733.70" text-anchor="middle" class="n" style="letter-spacing:0.15px">09:00</text>
<text x="464.20" y="748.70" text-anchor="middle" class="n" style="letter-spacing:0.15px">17.57</text>
<text x="464.20" y="763.70" text-anchor="middle" class="n" style="letter-spacing:0.15px">45.46</text>
<text x="464.20" y="778.70" text-anchor="middle" class="n" style="letter-spacing:0.15px">81.75</text>
<text x="587.20" y="733.70" text-anchor="middle" class="n" style="letter-spacing:0.15px">12:00</text>
<text x="587.20" y="748.70" text-anchor="middle" class="n" style="letter-spacing:0.15px">17.60</text>
<text x="587.20" y="763.70" text-anchor="middle" class="n" style="letter-spacing:0.15px">45.25</text>
<text x="587.20" y="778.70" text-anchor="middle" class="n" style="letter-spacing:0.15px">81.36</text>
<text x="710.20" y="733.70" text-anchor="middle" class="n" style="letter-spacing:0.15px">15:00</text>
<text x="710.20" y="748.70" text-anchor="middle" class="n" style="letter-spacing:0.15px">17.64</text>
<text x="710.20" y="763.70" text-anchor="middle" class="n" style="letter-spacing:0.15px">45.04</text>
<text x="710.20" y="778.70" text-anchor="middle" class="n" style="letter-spacing:0.15px">80.96</text>
<text x="833.20" y="733.70" text-anchor="middle" class="n" style="letter-spacing:0.15px">18:00</text>
<text x="833.20" y="748.70" text-anchor="middle" class="n" style="letter-spacing:0.15px">17.67</text>
<text x="833.20" y="763.70" text-anchor="middle" class="n" style="letter-spacing:0.15px">44.83</text>
<text x="833.20" y="778.70" text-anchor="middle" class="n" style="letter-spacing:0.15px">80.54</text>
<text x="956.20" y="733.70" text-anchor="middle" class="n" style="letter-spacing:0.15px">21:00</text>
<text x="956.20" y="748.70" text-anchor="middle" class="n" style="letter-spacing:0.15px">17.71</text>
<text x="956.20" y="763.70" text-anchor="middle" class="n" style="letter-spacing:0.15px">44.60</text>
<text x="956.20" y="778.70" text-anchor="middle" class="n" style="letter-spacing:0.15px">80.10</text>
<text x="1080.10" y="733.70" text-anchor="middle" class="n" style="letter-spacing:0.15px">00:00</text>
<text x="1080.10" y="748.70" text-anchor="middle" class="n" style="letter-spacing:0.15px">17.74</text>
<text x="1080.10" y="763.70" text-anchor="middle" class="n" style="letter-spacing:0.15px">44.37</text>
<text x="1080.10" y="778.70" text-anchor="middle" class="n" style="letter-spacing:0.15px">79.64</text>
<text x="61.30" y="748.50" text-anchor="end" class="w" style="letter-spacing:0.65px">LT (hrs)</text>
<text x="60.80" y="763.50" text-anchor="end" class="w" style="letter-spacing:0.5px">Rs</text>
<text x="61.20" y="778.50" text-anchor="end" class="w" style="letter-spacing:0.5px">Dipole L</text>
<clipPath id="b1"><rect x="215" y="802.3" width="151.39999999999998" height="147.70000000000005"/></clipPath>
<g clip-path="url(#b1)">
<path d="M303.00 800.50 C302.25 800.97 301.23 801.48 298.50 803.30 C295.77 805.12 290.03 808.70 286.60 811.40 C283.17 814.10 280.43 816.98 277.90 819.50 C275.37 822.02 273.57 823.97 271.40 826.50 C269.23 829.03 266.88 831.53 264.90 834.70 C262.92 837.87 261.03 841.90 259.50 845.50 C257.97 849.10 256.70 852.68 255.70 856.30 C254.70 859.92 253.92 863.75 253.50 867.20 C253.08 870.65 253.20 873.73 253.20 877.00 C253.20 880.27 253.08 883.35 253.50 886.80 C253.92 890.25 254.70 894.08 255.70 897.70 C256.70 901.32 257.97 904.90 259.50 908.50 C261.03 912.10 262.92 916.13 264.90 919.30 C266.88 922.47 269.23 924.97 271.40 927.50 C273.57 930.03 275.37 931.98 277.90 934.50 C280.43 937.02 283.17 939.90 286.60 942.60 C290.03 945.30 295.77 948.88 298.50 950.70 C301.23 952.52 302.25 953.03 303.00 953.50" fill="none" stroke="#0000ff" stroke-width="1.05" stroke-dasharray="1.9,1.3"/>
<path d="M360.00 800.70 C358.97 801.03 357.55 801.47 353.80 802.70 C350.05 803.93 342.75 806.20 337.50 808.10 C332.25 810.00 327.00 812.12 322.30 814.10 C317.60 816.08 313.45 817.93 309.30 820.00 C305.15 822.07 301.18 824.23 297.40 826.50 C293.62 828.77 289.93 831.07 286.60 833.60 C283.27 836.13 280.12 838.82 277.40 841.70 C274.68 844.58 272.20 847.73 270.30 850.90 C268.40 854.07 267.13 857.45 266.00 860.70 C264.87 863.95 263.97 867.68 263.50 870.40 C263.03 873.12 263.20 874.80 263.20 877.00 C263.20 879.20 263.03 880.88 263.50 883.60 C263.97 886.32 264.87 890.05 266.00 893.30 C267.13 896.55 268.40 899.93 270.30 903.10 C272.20 906.27 274.68 909.42 277.40 912.30 C280.12 915.18 283.27 917.87 286.60 920.40 C289.93 922.93 293.62 925.23 297.40 927.50 C301.18 929.77 305.15 931.93 309.30 934.00 C313.45 936.07 317.60 937.92 322.30 939.90 C327.00 941.88 332.25 944.00 337.50 945.90 C342.75 947.80 350.05 950.07 353.80 951.30 C357.55 952.53 358.97 952.97 360.00 953.30" fill="none" stroke="#783c0c" stroke-width="1.05" stroke-dasharray="1.9,1.3"/>
<ellipse cx="292" cy="877.4" rx="21" ry="21.1" fill="none" stroke="#000" stroke-width="1.3"/>
<circle cx="291.1" cy="876.9" r="1.2" fill="none" stroke="#000" stroke-width="0.6"/>
<line x1="270.50" y1="876.00" x2="270.50" y2="879.00" stroke="#000" stroke-width="1"  shape-rendering="crispEdges"/>
<line x1="313.50" y1="876.00" x2="313.50" y2="879.00" stroke="#000" stroke-width="1"  shape-rendering="crispEdges"/>
<path d="M276.3 921.4 Q278 923.2 283 923.2 L286 922.5 Q296.5 916 299.5 907.5" fill="none" stroke="#000" stroke-width="1.3"/>
<circle cx="309.4" cy="888.7" r="2.4" fill="#ff0000"/>
<ellipse cx="288.3" cy="921.7" rx="4" ry="3" fill="#0000ff" transform="rotate(-25 288.3 921.7)"/>
<line x1="281.00" y1="917.00" x2="290.00" y2="925.70" stroke="#ff0000" stroke-width="1.1" />
<line x1="281.00" y1="925.70" x2="290.00" y2="917.00" stroke="#ff0000" stroke-width="1.1" />
</g>
<rect x="215.5" y="802.5" width="151" height="148" fill="none" stroke="#262626" stroke-width="1" shape-rendering="crispEdges"/>
<line x1="210.00" y1="803.50" x2="215.00" y2="803.50" stroke="#262626" stroke-width="1"  shape-rendering="crispEdges"/>
<line x1="206.00" y1="813.50" x2="215.00" y2="813.50" stroke="#262626" stroke-width="1"  shape-rendering="crispEdges"/>
<text x="202.50" y="818.19" text-anchor="end" class="n" ><tspan textLength="7.4" lengthAdjust="spacingAndGlyphs">-</tspan>60.</text>
<line x1="210.00" y1="824.50" x2="215.00" y2="824.50" stroke="#262626" stroke-width="1"  shape-rendering="crispEdges"/>
<line x1="206.00" y1="834.50" x2="215.00" y2="834.50" stroke="#262626" stroke-width="1"  shape-rendering="crispEdges"/>
<text x="202.50" y="839.13" text-anchor="end" class="n" ><tspan textLength="7.4" lengthAdjust="spacingAndGlyphs">-</tspan>40.</text>
<line x1="210.00" y1="845.50" x2="215.00" y2="845.50" stroke="#262626" stroke-width="1"  shape-rendering="crispEdges"/>
<line x1="206.00" y1="855.50" x2="215.00" y2="855.50" stroke="#262626" stroke-width="1"  shape-rendering="crispEdges"/>
<text x="202.50" y="860.06" text-anchor="end" class="n" ><tspan textLength="7.4" lengthAdjust="spacingAndGlyphs">-</tspan>20.</text>
<line x1="210.00" y1="866.50" x2="215.00" y2="866.50" stroke="#262626" stroke-width="1"  shape-rendering="crispEdges"/>
<line x1="206.00" y1="876.50" x2="215.00" y2="876.50" stroke="#262626" stroke-width="1"  shape-rendering="crispEdges"/>
<text x="202.50" y="881.00" text-anchor="end" class="n" >0.</text>
<line x1="210.00" y1="887.50" x2="215.00" y2="887.50" stroke="#262626" stroke-width="1"  shape-rendering="crispEdges"/>
<line x1="206.00" y1="897.50" x2="215.00" y2="897.50" stroke="#262626" stroke-width="1"  shape-rendering="crispEdges"/>
<text x="202.50" y="901.94" text-anchor="end" class="n" >20.</text>
<line x1="210.00" y1="908.50" x2="215.00" y2="908.50" stroke="#262626" stroke-width="1"  shape-rendering="crispEdges"/>
<line x1="206.00" y1="918.50" x2="215.00" y2="918.50" stroke="#262626" stroke-width="1"  shape-rendering="crispEdges"/>
<text x="202.50" y="922.87" text-anchor="end" class="n" >40.</text>
<line x1="210.00" y1="928.50" x2="215.00" y2="928.50" stroke="#262626" stroke-width="1"  shape-rendering="crispEdges"/>
<line x1="206.00" y1="939.50" x2="215.00" y2="939.50" stroke="#262626" stroke-width="1"  shape-rendering="crispEdges"/>
<text x="202.50" y="943.81" text-anchor="end" class="n" >60.</text>
<line x1="210.00" y1="949.50" x2="215.00" y2="949.50" stroke="#262626" stroke-width="1"  shape-rendering="crispEdges"/>
<line x1="366.50" y1="950.00" x2="366.50" y2="955.00" stroke="#262626" stroke-width="1"  shape-rendering="crispEdges"/>
<line x1="355.50" y1="950.00" x2="355.50" y2="955.00" stroke="#262626" stroke-width="1"  shape-rendering="crispEdges"/>
<line x1="344.50" y1="950.00" x2="344.50" y2="959.00" stroke="#262626" stroke-width="1"  shape-rendering="crispEdges"/>
<text x="344.10" y="973.80" text-anchor="middle" class="n" ><tspan textLength="7.4" lengthAdjust="spacingAndGlyphs">-</tspan>50.</text>
<line x1="333.50" y1="950.00" x2="333.50" y2="955.00" stroke="#262626" stroke-width="1"  shape-rendering="crispEdges"/>
<line x1="323.50" y1="950.00" x2="323.50" y2="955.00" stroke="#262626" stroke-width="1"  shape-rendering="crispEdges"/>
<line x1="312.50" y1="950.00" x2="312.50" y2="955.00" stroke="#262626" stroke-width="1"  shape-rendering="crispEdges"/>
<line x1="301.50" y1="950.00" x2="301.50" y2="955.00" stroke="#262626" stroke-width="1"  shape-rendering="crispEdges"/>
<line x1="291.50" y1="950.00" x2="291.50" y2="959.00" stroke="#262626" stroke-width="1"  shape-rendering="crispEdges"/>
<text x="291.10" y="973.80" text-anchor="middle" class="n" >0.</text>
<line x1="280.50" y1="950.00" x2="280.50" y2="955.00" stroke="#262626" stroke-width="1"  shape-rendering="crispEdges"/>
<line x1="269.50" y1="950.00" x2="269.50" y2="955.00" stroke="#262626" stroke-width="1"  shape-rendering="crispEdges"/>
<line x1="259.50" y1="950.00" x2="259.50" y2="955.00" stroke="#262626" stroke-width="1"  shape-rendering="crispEdges"/>
<line x1="248.50" y1="950.00" x2="248.50" y2="955.00" stroke="#262626" stroke-width="1"  shape-rendering="crispEdges"/>
<line x1="237.50" y1="950.00" x2="237.50" y2="959.00" stroke="#262626" stroke-width="1"  shape-rendering="crispEdges"/>
<text x="237.60" y="973.80" text-anchor="middle" class="n" >50.</text>
<line x1="226.50" y1="950.00" x2="226.50" y2="955.00" stroke="#262626" stroke-width="1"  shape-rendering="crispEdges"/>
<line x1="216.50" y1="950.00" x2="216.50" y2="955.00" stroke="#262626" stroke-width="1"  shape-rendering="crispEdges"/>
<text transform="translate(166,877) rotate(-90)" text-anchor="middle" class="w" style="letter-spacing:0.9px">KSM-Y</text>
<text x="291.00" y="991.50" text-anchor="middle" class="w" style="letter-spacing:0.9px">KSM-X</text>
<clipPath id="b2"><rect x="509" y="802.5" width="151.29999999999995" height="147.5"/></clipPath>
<g clip-path="url(#b2)">
<path d="M546.00 801.00 C545.58 801.47 544.92 802.17 543.50 803.80 C542.08 805.43 539.32 808.18 537.50 810.80 C535.68 813.42 534.13 816.42 532.60 819.50 C531.07 822.58 529.65 825.87 528.30 829.30 C526.95 832.73 525.67 836.50 524.50 840.10 C523.33 843.70 522.15 846.75 521.30 850.90 C520.45 855.05 519.73 860.73 519.40 865.00 C519.07 869.27 519.30 872.67 519.30 876.50 C519.30 880.33 519.07 883.73 519.40 888.00 C519.73 892.27 520.45 897.95 521.30 902.10 C522.15 906.25 523.33 909.30 524.50 912.90 C525.67 916.50 526.95 920.27 528.30 923.70 C529.65 927.13 531.07 930.42 532.60 933.50 C534.13 936.58 535.68 939.58 537.50 942.20 C539.32 944.82 542.08 947.57 543.50 949.20 C544.92 950.83 545.58 951.53 546.00 952.00" fill="none" stroke="#0000ff" stroke-width="1.05" stroke-dasharray="1.9,1.3"/>
<path d="M580.00 801.50 C579.42 801.93 578.53 802.55 576.50 804.10 C574.47 805.65 570.68 808.23 567.80 810.80 C564.92 813.37 561.90 816.42 559.20 819.50 C556.50 822.58 553.95 825.87 551.60 829.30 C549.25 832.73 547.08 836.13 545.10 840.10 C543.12 844.07 541.10 848.58 539.70 853.10 C538.30 857.62 537.27 863.30 536.70 867.20 C536.13 871.10 536.30 873.40 536.30 876.50 C536.30 879.60 536.13 881.90 536.70 885.80 C537.27 889.70 538.30 895.38 539.70 899.90 C541.10 904.42 543.12 908.93 545.10 912.90 C547.08 916.87 549.25 920.27 551.60 923.70 C553.95 927.13 556.50 930.42 559.20 933.50 C561.90 936.58 564.92 939.63 567.80 942.20 C570.68 944.77 574.47 947.35 576.50 948.90 C578.53 950.45 579.42 951.07 580.00 951.50" fill="none" stroke="#783c0c" stroke-width="1.05" stroke-dasharray="1.9,1.3"/>
<line x1="549.00" y1="886.50" x2="623.75" y2="866.70" stroke="#000" stroke-width="1.8" />
<circle cx="585.4" cy="876.8" r="1.4" fill="#ddd" stroke="#000" stroke-width="0.7"/>
<path d="M559.2 906.5 L574 906.5 M583.5 903.2 Q592 900.2 599.8 894.3" fill="none" stroke="#000" stroke-width="1.3"/>
<circle cx="617.5" cy="868.3" r="2.6" fill="#ff0000"/>
<ellipse cx="579.1" cy="904.8" rx="5" ry="2.9" fill="#0000ff" transform="rotate(-15 579.1 904.8)"/>
<line x1="572.00" y1="900.00" x2="581.00" y2="909.00" stroke="#ff0000" stroke-width="1.1" />
<line x1="572.00" y1="909.00" x2="581.00" y2="900.00" stroke="#ff0000" stroke-width="1.1" />
</g>
<rect x="509.5" y="802.5" width="151" height="148" fill="none" stroke="#262626" stroke-width="1" shape-rendering="crispEdges"/>
<line x1="500.00" y1="949.50" x2="509.00" y2="949.50" stroke="#262626" stroke-width="1"  shape-rendering="crispEdges"/>
<text x="496.40" y="954.30" text-anchor="end" class="n" ><tspan textLength="7.4" lengthAdjust="spacingAndGlyphs">-</tspan>40.</text>
<line x1="504.00" y1="948.50" x2="509.00" y2="948.50" stroke="#262626" stroke-width="1"  shape-rendering="crispEdges"/>
<line x1="504.00" y1="946.50" x2="509.00" y2="946.50" stroke="#262626" stroke-width="1"  shape-rendering="crispEdges"/>
<line x1="504.00" y1="944.50" x2="509.00" y2="944.50" stroke="#262626" stroke-width="1"  shape-rendering="crispEdges"/>
<line x1="504.00" y1="942.50" x2="509.00" y2="942.50" stroke="#262626" stroke-width="1"  shape-rendering="crispEdges"/>
<line x1="504.00" y1="940.50" x2="509.00" y2="940.50" stroke="#262626" stroke-width="1"  shape-rendering="crispEdges"/>
<line x1="504.00" y1="938.50" x2="509.00" y2="938.50" stroke="#262626" stroke-width="1"  shape-rendering="crispEdges"/>
<line x1="504.00" y1="937.50" x2="509.00" y2="937.50" stroke="#262626" stroke-width="1"  shape-rendering="crispEdges"/>
<line x1="504.00" y1="935.50" x2="509.00" y2="935.50" stroke="#262626" stroke-width="1"  shape-rendering="crispEdges"/>
<line x1="504.00" y1="933.50" x2="509.00" y2="933.50" stroke="#262626" stroke-width="1"  shape-rendering="crispEdges"/>
<line x1="500.00" y1="931.50" x2="509.00" y2="931.50" stroke="#262626" stroke-width="1"  shape-rendering="crispEdges"/>
<text x="496.40" y="935.95" text-anchor="end" class="n" ><tspan textLength="7.4" lengthAdjust="spacingAndGlyphs">-</tspan>30.</text>
<line x1="504.00" y1="929.50" x2="509.00" y2="929.50" stroke="#262626" stroke-width="1"  shape-rendering="crispEdges"/>
<line x1="504.00" y1="927.50" x2="509.00" y2="927.50" stroke="#262626" stroke-width="1"  shape-rendering="crispEdges"/>
<line x1="504.00" y1="926.50" x2="509.00" y2="926.50" stroke="#262626" stroke-width="1"  shape-rendering="crispEdges"/>
<line x1="504.00" y1="924.50" x2="509.00" y2="924.50" stroke="#262626" stroke-width="1"  shape-rendering="crispEdges"/>
<line x1="504.00" y1="922.50" x2="509.00" y2="922.50" stroke="#262626" stroke-width="1"  shape-rendering="crispEdges"/>
<line x1="504.00" y1="920.50" x2="509.00" y2="920.50" stroke="#262626" stroke-width="1"  shape-rendering="crispEdges"/>
<line x1="504.00" y1="918.50" x2="509.00" y2="918.50" stroke="#262626" stroke-width="1"  shape-rendering="crispEdges"/>
<line x1="504.00" y1="916.50" x2="509.00" y2="916.50" stroke="#262626" stroke-width="1"  shape-rendering="crispEdges"/>
<line x1="504.00" y1="915.50" x2="509.00" y2="915.50" stroke="#262626" stroke-width="1"  shape-rendering="crispEdges"/>
<line x1="500.00" y1="913.50" x2="509.00" y2="913.50" stroke="#262626" stroke-width="1"  shape-rendering="crispEdges"/>
<text x="496.40" y="917.60" text-anchor="end" class="n" ><tspan textLength="7.4" lengthAdjust="spacingAndGlyphs">-</tspan>20.</text>
<line x1="504.00" y1="911.50" x2="509.00" y2="911.50" stroke="#262626" stroke-width="1"  shape-rendering="crispEdges"/>
<line x1="504.00" y1="909.50" x2="509.00" y2="909.50" stroke="#262626" stroke-width="1"  shape-rendering="crispEdges"/>
<line x1="504.00" y1="907.50" x2="509.00" y2="907.50" stroke="#262626" stroke-width="1"  shape-rendering="crispEdges"/>
<line x1="504.00" y1="905.50" x2="509.00" y2="905.50" stroke="#262626" stroke-width="1"  shape-rendering="crispEdges"/>
<line x1="504.00" y1="904.50" x2="509.00" y2="904.50" stroke="#262626" stroke-width="1"  shape-rendering="crispEdges"/>
<line x1="504.00" y1="902.50" x2="509.00" y2="902.50" stroke="#262626" stroke-width="1"  shape-rendering="crispEdges"/>
<line x1="504.00" y1="900.50" x2="509.00" y2="900.50" stroke="#262626" stroke-width="1"  shape-rendering="crispEdges"/>
<line x1="504.00" y1="898.50" x2="509.00" y2="898.50" stroke="#262626" stroke-width="1"  shape-rendering="crispEdges"/>
<line x1="504.00" y1="896.50" x2="509.00" y2="896.50" stroke="#262626" stroke-width="1"  shape-rendering="crispEdges"/>
<line x1="500.00" y1="894.50" x2="509.00" y2="894.50" stroke="#262626" stroke-width="1"  shape-rendering="crispEdges"/>
<text x="496.40" y="899.25" text-anchor="end" class="n" ><tspan textLength="7.4" lengthAdjust="spacingAndGlyphs">-</tspan>10.</text>
<line x1="504.00" y1="893.50" x2="509.00" y2="893.50" stroke="#262626" stroke-width="1"  shape-rendering="crispEdges"/>
<line x1="504.00" y1="891.50" x2="509.00" y2="891.50" stroke="#262626" stroke-width="1"  shape-rendering="crispEdges"/>
<line x1="504.00" y1="889.50" x2="509.00" y2="889.50" stroke="#262626" stroke-width="1"  shape-rendering="crispEdges"/>
<line x1="504.00" y1="887.50" x2="509.00" y2="887.50" stroke="#262626" stroke-width="1"  shape-rendering="crispEdges"/>
<line x1="504.00" y1="885.50" x2="509.00" y2="885.50" stroke="#262626" stroke-width="1"  shape-rendering="crispEdges"/>
<line x1="504.00" y1="883.50" x2="509.00" y2="883.50" stroke="#262626" stroke-width="1"  shape-rendering="crispEdges"/>
<line x1="504.00" y1="882.50" x2="509.00" y2="882.50" stroke="#262626" stroke-width="1"  shape-rendering="crispEdges"/>
<line x1="504.00" y1="880.50" x2="509.00" y2="880.50" stroke="#262626" stroke-width="1"  shape-rendering="crispEdges"/>
<line x1="504.00" y1="878.50" x2="509.00" y2="878.50" stroke="#262626" stroke-width="1"  shape-rendering="crispEdges"/>
<line x1="500.00" y1="876.50" x2="509.00" y2="876.50" stroke="#262626" stroke-width="1"  shape-rendering="crispEdges"/>
<text x="496.40" y="880.90" text-anchor="end" class="n" >0.</text>
<line x1="504.00" y1="874.50" x2="509.00" y2="874.50" stroke="#262626" stroke-width="1"  shape-rendering="crispEdges"/>
<line x1="504.00" y1="872.50" x2="509.00" y2="872.50" stroke="#262626" stroke-width="1"  shape-rendering="crispEdges"/>
<line x1="504.00" y1="870.50" x2="509.00" y2="870.50" stroke="#262626" stroke-width="1"  shape-rendering="crispEdges"/>
<line x1="504.00" y1="869.50" x2="509.00" y2="869.50" stroke="#262626" stroke-width="1"  shape-rendering="crispEdges"/>
<line x1="504.00" y1="867.50" x2="509.00" y2="867.50" stroke="#262626" stroke-width="1"  shape-rendering="crispEdges"/>
<line x1="504.00" y1="865.50" x2="509.00" y2="865.50" stroke="#262626" stroke-width="1"  shape-rendering="crispEdges"/>
<line x1="504.00" y1="863.50" x2="509.00" y2="863.50" stroke="#262626" stroke-width="1"  shape-rendering="crispEdges"/>
<line x1="504.00" y1="861.50" x2="509.00" y2="861.50" stroke="#262626" stroke-width="1"  shape-rendering="crispEdges"/>
<line x1="504.00" y1="859.50" x2="509.00" y2="859.50" stroke="#262626" stroke-width="1"  shape-rendering="crispEdges"/>
<line x1="500.00" y1="858.50" x2="509.00" y2="858.50" stroke="#262626" stroke-width="1"  shape-rendering="crispEdges"/>
<text x="496.40" y="862.55" text-anchor="end" class="n" >10.</text>
<line x1="504.00" y1="856.50" x2="509.00" y2="856.50" stroke="#262626" stroke-width="1"  shape-rendering="crispEdges"/>
<line x1="504.00" y1="854.50" x2="509.00" y2="854.50" stroke="#262626" stroke-width="1"  shape-rendering="crispEdges"/>
<line x1="504.00" y1="852.50" x2="509.00" y2="852.50" stroke="#262626" stroke-width="1"  shape-rendering="crispEdges"/>
<line x1="504.00" y1="850.50" x2="509.00" y2="850.50" stroke="#262626" stroke-width="1"  shape-rendering="crispEdges"/>
<line x1="504.00" y1="848.50" x2="509.00" y2="848.50" stroke="#262626" stroke-width="1"  shape-rendering="crispEdges"/>
<line x1="504.00" y1="847.50" x2="509.00" y2="847.50" stroke="#262626" stroke-width="1"  shape-rendering="crispEdges"/>
<line x1="504.00" y1="845.50" x2="509.00" y2="845.50" stroke="#262626" stroke-width="1"  shape-rendering="crispEdges"/>
<line x1="504.00" y1="843.50" x2="509.00" y2="843.50" stroke="#262626" stroke-width="1"  shape-rendering="crispEdges"/>
<line x1="504.00" y1="841.50" x2="509.00" y2="841.50" stroke="#262626" stroke-width="1"  shape-rendering="crispEdges"/>
<line x1="500.00" y1="839.50" x2="509.00" y2="839.50" stroke="#262626" stroke-width="1"  shape-rendering="crispEdges"/>
<text x="496.40" y="844.20" text-anchor="end" class="n" >20.</text>
<line x1="504.00" y1="837.50" x2="509.00" y2="837.50" stroke="#262626" stroke-width="1"  shape-rendering="crispEdges"/>
<line x1="504.00" y1="836.50" x2="509.00" y2="836.50" stroke="#262626" stroke-width="1"  shape-rendering="crispEdges"/>
<line x1="504.00" y1="834.50" x2="509.00" y2="834.50" stroke="#262626" stroke-width="1"  shape-rendering="crispEdges"/>
<line x1="504.00" y1="832.50" x2="509.00" y2="832.50" stroke="#262626" stroke-width="1"  shape-rendering="crispEdges"/>
<line x1="504.00" y1="830.50" x2="509.00" y2="830.50" stroke="#262626" stroke-width="1"  shape-rendering="crispEdges"/>
<line x1="504.00" y1="828.50" x2="509.00" y2="828.50" stroke="#262626" stroke-width="1"  shape-rendering="crispEdges"/>
<line x1="504.00" y1="826.50" x2="509.00" y2="826.50" stroke="#262626" stroke-width="1"  shape-rendering="crispEdges"/>
<line x1="504.00" y1="825.50" x2="509.00" y2="825.50" stroke="#262626" stroke-width="1"  shape-rendering="crispEdges"/>
<line x1="504.00" y1="823.50" x2="509.00" y2="823.50" stroke="#262626" stroke-width="1"  shape-rendering="crispEdges"/>
<line x1="500.00" y1="821.50" x2="509.00" y2="821.50" stroke="#262626" stroke-width="1"  shape-rendering="crispEdges"/>
<text x="496.40" y="825.85" text-anchor="end" class="n" >30.</text>
<line x1="504.00" y1="819.50" x2="509.00" y2="819.50" stroke="#262626" stroke-width="1"  shape-rendering="crispEdges"/>
<line x1="504.00" y1="817.50" x2="509.00" y2="817.50" stroke="#262626" stroke-width="1"  shape-rendering="crispEdges"/>
<line x1="504.00" y1="815.50" x2="509.00" y2="815.50" stroke="#262626" stroke-width="1"  shape-rendering="crispEdges"/>
<line x1="504.00" y1="814.50" x2="509.00" y2="814.50" stroke="#262626" stroke-width="1"  shape-rendering="crispEdges"/>
<line x1="504.00" y1="812.50" x2="509.00" y2="812.50" stroke="#262626" stroke-width="1"  shape-rendering="crispEdges"/>
<line x1="504.00" y1="810.50" x2="509.00" y2="810.50" stroke="#262626" stroke-width="1"  shape-rendering="crispEdges"/>
<line x1="504.00" y1="808.50" x2="509.00" y2="808.50" stroke="#262626" stroke-width="1"  shape-rendering="crispEdges"/>
<line x1="504.00" y1="806.50" x2="509.00" y2="806.50" stroke="#262626" stroke-width="1"  shape-rendering="crispEdges"/>
<line x1="504.00" y1="804.50" x2="509.00" y2="804.50" stroke="#262626" stroke-width="1"  shape-rendering="crispEdges"/>
<line x1="500.00" y1="803.50" x2="509.00" y2="803.50" stroke="#262626" stroke-width="1"  shape-rendering="crispEdges"/>
<text x="496.40" y="807.50" text-anchor="end" class="n" >40.</text>
<line x1="660.50" y1="950.00" x2="660.50" y2="959.00" stroke="#262626" stroke-width="1"  shape-rendering="crispEdges"/>
<text x="659.70" y="973.80" text-anchor="middle" class="n" ><tspan textLength="7.4" lengthAdjust="spacingAndGlyphs">-</tspan>40.</text>
<line x1="641.50" y1="950.00" x2="641.50" y2="955.00" stroke="#262626" stroke-width="1"  shape-rendering="crispEdges"/>
<line x1="623.50" y1="950.00" x2="623.50" y2="959.00" stroke="#262626" stroke-width="1"  shape-rendering="crispEdges"/>
<text x="622.10" y="973.80" text-anchor="middle" class="n" ><tspan textLength="7.4" lengthAdjust="spacingAndGlyphs">-</tspan>20.</text>
<line x1="604.50" y1="950.00" x2="604.50" y2="955.00" stroke="#262626" stroke-width="1"  shape-rendering="crispEdges"/>
<line x1="585.50" y1="950.00" x2="585.50" y2="959.00" stroke="#262626" stroke-width="1"  shape-rendering="crispEdges"/>
<text x="585.50" y="973.80" text-anchor="middle" class="n" >0.</text>
<line x1="566.50" y1="950.00" x2="566.50" y2="955.00" stroke="#262626" stroke-width="1"  shape-rendering="crispEdges"/>
<line x1="547.50" y1="950.00" x2="547.50" y2="959.00" stroke="#262626" stroke-width="1"  shape-rendering="crispEdges"/>
<text x="547.90" y="973.80" text-anchor="middle" class="n" >20.</text>
<line x1="529.50" y1="950.00" x2="529.50" y2="955.00" stroke="#262626" stroke-width="1"  shape-rendering="crispEdges"/>
<line x1="510.50" y1="950.00" x2="510.50" y2="959.00" stroke="#262626" stroke-width="1"  shape-rendering="crispEdges"/>
<text x="510.30" y="973.80" text-anchor="middle" class="n" >40.</text>
<text transform="translate(459.5,877) rotate(-90)" text-anchor="middle" class="w" style="letter-spacing:0.9px">KSM-Z</text>
<text x="585.00" y="991.50" text-anchor="middle" class="w" style="letter-spacing:0.9px">KSM-X</text>
<ellipse cx="879.0" cy="876.4" rx="66.6" ry="65.1" fill="none" stroke="#0000ff" stroke-width="1.05" stroke-dasharray="1.9,1.3"/>
<ellipse cx="878.9" cy="876.4" rx="43.5" ry="42" fill="none" stroke="#783c0c" stroke-width="1.05" stroke-dasharray="1.9,1.3"/>
<ellipse cx="880.1" cy="876.75" rx="21.4" ry="5.35" fill="none" stroke="#000" stroke-width="1.3"/>
<circle cx="879.3" cy="877" r="1.1" fill="none" stroke="#000" stroke-width="0.6"/>
<line x1="911.25" y1="886.50" x2="923.00" y2="892.00" stroke="#000" stroke-width="1.3" />
<circle cx="891.5" cy="872.3" r="2.5" fill="#ff0000"/>
<circle cx="925.4" cy="892.7" r="3" fill="#0000ff"/>
<line x1="921.00" y1="888.20" x2="930.00" y2="896.70" stroke="#ff0000" stroke-width="1.1" />
<line x1="921.00" y1="896.70" x2="930.00" y2="888.20" stroke="#ff0000" stroke-width="1.1" />
<rect x="803.5" y="802.5" width="151" height="148" fill="none" stroke="#262626" stroke-width="1" shape-rendering="crispEdges"/>
<line x1="799.00" y1="949.50" x2="804.00" y2="949.50" stroke="#262626" stroke-width="1"  shape-rendering="crispEdges"/>
<line x1="795.00" y1="939.50" x2="804.00" y2="939.50" stroke="#262626" stroke-width="1"  shape-rendering="crispEdges"/>
<text x="790.00" y="943.81" text-anchor="end" class="n" ><tspan textLength="7.4" lengthAdjust="spacingAndGlyphs">-</tspan>60.</text>
<line x1="799.00" y1="928.50" x2="804.00" y2="928.50" stroke="#262626" stroke-width="1"  shape-rendering="crispEdges"/>
<line x1="795.00" y1="918.50" x2="804.00" y2="918.50" stroke="#262626" stroke-width="1"  shape-rendering="crispEdges"/>
<text x="790.00" y="922.87" text-anchor="end" class="n" ><tspan textLength="7.4" lengthAdjust="spacingAndGlyphs">-</tspan>40.</text>
<line x1="799.00" y1="908.50" x2="804.00" y2="908.50" stroke="#262626" stroke-width="1"  shape-rendering="crispEdges"/>
<line x1="795.00" y1="897.50" x2="804.00" y2="897.50" stroke="#262626" stroke-width="1"  shape-rendering="crispEdges"/>
<text x="790.00" y="901.94" text-anchor="end" class="n" ><tspan textLength="7.4" lengthAdjust="spacingAndGlyphs">-</tspan>20.</text>
<line x1="799.00" y1="887.50" x2="804.00" y2="887.50" stroke="#262626" stroke-width="1"  shape-rendering="crispEdges"/>
<line x1="795.00" y1="876.50" x2="804.00" y2="876.50" stroke="#262626" stroke-width="1"  shape-rendering="crispEdges"/>
<text x="790.00" y="881.00" text-anchor="end" class="n" >0.</text>
<line x1="799.00" y1="866.50" x2="804.00" y2="866.50" stroke="#262626" stroke-width="1"  shape-rendering="crispEdges"/>
<line x1="795.00" y1="855.50" x2="804.00" y2="855.50" stroke="#262626" stroke-width="1"  shape-rendering="crispEdges"/>
<text x="790.00" y="860.06" text-anchor="end" class="n" >20.</text>
<line x1="799.00" y1="845.50" x2="804.00" y2="845.50" stroke="#262626" stroke-width="1"  shape-rendering="crispEdges"/>
<line x1="795.00" y1="834.50" x2="804.00" y2="834.50" stroke="#262626" stroke-width="1"  shape-rendering="crispEdges"/>
<text x="790.00" y="839.13" text-anchor="end" class="n" >40.</text>
<line x1="799.00" y1="824.50" x2="804.00" y2="824.50" stroke="#262626" stroke-width="1"  shape-rendering="crispEdges"/>
<line x1="795.00" y1="813.50" x2="804.00" y2="813.50" stroke="#262626" stroke-width="1"  shape-rendering="crispEdges"/>
<text x="790.00" y="818.19" text-anchor="end" class="n" >60.</text>
<line x1="799.00" y1="803.50" x2="804.00" y2="803.50" stroke="#262626" stroke-width="1"  shape-rendering="crispEdges"/>
<line x1="804.50" y1="950.00" x2="804.50" y2="955.00" stroke="#262626" stroke-width="1"  shape-rendering="crispEdges"/>
<line x1="815.50" y1="950.00" x2="815.50" y2="955.00" stroke="#262626" stroke-width="1"  shape-rendering="crispEdges"/>
<line x1="825.50" y1="950.00" x2="825.50" y2="959.00" stroke="#262626" stroke-width="1"  shape-rendering="crispEdges"/>
<text x="824.40" y="973.80" text-anchor="middle" class="n" ><tspan textLength="7.4" lengthAdjust="spacingAndGlyphs">-</tspan>50.</text>
<line x1="836.50" y1="950.00" x2="836.50" y2="955.00" stroke="#262626" stroke-width="1"  shape-rendering="crispEdges"/>
<line x1="847.50" y1="950.00" x2="847.50" y2="955.00" stroke="#262626" stroke-width="1"  shape-rendering="crispEdges"/>
<line x1="858.50" y1="950.00" x2="858.50" y2="955.00" stroke="#262626" stroke-width="1"  shape-rendering="crispEdges"/>
<line x1="868.50" y1="950.00" x2="868.50" y2="955.00" stroke="#262626" stroke-width="1"  shape-rendering="crispEdges"/>
<line x1="879.50" y1="950.00" x2="879.50" y2="959.00" stroke="#262626" stroke-width="1"  shape-rendering="crispEdges"/>
<text x="879.40" y="973.80" text-anchor="middle" class="n" >0.</text>
<line x1="890.50" y1="950.00" x2="890.50" y2="955.00" stroke="#262626" stroke-width="1"  shape-rendering="crispEdges"/>
<line x1="900.50" y1="950.00" x2="900.50" y2="955.00" stroke="#262626" stroke-width="1"  shape-rendering="crispEdges"/>
<line x1="911.50" y1="950.00" x2="911.50" y2="955.00" stroke="#262626" stroke-width="1"  shape-rendering="crispEdges"/>
<line x1="922.50" y1="950.00" x2="922.50" y2="955.00" stroke="#262626" stroke-width="1"  shape-rendering="crispEdges"/>
<line x1="932.50" y1="950.00" x2="932.50" y2="959.00" stroke="#262626" stroke-width="1"  shape-rendering="crispEdges"/>
<text x="932.90" y="973.80" text-anchor="middle" class="n" >50.</text>
<line x1="943.50" y1="950.00" x2="943.50" y2="955.00" stroke="#262626" stroke-width="1"  shape-rendering="crispEdges"/>
<line x1="954.50" y1="950.00" x2="954.50" y2="955.00" stroke="#262626" stroke-width="1"  shape-rendering="crispEdges"/>
<text transform="translate(754,877) rotate(-90)" text-anchor="middle" class="w" style="letter-spacing:0.9px">KSM-Z</text>
<text x="879.00" y="991.50" text-anchor="middle" class="w" style="letter-spacing:0.9px">KSM-Y</text>
</svg>
</body></html>
